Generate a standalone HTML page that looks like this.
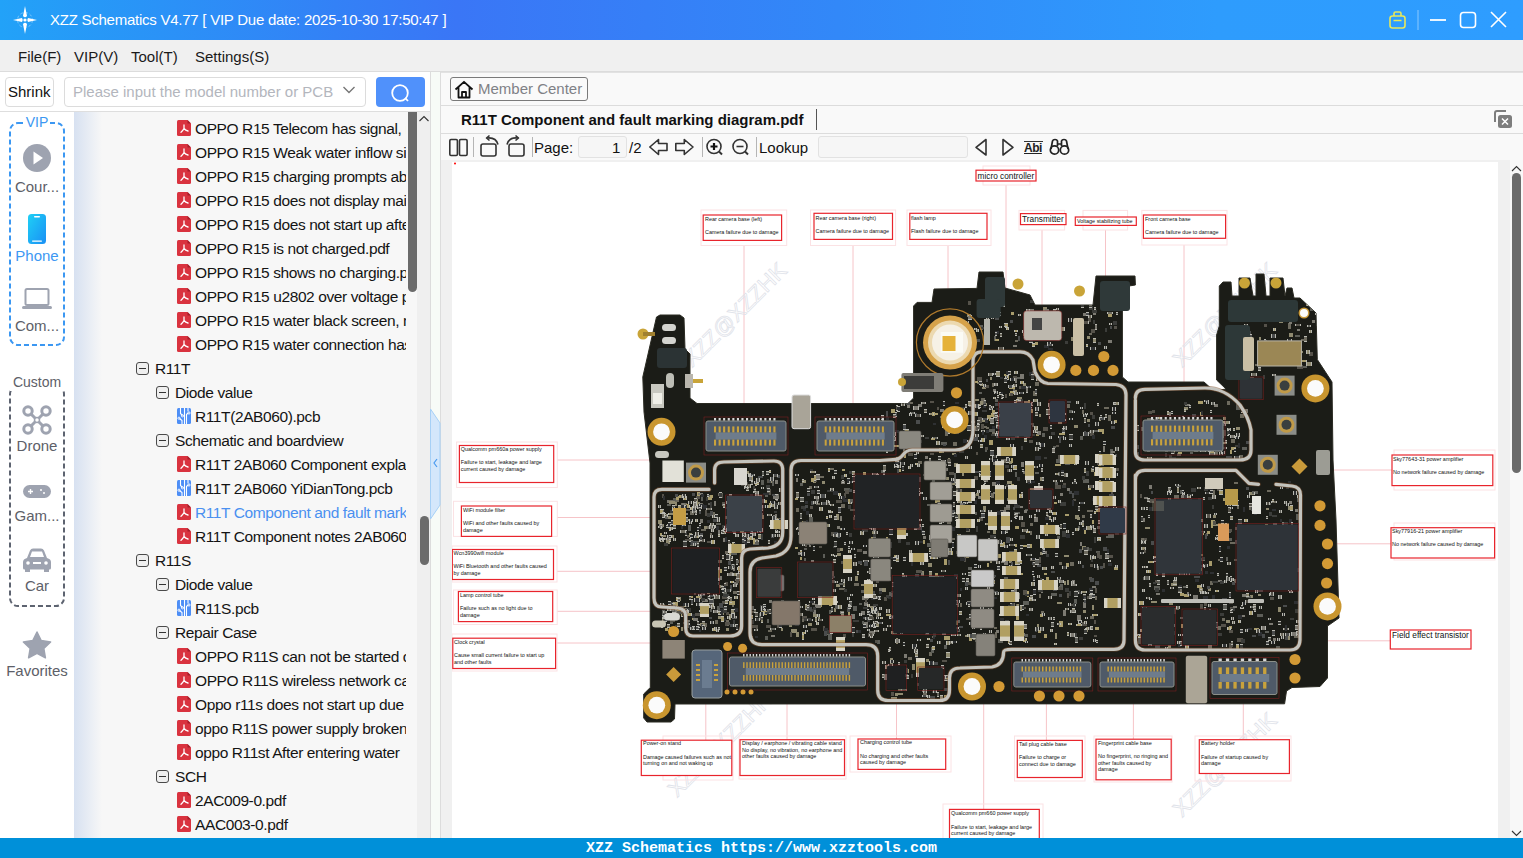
<!DOCTYPE html>
<html><head><meta charset="utf-8">
<style>
*{margin:0;padding:0;box-sizing:border-box}
html,body{width:1523px;height:858px;overflow:hidden;background:#f0f0f0;font-family:"Liberation Sans",sans-serif;font-size:15px;color:#111}
.a{position:absolute}
#title{left:0;top:0;width:1523px;height:40px;background:linear-gradient(90deg,#22a2f8 0%,#3381f6 22%,#3a76f6 30%,#3288f8 55%,#2e9cfd 80%,#2e9dff 100%)}
#title .t{left:50px;top:11px;color:#fff;font-size:15px;white-space:nowrap;letter-spacing:-0.25px}
#menu{left:0;top:40px;width:1523px;height:32px;background:#f0f0f0;border-bottom:1px solid #dcdcdc}
#menu span{position:absolute;top:8px;font-size:15px;color:#1a1a1a}
#srow{left:0;top:72px;width:431px;height:40px;background:#fff;border-bottom:1px solid #dedede}
.btn{border:1px solid #dcdcdc;border-radius:4px;background:#fff}
#nav{left:0;top:112px;width:74px;height:726px;background:#fff}
#tree{left:74px;top:112px;width:344px;height:726px;background:#f7f7f7;overflow:hidden}
#tree .grad{left:0;top:0;width:28px;height:726px;background:linear-gradient(90deg,#d7e1f1,#f7f7f7)}
.row{position:absolute;white-space:nowrap;font-size:15.5px;letter-spacing:-0.4px;color:#141414;height:24px;line-height:24px}
.box{position:absolute;width:13px;height:13px;border:1px solid #4a4a4a;border-radius:3px;background:#efefef}
.box:after{content:"";position:absolute;left:2px;top:5px;width:7px;height:1.3px;background:#333}
.nl{position:absolute;width:74px;text-align:center;font-size:15px;color:#5d6068}
#status{left:0;top:838px;width:1523px;height:20px;background:#0090d9}
#status .t{left:586px;top:2px;font-family:"Liberation Mono",monospace;font-size:15px;font-weight:bold;color:#fff;white-space:nowrap}
#rp{left:441px;top:72px;width:1082px;height:766px;background:#f9f9f9}
</style></head><body>

<!-- TITLE BAR -->
<div id="title" class="a">
  <svg class="a" style="left:12px;top:5px" width="26" height="30" viewBox="0 0 26 30">
    <circle cx="13" cy="15" r="7.5" fill="none" stroke="rgba(255,255,255,.35)" stroke-width="1" stroke-dasharray="3 2"/>
    <path d="M13 1 L15 11 Q13 13.5 11 11 Z" fill="#fff"/>
    <path d="M13 29 L15 19 Q13 16.5 11 19 Z" fill="#fff"/>
    <path d="M1 15 L10 13 Q11.5 15 10 17 Z" fill="#fff"/>
    <path d="M25 15 L16 13 Q14.5 15 16 17 Z" fill="#fff"/>
    <circle cx="13" cy="15" r="1.6" fill="#fff"/>
  </svg>
  <div class="a t">XZZ Schematics V4.77 [ VIP Due date: 2025-10-30 17:50:47 ]</div>
  <svg class="a" style="left:1388px;top:10px" width="125" height="22" viewBox="0 0 125 22">
    <rect x="2" y="6" width="15" height="12" rx="2.5" fill="none" stroke="#e8e85a" stroke-width="1.6"/>
    <path d="M6 6 V3.5 Q6 2 7.5 2 H11.5 Q13 2 13 3.5 V6" fill="none" stroke="#e8e85a" stroke-width="1.6"/>
    <line x1="5.5" y1="10.5" x2="13.5" y2="10.5" stroke="#e8e85a" stroke-width="1.5"/>
    <line x1="30" y1="0" x2="30" y2="20" stroke="rgba(255,255,255,.45)" stroke-width="1"/>
    <line x1="42" y1="10" x2="58" y2="10" stroke="#fff" stroke-width="1.8"/>
    <rect x="72.5" y="2.5" width="15" height="15" rx="3" fill="none" stroke="#fff" stroke-width="1.6"/>
    <path d="M103 2 L118 17 M118 2 L103 17" stroke="#fff" stroke-width="1.6"/>
  </svg>
</div>

<!-- MENU -->
<div id="menu" class="a">
  <span style="left:18px">File(F)</span>
  <span style="left:74px">VIP(V)</span>
  <span style="left:131px">Tool(T)</span>
  <span style="left:195px">Settings(S)</span>
</div>

<!-- SEARCH ROW -->
<div id="srow" class="a">
  <div class="a btn" style="left:5px;top:5px;width:49px;height:30px"></div>
  <div class="a" style="left:8px;top:11px;font-size:15px;color:#111">Shrink</div>
  <div class="a btn" style="left:64px;top:5px;width:302px;height:30px"></div>
  <div class="a" style="left:73px;top:11px;font-size:15px;color:#b3b6bd;white-space:nowrap">Please input the model number or PCB</div>
  <svg class="a" style="left:342px;top:13px" width="14" height="10" viewBox="0 0 14 10"><path d="M1.5 2 L7 7.5 L12.5 2" fill="none" stroke="#777" stroke-width="1.4"/></svg>
  <div class="a" style="left:376px;top:5px;width:49px;height:30px;background:#5091fb;border-radius:4px"></div>
  <svg class="a" style="left:388px;top:10px" width="26" height="22" viewBox="0 0 26 22"><circle cx="12" cy="11" r="7.8" fill="none" stroke="#fff" stroke-width="1.8"/><path d="M17.2 16 L20 19" stroke="#fff" stroke-width="1.8"/></svg>
</div>

<!-- NAV -->
<div id="nav" class="a">
<svg class="a" style="left:9px;top:10px" width="56" height="224"><rect x="1" y="1" width="54" height="222" rx="8" fill="none" stroke="#3b97f2" stroke-width="2" stroke-dasharray="5 3"/></svg>
<div class="a" style="left:24px;top:2px;width:26px;height:16px;background:#fff;color:#3b97f2;font-size:14px;text-align:center;line-height:16px">VIP</div>
<svg class="a" style="left:23px;top:32px" width="28" height="28" viewBox="0 0 28 28"><circle cx="14" cy="14" r="14" fill="#9ea3b0"/><path d="M10.5 7.5 L20 14 L10.5 20.5 Z" fill="#fff"/></svg>
<div class="nl" style="left:0;top:66px">Cour...</div>
<svg class="a" style="left:28px;top:102px" width="18" height="30" viewBox="0 0 18 30"><defs><linearGradient id="pg" x1="0" y1="0" x2="1" y2="1"><stop offset="0" stop-color="#1fd0f5"/><stop offset="1" stop-color="#1a8ff5"/></linearGradient></defs><rect x="0" y="0" width="18" height="30" rx="3.5" fill="url(#pg)"/><rect x="6" y="2" width="6" height="1.4" rx=".7" fill="#fff"/><rect x="4" y="26.5" width="10" height="1.2" rx=".6" fill="#fff"/></svg>
<div class="nl" style="left:0;top:135px;color:#3d98f3">Phone</div>
<svg class="a" style="left:22px;top:176px" width="30" height="22" viewBox="0 0 30 22"><rect x="3.5" y="1" width="23" height="16" rx="1.5" fill="none" stroke="#9ea3b0" stroke-width="2"/><rect x="0" y="18" width="30" height="3" rx="1.5" fill="#9ea3b0"/></svg>
<div class="nl" style="left:0;top:205px">Com...</div>

<svg class="a" style="left:9px;top:273px" width="56" height="222"><rect x="1" y="1" width="54" height="220" rx="8" fill="none" stroke="#5d6370" stroke-width="2" stroke-dasharray="5 3"/></svg>
<div class="a" style="left:10px;top:262px;width:54px;height:17px;background:#fff;color:#5d6068;font-size:14px;text-align:center;line-height:17px">Custom</div>
<svg class="a" style="left:22px;top:293px" width="30" height="30" viewBox="0 0 30 30"><g fill="none" stroke="#9ea3b0" stroke-width="3"><circle cx="6" cy="6" r="4.2"/><circle cx="24" cy="6" r="4.2"/><circle cx="6" cy="24" r="4.2"/><circle cx="24" cy="24" r="4.2"/><path d="M9 9 L21 21 M21 9 L9 21"/></g><circle cx="15" cy="15" r="2.5" fill="#fff" stroke="#9ea3b0" stroke-width="1.5"/></svg>
<div class="nl" style="left:0;top:325px">Drone</div>
<svg class="a" style="left:23px;top:373px" width="28" height="13" viewBox="0 0 28 13"><rect x="0" y="0" width="28" height="13" rx="6.5" fill="#9ea3b0"/><path d="M5 6.5 H10 M7.5 4 V9" stroke="#fff" stroke-width="1.4"/><circle cx="18" cy="5" r="1" fill="#fff"/><circle cx="21" cy="8" r="1" fill="#fff"/></svg>
<div class="nl" style="left:0;top:395px">Gam...</div>
<svg class="a" style="left:23px;top:436px" width="28" height="24" viewBox="0 0 28 24"><path d="M4 10 L7 2.5 Q8 0.5 10 0.5 H18 Q20 0.5 21 2.5 L24 10 Q28 11 28 14 V20 Q28 21.5 26.5 21.5 H1.5 Q0 21.5 0 20 V14 Q0 11 4 10Z" fill="#9ea3b0"/><path d="M7 9 L9 3.5 H19 L21 9Z" fill="#fff"/><rect x="2" y="21" width="5" height="3" fill="#9ea3b0"/><rect x="21" y="21" width="5" height="3" fill="#9ea3b0"/><circle cx="5" cy="15" r="1.8" fill="#fff"/><circle cx="23" cy="15" r="1.8" fill="#fff"/><rect x="10" y="14" width="8" height="2" fill="#fff"/></svg>
<div class="nl" style="left:0;top:465px">Car</div>
<svg class="a" style="left:22px;top:519px" width="30" height="28" viewBox="0 0 30 28"><path d="M15 1 L19.2 9.6 L28.6 10.9 L21.8 17.4 L23.4 26.8 L15 22.4 L6.6 26.8 L8.2 17.4 L1.4 10.9 L10.8 9.6 Z" fill="#9ea3b0" stroke="#9ea3b0" stroke-width="1.5" stroke-linejoin="round"/></svg>
<div class="nl" style="left:-2px;top:550px;width:78px">Favorites</div>
</div>
<!-- TREE -->
<div id="tree" class="a"><div class="a grad"></div>
<div class="a" style="left:0;top:0;width:332px;height:726px;overflow:hidden">
<svg class="a" style="left:103px;top:8px" width="14" height="16" viewBox="0 0 14 16"><path d="M1.5 0 H10.5 L14 3.5 V14.5 Q14 16 12.5 16 H1.5 Q0 16 0 14.5 V1.5 Q0 0 1.5 0Z" fill="#d9333f"/><path d="M10.5 0 L14 3.5 H10.5Z" fill="#a51e2a"/><path d="M7 5 V8.5 Q6 10.5 4 12.3 M7 8.5 Q8.5 10.5 11 11" fill="none" stroke="#fff" stroke-width="1.3" stroke-linecap="round"/></svg>
<div class="row" style="left:121px;top:5px;color:#141414">OPPO R15 Telecom has signal, no</div>
<svg class="a" style="left:103px;top:32px" width="14" height="16" viewBox="0 0 14 16"><path d="M1.5 0 H10.5 L14 3.5 V14.5 Q14 16 12.5 16 H1.5 Q0 16 0 14.5 V1.5 Q0 0 1.5 0Z" fill="#d9333f"/><path d="M10.5 0 L14 3.5 H10.5Z" fill="#a51e2a"/><path d="M7 5 V8.5 Q6 10.5 4 12.3 M7 8.5 Q8.5 10.5 11 11" fill="none" stroke="#fff" stroke-width="1.3" stroke-linecap="round"/></svg>
<div class="row" style="left:121px;top:29px;color:#141414">OPPO R15 Weak water inflow signal</div>
<svg class="a" style="left:103px;top:56px" width="14" height="16" viewBox="0 0 14 16"><path d="M1.5 0 H10.5 L14 3.5 V14.5 Q14 16 12.5 16 H1.5 Q0 16 0 14.5 V1.5 Q0 0 1.5 0Z" fill="#d9333f"/><path d="M10.5 0 L14 3.5 H10.5Z" fill="#a51e2a"/><path d="M7 5 V8.5 Q6 10.5 4 12.3 M7 8.5 Q8.5 10.5 11 11" fill="none" stroke="#fff" stroke-width="1.3" stroke-linecap="round"/></svg>
<div class="row" style="left:121px;top:53px;color:#141414">OPPO R15 charging prompts abnormal</div>
<svg class="a" style="left:103px;top:80px" width="14" height="16" viewBox="0 0 14 16"><path d="M1.5 0 H10.5 L14 3.5 V14.5 Q14 16 12.5 16 H1.5 Q0 16 0 14.5 V1.5 Q0 0 1.5 0Z" fill="#d9333f"/><path d="M10.5 0 L14 3.5 H10.5Z" fill="#a51e2a"/><path d="M7 5 V8.5 Q6 10.5 4 12.3 M7 8.5 Q8.5 10.5 11 11" fill="none" stroke="#fff" stroke-width="1.3" stroke-linecap="round"/></svg>
<div class="row" style="left:121px;top:77px;color:#141414">OPPO R15 does not display main</div>
<svg class="a" style="left:103px;top:104px" width="14" height="16" viewBox="0 0 14 16"><path d="M1.5 0 H10.5 L14 3.5 V14.5 Q14 16 12.5 16 H1.5 Q0 16 0 14.5 V1.5 Q0 0 1.5 0Z" fill="#d9333f"/><path d="M10.5 0 L14 3.5 H10.5Z" fill="#a51e2a"/><path d="M7 5 V8.5 Q6 10.5 4 12.3 M7 8.5 Q8.5 10.5 11 11" fill="none" stroke="#fff" stroke-width="1.3" stroke-linecap="round"/></svg>
<div class="row" style="left:121px;top:101px;color:#141414">OPPO R15 does not start up after</div>
<svg class="a" style="left:103px;top:128px" width="14" height="16" viewBox="0 0 14 16"><path d="M1.5 0 H10.5 L14 3.5 V14.5 Q14 16 12.5 16 H1.5 Q0 16 0 14.5 V1.5 Q0 0 1.5 0Z" fill="#d9333f"/><path d="M10.5 0 L14 3.5 H10.5Z" fill="#a51e2a"/><path d="M7 5 V8.5 Q6 10.5 4 12.3 M7 8.5 Q8.5 10.5 11 11" fill="none" stroke="#fff" stroke-width="1.3" stroke-linecap="round"/></svg>
<div class="row" style="left:121px;top:125px;color:#141414">OPPO R15 is not charged.pdf</div>
<svg class="a" style="left:103px;top:152px" width="14" height="16" viewBox="0 0 14 16"><path d="M1.5 0 H10.5 L14 3.5 V14.5 Q14 16 12.5 16 H1.5 Q0 16 0 14.5 V1.5 Q0 0 1.5 0Z" fill="#d9333f"/><path d="M10.5 0 L14 3.5 H10.5Z" fill="#a51e2a"/><path d="M7 5 V8.5 Q6 10.5 4 12.3 M7 8.5 Q8.5 10.5 11 11" fill="none" stroke="#fff" stroke-width="1.3" stroke-linecap="round"/></svg>
<div class="row" style="left:121px;top:149px;color:#141414">OPPO R15 shows no charging.pdf</div>
<svg class="a" style="left:103px;top:176px" width="14" height="16" viewBox="0 0 14 16"><path d="M1.5 0 H10.5 L14 3.5 V14.5 Q14 16 12.5 16 H1.5 Q0 16 0 14.5 V1.5 Q0 0 1.5 0Z" fill="#d9333f"/><path d="M10.5 0 L14 3.5 H10.5Z" fill="#a51e2a"/><path d="M7 5 V8.5 Q6 10.5 4 12.3 M7 8.5 Q8.5 10.5 11 11" fill="none" stroke="#fff" stroke-width="1.3" stroke-linecap="round"/></svg>
<div class="row" style="left:121px;top:173px;color:#141414">OPPO R15 u2802 over voltage protection</div>
<svg class="a" style="left:103px;top:200px" width="14" height="16" viewBox="0 0 14 16"><path d="M1.5 0 H10.5 L14 3.5 V14.5 Q14 16 12.5 16 H1.5 Q0 16 0 14.5 V1.5 Q0 0 1.5 0Z" fill="#d9333f"/><path d="M10.5 0 L14 3.5 H10.5Z" fill="#a51e2a"/><path d="M7 5 V8.5 Q6 10.5 4 12.3 M7 8.5 Q8.5 10.5 11 11" fill="none" stroke="#fff" stroke-width="1.3" stroke-linecap="round"/></svg>
<div class="row" style="left:121px;top:197px;color:#141414">OPPO R15 water black screen, no</div>
<svg class="a" style="left:103px;top:224px" width="14" height="16" viewBox="0 0 14 16"><path d="M1.5 0 H10.5 L14 3.5 V14.5 Q14 16 12.5 16 H1.5 Q0 16 0 14.5 V1.5 Q0 0 1.5 0Z" fill="#d9333f"/><path d="M10.5 0 L14 3.5 H10.5Z" fill="#a51e2a"/><path d="M7 5 V8.5 Q6 10.5 4 12.3 M7 8.5 Q8.5 10.5 11 11" fill="none" stroke="#fff" stroke-width="1.3" stroke-linecap="round"/></svg>
<div class="row" style="left:121px;top:221px;color:#141414">OPPO R15 water connection has</div>
<div class="box" style="left:62px;top:250px"></div>
<div class="row" style="left:81px;top:245px;color:#141414">R11T</div>
<div class="box" style="left:82px;top:274px"></div>
<div class="row" style="left:101px;top:269px;color:#141414">Diode value</div>
<svg class="a" style="left:103px;top:296px" width="14" height="16" viewBox="0 0 14 16"><rect x="0" y="0" width="14" height="16" rx="1.5" fill="#4d8ef6"/><path d="M3.5 0 V5.5 L5.5 7.5 M7.5 0 V16 M11 0 V3.5 M11 5 L9.5 6.5 V16 M2.5 10.5 L5 12.5 V16" fill="none" stroke="#fff" stroke-width="1.1"/><circle cx="5.5" cy="7.8" r="1.1" fill="none" stroke="#fff" stroke-width="0.9"/><circle cx="12" cy="5" r="1.1" fill="none" stroke="#fff" stroke-width="0.9"/><circle cx="2" cy="10.2" r="1.1" fill="none" stroke="#fff" stroke-width="0.9"/></svg>
<div class="row" style="left:121px;top:293px;color:#141414">R11T(2AB060).pcb</div>
<div class="box" style="left:82px;top:322px"></div>
<div class="row" style="left:101px;top:317px;color:#141414">Schematic and boardview</div>
<svg class="a" style="left:103px;top:344px" width="14" height="16" viewBox="0 0 14 16"><path d="M1.5 0 H10.5 L14 3.5 V14.5 Q14 16 12.5 16 H1.5 Q0 16 0 14.5 V1.5 Q0 0 1.5 0Z" fill="#d9333f"/><path d="M10.5 0 L14 3.5 H10.5Z" fill="#a51e2a"/><path d="M7 5 V8.5 Q6 10.5 4 12.3 M7 8.5 Q8.5 10.5 11 11" fill="none" stroke="#fff" stroke-width="1.3" stroke-linecap="round"/></svg>
<div class="row" style="left:121px;top:341px;color:#141414">R11T 2AB060 Component explanation</div>
<svg class="a" style="left:103px;top:368px" width="14" height="16" viewBox="0 0 14 16"><rect x="0" y="0" width="14" height="16" rx="1.5" fill="#4d8ef6"/><path d="M3.5 0 V5.5 L5.5 7.5 M7.5 0 V16 M11 0 V3.5 M11 5 L9.5 6.5 V16 M2.5 10.5 L5 12.5 V16" fill="none" stroke="#fff" stroke-width="1.1"/><circle cx="5.5" cy="7.8" r="1.1" fill="none" stroke="#fff" stroke-width="0.9"/><circle cx="12" cy="5" r="1.1" fill="none" stroke="#fff" stroke-width="0.9"/><circle cx="2" cy="10.2" r="1.1" fill="none" stroke="#fff" stroke-width="0.9"/></svg>
<div class="row" style="left:121px;top:365px;color:#141414">R11T 2AB060 YiDianTong.pcb</div>
<svg class="a" style="left:103px;top:392px" width="14" height="16" viewBox="0 0 14 16"><path d="M1.5 0 H10.5 L14 3.5 V14.5 Q14 16 12.5 16 H1.5 Q0 16 0 14.5 V1.5 Q0 0 1.5 0Z" fill="#d9333f"/><path d="M10.5 0 L14 3.5 H10.5Z" fill="#a51e2a"/><path d="M7 5 V8.5 Q6 10.5 4 12.3 M7 8.5 Q8.5 10.5 11 11" fill="none" stroke="#fff" stroke-width="1.3" stroke-linecap="round"/></svg>
<div class="row" style="left:121px;top:389px;color:#4a90f0">R11T Component and fault marking</div>
<svg class="a" style="left:103px;top:416px" width="14" height="16" viewBox="0 0 14 16"><path d="M1.5 0 H10.5 L14 3.5 V14.5 Q14 16 12.5 16 H1.5 Q0 16 0 14.5 V1.5 Q0 0 1.5 0Z" fill="#d9333f"/><path d="M10.5 0 L14 3.5 H10.5Z" fill="#a51e2a"/><path d="M7 5 V8.5 Q6 10.5 4 12.3 M7 8.5 Q8.5 10.5 11 11" fill="none" stroke="#fff" stroke-width="1.3" stroke-linecap="round"/></svg>
<div class="row" style="left:121px;top:413px;color:#141414">R11T Component notes  2AB060</div>
<div class="box" style="left:62px;top:442px"></div>
<div class="row" style="left:81px;top:437px;color:#141414">R11S</div>
<div class="box" style="left:82px;top:466px"></div>
<div class="row" style="left:101px;top:461px;color:#141414">Diode value</div>
<svg class="a" style="left:103px;top:488px" width="14" height="16" viewBox="0 0 14 16"><rect x="0" y="0" width="14" height="16" rx="1.5" fill="#4d8ef6"/><path d="M3.5 0 V5.5 L5.5 7.5 M7.5 0 V16 M11 0 V3.5 M11 5 L9.5 6.5 V16 M2.5 10.5 L5 12.5 V16" fill="none" stroke="#fff" stroke-width="1.1"/><circle cx="5.5" cy="7.8" r="1.1" fill="none" stroke="#fff" stroke-width="0.9"/><circle cx="12" cy="5" r="1.1" fill="none" stroke="#fff" stroke-width="0.9"/><circle cx="2" cy="10.2" r="1.1" fill="none" stroke="#fff" stroke-width="0.9"/></svg>
<div class="row" style="left:121px;top:485px;color:#141414">R11S.pcb</div>
<div class="box" style="left:82px;top:514px"></div>
<div class="row" style="left:101px;top:509px;color:#141414">Repair Case</div>
<svg class="a" style="left:103px;top:536px" width="14" height="16" viewBox="0 0 14 16"><path d="M1.5 0 H10.5 L14 3.5 V14.5 Q14 16 12.5 16 H1.5 Q0 16 0 14.5 V1.5 Q0 0 1.5 0Z" fill="#d9333f"/><path d="M10.5 0 L14 3.5 H10.5Z" fill="#a51e2a"/><path d="M7 5 V8.5 Q6 10.5 4 12.3 M7 8.5 Q8.5 10.5 11 11" fill="none" stroke="#fff" stroke-width="1.3" stroke-linecap="round"/></svg>
<div class="row" style="left:121px;top:533px;color:#141414">OPPO R11S can not be started or</div>
<svg class="a" style="left:103px;top:560px" width="14" height="16" viewBox="0 0 14 16"><path d="M1.5 0 H10.5 L14 3.5 V14.5 Q14 16 12.5 16 H1.5 Q0 16 0 14.5 V1.5 Q0 0 1.5 0Z" fill="#d9333f"/><path d="M10.5 0 L14 3.5 H10.5Z" fill="#a51e2a"/><path d="M7 5 V8.5 Q6 10.5 4 12.3 M7 8.5 Q8.5 10.5 11 11" fill="none" stroke="#fff" stroke-width="1.3" stroke-linecap="round"/></svg>
<div class="row" style="left:121px;top:557px;color:#141414">OPPO R11S wireless network can</div>
<svg class="a" style="left:103px;top:584px" width="14" height="16" viewBox="0 0 14 16"><path d="M1.5 0 H10.5 L14 3.5 V14.5 Q14 16 12.5 16 H1.5 Q0 16 0 14.5 V1.5 Q0 0 1.5 0Z" fill="#d9333f"/><path d="M10.5 0 L14 3.5 H10.5Z" fill="#a51e2a"/><path d="M7 5 V8.5 Q6 10.5 4 12.3 M7 8.5 Q8.5 10.5 11 11" fill="none" stroke="#fff" stroke-width="1.3" stroke-linecap="round"/></svg>
<div class="row" style="left:121px;top:581px;color:#141414">Oppo r11s does not start up due</div>
<svg class="a" style="left:103px;top:608px" width="14" height="16" viewBox="0 0 14 16"><path d="M1.5 0 H10.5 L14 3.5 V14.5 Q14 16 12.5 16 H1.5 Q0 16 0 14.5 V1.5 Q0 0 1.5 0Z" fill="#d9333f"/><path d="M10.5 0 L14 3.5 H10.5Z" fill="#a51e2a"/><path d="M7 5 V8.5 Q6 10.5 4 12.3 M7 8.5 Q8.5 10.5 11 11" fill="none" stroke="#fff" stroke-width="1.3" stroke-linecap="round"/></svg>
<div class="row" style="left:121px;top:605px;color:#141414">oppo R11S power supply broken</div>
<svg class="a" style="left:103px;top:632px" width="14" height="16" viewBox="0 0 14 16"><path d="M1.5 0 H10.5 L14 3.5 V14.5 Q14 16 12.5 16 H1.5 Q0 16 0 14.5 V1.5 Q0 0 1.5 0Z" fill="#d9333f"/><path d="M10.5 0 L14 3.5 H10.5Z" fill="#a51e2a"/><path d="M7 5 V8.5 Q6 10.5 4 12.3 M7 8.5 Q8.5 10.5 11 11" fill="none" stroke="#fff" stroke-width="1.3" stroke-linecap="round"/></svg>
<div class="row" style="left:121px;top:629px;color:#141414">oppo R11st After entering water</div>
<div class="box" style="left:82px;top:658px"></div>
<div class="row" style="left:101px;top:653px;color:#141414">SCH</div>
<svg class="a" style="left:103px;top:680px" width="14" height="16" viewBox="0 0 14 16"><path d="M1.5 0 H10.5 L14 3.5 V14.5 Q14 16 12.5 16 H1.5 Q0 16 0 14.5 V1.5 Q0 0 1.5 0Z" fill="#d9333f"/><path d="M10.5 0 L14 3.5 H10.5Z" fill="#a51e2a"/><path d="M7 5 V8.5 Q6 10.5 4 12.3 M7 8.5 Q8.5 10.5 11 11" fill="none" stroke="#fff" stroke-width="1.3" stroke-linecap="round"/></svg>
<div class="row" style="left:121px;top:677px;color:#141414">2AC009-0.pdf</div>
<svg class="a" style="left:103px;top:704px" width="14" height="16" viewBox="0 0 14 16"><path d="M1.5 0 H10.5 L14 3.5 V14.5 Q14 16 12.5 16 H1.5 Q0 16 0 14.5 V1.5 Q0 0 1.5 0Z" fill="#d9333f"/><path d="M10.5 0 L14 3.5 H10.5Z" fill="#a51e2a"/><path d="M7 5 V8.5 Q6 10.5 4 12.3 M7 8.5 Q8.5 10.5 11 11" fill="none" stroke="#fff" stroke-width="1.3" stroke-linecap="round"/></svg>
<div class="row" style="left:121px;top:701px;color:#141414">AAC003-0.pdf</div>
</div>
<div class="a" style="left:334px;top:0;width:9px;height:180px;background:#6b6b6b;border-radius:0 0 5px 5px"></div>
</div>
<div class="a" style="left:417px;top:112px;width:13px;height:726px;background:#efefef"></div>
<svg class="a" style="left:418px;top:114px" width="12" height="10" viewBox="0 0 12 10"><path d="M1.5 7 L6 2.5 L10.5 7" fill="none" stroke="#333" stroke-width="1.1"/></svg>
<div class="a" style="left:420px;top:516px;width:9px;height:49px;background:#6b6b6b;border-radius:5px"></div>
<div class="a" style="left:430px;top:72px;width:1px;height:766px;background:#dcdcdc"></div>
<div class="a" style="left:431px;top:72px;width:9px;height:766px;background:#f7fbf7"></div>
<div class="a" style="left:440px;top:72px;width:1px;height:766px;background:#dcdcdc"></div>
<svg class="a" style="left:430px;top:405px" width="11" height="118" viewBox="0 0 11 118"><path d="M0.5 4 L10 18 V100 L0.5 114 Z" fill="#d4e7fb" stroke="#a6d0f6" stroke-width="1"/><path d="M7 54 L4 58 L7 62" fill="none" stroke="#4a9af0" stroke-width="1.2"/></svg>


<!-- RIGHT PANE -->
<div id="rp" class="a">
<div class="a" style="left:0;top:0;width:1082px;height:1px;background:#e2e2e2"></div>
<div class="a btn" style="left:9px;top:5px;width:138px;height:24px;border-color:#7a7a7a;border-radius:3px;background:#fafafa"></div>
<svg class="a" style="left:13px;top:8px" width="20" height="19" viewBox="0 0 20 19"><path d="M1.5 9.5 L10 1.8 L18.5 9.5 M4.5 7 V17.5 H15.5 V7 M8 17.5 V12 H12 V17.5" fill="none" stroke="#111" stroke-width="1.8" stroke-linejoin="round"/></svg>
<div class="a" style="left:37px;top:8px;font-size:15px;color:#7f8186;white-space:nowrap">Member Center</div>
<div class="a" style="left:0;top:33px;width:1082px;height:1px;background:#dcdcdc"></div>
<div class="a" style="left:20px;top:39px;font-size:15px;font-weight:bold;color:#111;white-space:nowrap">R11T Component and fault marking diagram.pdf</div>
<div class="a" style="left:375px;top:37px;width:1px;height:21px;background:#555"></div>
<svg class="a" style="left:1052px;top:37px" width="22" height="20" viewBox="0 0 22 20"><path d="M2 13 V4 Q2 2 4 2 H13" fill="none" stroke="#7d7d7d" stroke-width="2"/><rect x="5" y="6" width="14" height="13" rx="2.5" fill="#7d7d7d"/><path d="M9 9.5 L15 15.5 M15 9.5 L9 15.5" stroke="#fff" stroke-width="1.5"/></svg>
<div class="a" style="left:0;top:61px;width:1082px;height:1px;background:#dcdcdc"></div>
<!-- toolbar -->
<svg class="a" style="left:0;top:62px" width="640" height="26" viewBox="0 0 640 26">
  <g fill="none" stroke="#333" stroke-width="1.6" stroke-linejoin="round">
    <rect x="8.8" y="5.5" width="7.6" height="16" rx="1.2"/>
    <rect x="18.5" y="5.5" width="7.6" height="16" rx="1.2"/>
    <rect x="40" y="10" width="15" height="12" rx="2"/>
    <path d="M57 10.5 Q55 3 46 4"/><path d="M48.5 1.5 L45.5 4 L48.5 6.5"/>
    <rect x="68" y="10" width="15" height="12" rx="2"/>
    <path d="M66 10.5 Q68 3 77 4"/><path d="M74.5 1.5 L77.5 4 L74.5 6.5"/>
    <path d="M208.8 13 L217.5 5.5 V9.5 H226 V16.5 H217.5 V20.5 Z"/>
    <path d="M252 13 L243.3 5.5 V9.5 H234.8 V16.5 H243.3 V20.5 Z"/>
    <circle cx="273" cy="12.5" r="7"/><path d="M278 17.5 L281 20.5" stroke-width="2"/>
    <circle cx="299" cy="12.5" r="7"/><path d="M304 17.5 L307 20.5" stroke-width="2"/>
    <path d="M545 5.5 L535 13.3 L545 21 Z"/>
    <path d="M562 5.5 L572 13.3 L562 21 Z"/>
  </g>
  <path d="M269.5 12.5 H276.5 M273 9 V16" stroke="#111" stroke-width="2.2"/>
  <path d="M295.5 12.5 H302.5" stroke="#333" stroke-width="1.6"/>
  <g fill="#b5b5b5"><rect x="32" y="3" width="1" height="20"/><rect x="91" y="3" width="1" height="20"/><rect x="261" y="3" width="1" height="20"/><rect x="315" y="3" width="1" height="20"/></g>
</svg>
<div class="a" style="left:93px;top:67px;font-size:15px;color:#111">Page:</div>
<div class="a" style="left:137px;top:64px;width:49px;height:22px;border:1px solid #e2e2e2;border-radius:3px;background:#f6f6f6"></div>
<div class="a" style="left:171px;top:67px;font-size:15px;color:#111">1</div>
<div class="a" style="left:188px;top:67px;font-size:15px;color:#111">/2</div>
<div class="a" style="left:318px;top:67px;font-size:15px;color:#111">Lookup</div>
<div class="a" style="left:377px;top:64px;width:150px;height:22px;border:1px solid #e2e2e2;border-radius:3px;background:#f6f6f6"></div>
<div class="a" style="left:583px;top:69px;font-size:12px;font-weight:bold;color:#222;letter-spacing:-0.5px;text-decoration:underline;text-decoration-thickness:1px">Abi</div>
<div class="a" style="left:583px;top:69px;width:19px;height:1px;background:#333"></div>
<svg class="a" style="left:608px;top:66px" width="22" height="18" viewBox="0 0 22 18"><g fill="none" stroke="#222" stroke-width="1.7"><circle cx="5.5" cy="12" r="4.2"/><circle cx="15.5" cy="12" r="4.2"/><path d="M2 11 L3.5 3 Q4 1.5 6 1.5 Q8 1.5 8.5 3 V8 M19 11 L17.5 3 Q17 1.5 15 1.5 Q13 1.5 12.5 3 V8 M8.5 6 H12.5"/></g></svg>
<!-- doc view -->
<div class="a" id="dv" style="left:0;top:88px;width:1082px;height:678px;background:#f0f0f0"></div>
<div class="a" style="left:11px;top:90px;width:1046px;height:676px;background:#fff"></div>
<div class="a" style="left:1069px;top:88px;width:13px;height:678px;background:#f8f8f8"></div>
<svg class="a" style="left:1069px;top:92px" width="13" height="10" viewBox="0 0 13 10"><path d="M2 7 L6.5 2.5 L11 7" fill="none" stroke="#333" stroke-width="1.1"/></svg>
<div class="a" style="left:1071px;top:101px;width:9px;height:300px;background:#6b6b6b;border-radius:5px"></div>
<svg class="a" style="left:1069px;top:756px" width="13" height="10" viewBox="0 0 13 10"><path d="M2 3 L6.5 7.5 L11 3" fill="none" stroke="#333" stroke-width="1.1"/></svg>
</div>

<!--DOC--><svg class="a" style="left:452px;top:162px" width="1046" height="676" viewBox="452 162 1046 676"><line x1="1006" y1="185" x2="1006" y2="300" stroke="#f6c4c8" stroke-width="1"/><line x1="744" y1="245" x2="744" y2="420" stroke="#f6c4c8" stroke-width="1"/><line x1="853" y1="245" x2="853" y2="420" stroke="#f6c4c8" stroke-width="1"/><line x1="948" y1="245" x2="948" y2="340" stroke="#f6c4c8" stroke-width="1"/><line x1="1042" y1="230" x2="1042" y2="330" stroke="#f6c4c8" stroke-width="1"/><line x1="1105.5" y1="230" x2="1105.5" y2="300" stroke="#f6c4c8" stroke-width="1"/><line x1="1184" y1="245" x2="1184" y2="440" stroke="#f6c4c8" stroke-width="1"/><line x1="557" y1="460" x2="700" y2="460" stroke="#f6c4c8" stroke-width="1"/><line x1="557" y1="517.5" x2="700" y2="517.5" stroke="#f6c4c8" stroke-width="1"/><line x1="557" y1="571.3" x2="720" y2="571.3" stroke="#f6c4c8" stroke-width="1"/><line x1="557" y1="611.3" x2="740" y2="611.3" stroke="#f6c4c8" stroke-width="1"/><line x1="557" y1="643" x2="700" y2="643" stroke="#f6c4c8" stroke-width="1"/><line x1="1392" y1="470" x2="1320" y2="470" stroke="#f6c4c8" stroke-width="1"/><line x1="1391" y1="543.8" x2="1300" y2="543.8" stroke="#f6c4c8" stroke-width="1"/><line x1="1390" y1="640.8" x2="1300" y2="640.8" stroke="#f6c4c8" stroke-width="1"/><line x1="705.8" y1="740" x2="705.8" y2="690" stroke="#f6c4c8" stroke-width="1"/><line x1="787" y1="740" x2="787" y2="680" stroke="#f6c4c8" stroke-width="1"/><line x1="896.5" y1="739" x2="896.5" y2="680" stroke="#f6c4c8" stroke-width="1"/><line x1="1046.4" y1="740" x2="1046.4" y2="690" stroke="#f6c4c8" stroke-width="1"/><line x1="1133.4" y1="739" x2="1133.4" y2="690" stroke="#f6c4c8" stroke-width="1"/><line x1="1243.3" y1="739" x2="1243.3" y2="690" stroke="#f6c4c8" stroke-width="1"/><line x1="983.7" y1="809" x2="983.7" y2="700" stroke="#f6c4c8" stroke-width="1"/><text x="740" y="320" transform="rotate(-45 740 320)" font-size="22" fill="none" stroke="#dfe3ea" stroke-width="0.8" text-anchor="middle" font-family="Liberation Sans">XZZ@XZZHK</text><text x="1230" y="320" transform="rotate(-45 1230 320)" font-size="22" fill="none" stroke="#dfe3ea" stroke-width="0.8" text-anchor="middle" font-family="Liberation Sans">XZZ@XZZHK</text><text x="725" y="750" transform="rotate(-45 725 750)" font-size="22" fill="none" stroke="#dfe3ea" stroke-width="0.8" text-anchor="middle" font-family="Liberation Sans">XZZ@XZZHK</text><text x="1230" y="770" transform="rotate(-45 1230 770)" font-size="22" fill="none" stroke="#dfe3ea" stroke-width="0.8" text-anchor="middle" font-family="Liberation Sans">XZZ@XZZHK</text><defs><clipPath id="bc"><path d="M660,315 L680,315 L684,318 L685,349 L690,354 L690,398 L697,403.5 L908,403.5 L913.6,398 L913.6,306 L917,302.4 L932,302.4 L934,289 L977,288.4 L979,272 L1003,272 L1005,288 L1030,295 L1035,305 L1093,305 L1096,276 L1135,276 L1135.4,285 L1122.4,287 L1122.4,377 L1128,382 L1204,382 L1214,391 L1226,389 L1216.6,380 L1216.6,335 L1219.3,326 L1219.3,286 L1223,282 L1231,282 L1232,296 L1239,296 L1239,278 L1250,278 L1253,296 L1256,296 L1256,274 L1264,274 L1266,296 L1270,296 L1270,278 L1283,278 L1285,296 L1287,288 L1292,288 L1294,298 L1300,298 L1316,313 L1317.3,359.5 L1332,382 L1333,460 L1336,520 L1339,618 L1327.5,626 L1327.5,678 L1320,686.5 L1292,687.5 L1286.5,691 L1284.6,703.8 L675,704 L674.5,719 L671,722 L647,722 L643.7,718 L643.7,694 L650.3,687.5 L650,463 L644,412 L642.8,377 L656.5,317Z"/></clipPath></defs><path d="M660,315 L680,315 L684,318 L685,349 L690,354 L690,398 L697,403.5 L908,403.5 L913.6,398 L913.6,306 L917,302.4 L932,302.4 L934,289 L977,288.4 L979,272 L1003,272 L1005,288 L1030,295 L1035,305 L1093,305 L1096,276 L1135,276 L1135.4,285 L1122.4,287 L1122.4,377 L1128,382 L1204,382 L1214,391 L1226,389 L1216.6,380 L1216.6,335 L1219.3,326 L1219.3,286 L1223,282 L1231,282 L1232,296 L1239,296 L1239,278 L1250,278 L1253,296 L1256,296 L1256,274 L1264,274 L1266,296 L1270,296 L1270,278 L1283,278 L1285,296 L1287,288 L1292,288 L1294,298 L1300,298 L1316,313 L1317.3,359.5 L1332,382 L1333,460 L1336,520 L1339,618 L1327.5,626 L1327.5,678 L1320,686.5 L1292,687.5 L1286.5,691 L1284.6,703.8 L675,704 L674.5,719 L671,722 L647,722 L643.7,718 L643.7,694 L650.3,687.5 L650,463 L644,412 L642.8,377 L656.5,317Z" fill="#1b1c17" stroke="#2a2a22" stroke-width="1" stroke-linejoin="round"/><g clip-path="url(#bc)"><path fill="#6d6a5e" d="M661 535h2v4h-2zM701 529h5v2h-5zM690 544h4v2h-4zM708 495h3v4h-3zM710 533h2v5h-2zM722 529h2v5h-2zM669 500h5v2h-5zM690 511h4v4h-4zM712 515h3v3h-3zM664 538h3v2h-3zM660 524h2v5h-2zM705 526h6v3h-6zM731 496h4v2h-4zM662 512h3v6h-3zM675 500h4v2h-4zM731 506h3v3h-3zM680 530h6v3h-6zM725 516h4v3h-4zM736 506h3v3h-3zM723 528h5v2h-5zM697 504h4v3h-4zM706 526h3v3h-3zM718 493h5v3h-5zM681 503h6v2h-6zM706 508h6v2h-6zM699 503h4v3h-4zM737 522h2v3h-2zM689 538h2v4h-2zM673 525h3v4h-3zM712 512h3v4h-3zM710 523h4v3h-4zM760 513h3v6h-3zM767 514h5v2h-5zM768 540h2v4h-2zM741 517h2v3h-2zM747 538h3v5h-3zM755 503h4v3h-4zM778 520h3v4h-3zM745 502h5v3h-5zM746 487h3v4h-3zM770 478h4v3h-4zM754 539h4v2h-4zM745 484h6v4h-6zM741 515h3v3h-3zM750 533h3v4h-3zM777 494h2v4h-2zM775 494h3v6h-3zM750 516h3v2h-3zM684 608h4v2h-4zM716 629h3v3h-3zM703 608h4v3h-4zM677 623h3v4h-3zM704 623h3v4h-3zM715 620h3v4h-3zM702 621h3v5h-3zM727 616h3v3h-3zM734 616h3v2h-3zM726 620h3v6h-3zM730 597h2v6h-2zM672 603h3v4h-3zM711 606h4v3h-4zM714 595h6v4h-6zM732 602h2v5h-2zM718 611h3v4h-3zM667 624h3v4h-3zM722 555h2v4h-2zM736 573h4v6h-4zM725 551h3v3h-3zM733 591h4v3h-4zM709 577h2v3h-2zM705 554h4v2h-4zM730 572h3v2h-3zM735 579h6v2h-6zM703 591h2v4h-2zM718 560h4v3h-4zM819 476h5v2h-5zM796 492h3v6h-3zM833 559h3v4h-3zM818 569h3v4h-3zM796 528h4v2h-4zM809 486h3v3h-3zM855 503h3v4h-3zM816 503h4v2h-4zM796 508h3v4h-3zM810 579h2v5h-2zM839 588h6v2h-6zM868 515h3v5h-3zM875 499h2v5h-2zM831 554h3v2h-3zM830 488h4v3h-4zM830 468h4v2h-4zM808 581h4v2h-4zM855 492h4v2h-4zM841 504h4v4h-4zM853 562h4v4h-4zM830 504h4v2h-4zM866 526h3v2h-3zM860 561h2v4h-2zM854 583h5v3h-5zM857 481h4v4h-4zM824 572h5v2h-5zM1049 416h3v3h-3zM899 513h3v5h-3zM1030 531h2v4h-2zM991 493h3v5h-3zM894 475h3v2h-3zM998 487h4v4h-4zM1046 512h2v4h-2zM1053 517h3v3h-3zM921 435h3v2h-3zM1006 507h4v3h-4zM1000 471h3v3h-3zM1058 500h3v3h-3zM1070 562h4v4h-4zM901 403h4v3h-4zM939 553h2v5h-2zM1108 415h3v6h-3zM1087 510h6v2h-6zM1082 515h3v3h-3zM977 490h3v3h-3zM914 526h3v4h-3zM966 445h4v4h-4zM1067 404h3v4h-3zM958 489h4v4h-4zM1049 508h2v5h-2zM940 416h4v2h-4zM1037 402h4v4h-4zM881 470h3v3h-3zM909 402h4v2h-4zM903 451h3v5h-3zM927 467h3v5h-3zM918 524h3v3h-3zM943 545h2v3h-2zM1084 550h4v5h-4zM918 461h4v3h-4zM969 464h2v3h-2zM919 519h3v2h-3zM1064 473h3v4h-3zM1035 412h3v4h-3zM968 507h4v3h-4zM1105 414h2v4h-2zM906 516h4v2h-4zM1004 507h2v5h-2zM996 561h4v3h-4zM1059 562h3v3h-3zM1046 540h6v2h-6zM1066 530h3v3h-3zM945 430h3v6h-3zM951 538h4v2h-4zM1030 523h3v3h-3zM889 567h3v2h-3zM947 520h4v4h-4zM969 494h4v3h-4zM1055 403h3v3h-3zM997 484h3v2h-3zM1051 566h3v3h-3zM1076 401h3v3h-3zM1082 410h2v4h-2zM969 405h4v2h-4zM890 495h4v6h-4zM896 555h3v3h-3zM986 427h3v2h-3zM957 412h3v4h-3zM966 529h4v3h-4zM1099 463h5v3h-5zM973 429h6v2h-6zM1104 511h3v3h-3zM883 465h3v6h-3zM1098 502h5v2h-5zM1020 420h2v5h-2zM953 442h4v4h-4zM1107 474h4v3h-4zM991 406h3v2h-3zM1053 480h4v2h-4zM1034 514h2v4h-2zM967 484h3v4h-3zM1023 471h3v3h-3zM992 431h3v4h-3zM891 497h2v3h-2zM979 473h6v4h-6zM1047 515h2v4h-2zM939 519h3v5h-3zM1104 407h5v2h-5zM1022 529h6v3h-6zM1097 403h2v3h-2zM893 524h5v3h-5zM933 471h4v4h-4zM1009 469h3v3h-3zM936 543h3v6h-3zM1084 418h2v5h-2zM987 531h3v2h-3zM1001 459h5v4h-5zM974 494h2v4h-2zM942 418h4v3h-4zM1046 409h4v6h-4zM924 409h3v4h-3zM893 414h3v4h-3zM966 551h5v2h-5zM991 541h2v4h-2zM959 538h4v2h-4zM1030 558h5v3h-5zM1021 492h2v4h-2zM1089 333h3v2h-3zM1053 309h3v4h-3zM1052 317h2v3h-2zM1057 319h3v3h-3zM1034 315h3v3h-3zM1088 315h4v3h-4zM987 302h3v4h-3zM1018 314h3v2h-3zM1107 312h6v2h-6zM1015 340h3v2h-3zM986 313h5v3h-5zM1000 333h2v4h-2zM1089 304h3v4h-3zM1004 323h3v4h-3zM1035 408h3v3h-3zM999 392h4v2h-4zM974 428h5v2h-5zM1036 378h4v3h-4zM1036 429h2v4h-2zM993 413h4v5h-4zM980 401h4v3h-4zM1035 382h4v4h-4zM981 398h4v3h-4zM984 426h3v2h-3zM1033 391h4v5h-4zM1013 384h4v3h-4zM988 373h5v3h-5zM1008 371h3v4h-3zM1013 386h2v6h-2zM1017 435h2v3h-2zM996 425h6v3h-6zM977 382h3v2h-3zM1013 392h4v2h-4zM992 383h2v4h-2zM1227 562h4v3h-4zM1234 579h2v4h-2zM1286 585h4v3h-4zM1212 490h3v6h-3zM1168 498h3v3h-3zM1291 522h2v6h-2zM1199 558h6v3h-6zM1178 587h4v6h-4zM1234 482h4v2h-4zM1285 528h3v4h-3zM1210 581h3v4h-3zM1268 541h3v2h-3zM1264 560h3v3h-3zM1173 580h4v5h-4zM1249 504h2v6h-2zM1175 511h4v2h-4zM1206 533h2v3h-2zM1284 536h4v6h-4zM1271 501h6v2h-6zM1192 520h4v4h-4zM1141 538h4v4h-4zM1267 490h4v2h-4zM1153 556h5v3h-5zM1284 533h6v3h-6zM1237 506h2v3h-2zM1218 559h5v2h-5zM1227 504h4v2h-4zM1254 540h5v2h-5zM1230 542h6v2h-6zM1162 573h3v4h-3zM1266 539h5v4h-5zM1279 584h2v4h-2zM1191 555h5v2h-5zM1159 525h3v3h-3zM1199 589h4v2h-4zM1174 495h5v4h-5zM1197 487h4v2h-4zM1275 549h2v3h-2zM1266 533h4v4h-4zM1288 562h3v3h-3zM1240 414h4v4h-4zM1147 418h5v3h-5zM1147 457h5v2h-5zM1151 418h2v3h-2zM1217 427h3v6h-3zM1162 436h2v5h-2zM1209 452h6v3h-6zM1225 440h2v3h-2zM1231 439h4v4h-4zM1227 401h3v4h-3zM1200 450h6v2h-6zM1161 436h3v3h-3zM1162 429h6v4h-6zM1239 455h4v4h-4zM1212 452h6v3h-6zM932 636h3v2h-3zM980 598h4v3h-4zM957 634h4v2h-4zM960 603h2v4h-2zM1041 611h3v5h-3zM957 601h2v6h-2zM1016 604h3v3h-3zM995 632h2v6h-2zM1065 608h4v2h-4zM957 594h4v3h-4zM1059 586h4v3h-4zM875 575h5v3h-5zM897 577h2v4h-2zM994 627h3v2h-3zM949 641h4v3h-4zM931 582h4v2h-4zM873 594h3v5h-3zM1071 581h3v3h-3zM937 641h4v3h-4zM1090 616h4v3h-4zM1095 596h2v4h-2zM1012 603h3v3h-3zM867 595h6v2h-6zM876 611h3v6h-3zM1038 581h4v3h-4zM979 638h3v5h-3zM923 595h4v3h-4zM951 625h3v3h-3zM1039 594h2v4h-2zM972 583h4v3h-4zM999 614h5v2h-5zM886 609h4v4h-4zM925 581h4v3h-4zM1030 595h3v4h-3zM797 613h6v3h-6zM875 621h3v6h-3zM849 616h2v4h-2zM802 618h2v4h-2zM829 610h3v3h-3zM754 609h2v4h-2zM764 606h2v5h-2zM768 630h4v2h-4zM848 605h3v4h-3zM824 633h4v2h-4zM787 617h4v2h-4zM835 601h3v2h-3zM871 615h2v4h-2zM843 623h2v4h-2zM796 603h3v2h-3zM1288 323h3v6h-3zM1301 339h4v2h-4zM1251 373h6v3h-6zM1279 347h6v2h-6zM1231 314h2v4h-2zM1244 357h2v4h-2zM1232 365h3v2h-3zM1255 364h3v2h-3zM1291 356h6v3h-6zM1304 336h3v6h-3zM1294 635h5v3h-5zM1152 617h4v4h-4zM1173 608h6v2h-6zM1208 645h4v5h-4zM1155 639h4v3h-4zM1253 604h3v6h-3zM1176 606h4v3h-4zM1144 609h4v3h-4zM1146 622h6v2h-6zM1232 621h3v3h-3zM1231 641h2v4h-2zM1222 618h3v3h-3zM1283 628h6v2h-6zM1167 621h2v4h-2zM1280 633h4v3h-4zM1151 615h4v5h-4zM1240 607h4v2h-4zM1190 610h6v3h-6zM1217 626h4v4h-4zM926 644h3v4h-3zM923 693h4v2h-4zM889 647h2v4h-2zM916 651h2v3h-2zM936 676h3v3h-3zM929 652h3v4h-3zM908 657h4v3h-4zM882 674h2v4h-2zM901 689h6v2h-6zM914 649h4v4h-4z"/><path fill="#8f8a70" d="M664 514h4v3h-4zM669 501h6v3h-6zM721 532h5v2h-5zM675 502h2v4h-2zM735 524h3v3h-3zM728 543h3v3h-3zM670 527h3v3h-3zM666 540h4v4h-4zM660 538h4v4h-4zM695 519h3v3h-3zM658 520h4v4h-4zM684 513h2v4h-2zM699 535h4v2h-4zM723 504h2v4h-2zM696 502h4v2h-4zM668 513h6v2h-6zM669 539h2v3h-2zM661 524h3v3h-3zM718 534h2v3h-2zM724 526h5v2h-5zM683 496h4v4h-4zM695 499h3v3h-3zM658 506h3v2h-3zM669 535h5v3h-5zM667 516h4v3h-4zM684 505h6v3h-6zM689 533h3v4h-3zM704 526h3v3h-3zM663 535h3v2h-3zM771 503h4v4h-4zM744 480h3v3h-3zM770 480h4v3h-4zM755 526h3v3h-3zM742 497h2v6h-2zM746 523h3v5h-3zM748 473h3v3h-3zM758 495h4v2h-4zM762 515h2v4h-2zM758 534h3v5h-3zM748 518h2v3h-2zM745 471h4v3h-4zM754 489h2v3h-2zM745 501h4v4h-4zM755 540h4v2h-4zM759 526h3v2h-3zM708 603h6v4h-6zM729 614h2v6h-2zM670 615h2v5h-2zM718 612h6v3h-6zM718 616h4v3h-4zM662 617h2v6h-2zM676 597h5v4h-5zM734 596h4v3h-4zM726 628h3v3h-3zM681 627h2v4h-2zM700 623h5v3h-5zM677 609h3v5h-3zM731 609h4v5h-4zM725 600h3v4h-3zM686 610h3v3h-3zM737 567h3v3h-3zM707 589h3v5h-3zM692 558h3v3h-3zM703 576h4v3h-4zM716 571h3v2h-3zM733 573h4v3h-4zM700 581h5v2h-5zM719 585h2v3h-2zM697 583h2v3h-2zM873 479h4v4h-4zM860 482h2v3h-2zM872 531h4v3h-4zM873 584h4v3h-4zM836 514h3v6h-3zM848 550h3v3h-3zM802 479h2v3h-2zM807 588h3v3h-3zM857 518h3v4h-3zM855 576h3v5h-3zM873 497h3v4h-3zM857 571h2v4h-2zM836 584h4v3h-4zM813 479h3v4h-3zM828 510h3v3h-3zM852 471h3v4h-3zM862 514h6v4h-6zM837 553h4v3h-4zM822 481h3v3h-3zM864 507h5v4h-5zM810 471h6v2h-6zM829 515h3v3h-3zM829 511h4v2h-4zM864 508h6v3h-6zM839 548h4v3h-4zM834 533h3v3h-3zM843 582h2v5h-2zM840 528h4v2h-4zM826 524h4v3h-4zM848 502h4v2h-4zM802 480h4v3h-4zM875 525h2v3h-2zM860 531h4v4h-4zM819 507h4v4h-4zM999 414h3v3h-3zM1097 537h4v4h-4zM1049 516h2v4h-2zM936 464h6v2h-6zM1039 414h2v3h-2zM908 466h3v3h-3zM1074 462h3v3h-3zM983 506h3v6h-3zM985 523h4v2h-4zM936 441h4v4h-4zM993 530h3v4h-3zM962 497h2v3h-2zM944 477h5v3h-5zM980 444h3v4h-3zM902 438h2v5h-2zM1099 480h2v4h-2zM1040 552h3v3h-3zM1108 471h5v3h-5zM1097 455h3v4h-3zM906 429h3v4h-3zM1007 481h5v3h-5zM929 413h5v2h-5zM1099 418h2v3h-2zM968 498h4v5h-4zM1084 468h2v5h-2zM928 563h4v4h-4zM1082 521h2v6h-2zM1009 461h3v3h-3zM1030 488h4v2h-4zM1074 425h4v3h-4zM1077 517h3v3h-3zM1087 419h3v3h-3zM938 482h3v3h-3zM1024 401h4v2h-4zM941 450h3v3h-3zM1034 426h4v4h-4zM896 558h3v4h-3zM1113 402h6v3h-6zM1042 567h5v3h-5zM1064 555h5v2h-5zM996 487h2v4h-2zM1075 528h4v3h-4zM1009 560h3v3h-3zM948 458h2v4h-2zM943 418h2v3h-2zM968 401h3v5h-3zM1049 510h3v3h-3zM1003 432h4v4h-4zM1104 504h4v3h-4zM881 547h3v6h-3zM1024 438h3v4h-3zM1015 415h3v3h-3zM1109 461h4v2h-4zM1082 546h4v4h-4zM957 499h5v4h-5zM938 503h3v4h-3zM954 463h4v4h-4zM905 505h3v3h-3zM955 410h6v2h-6zM957 514h3v5h-3zM1100 517h4v2h-4zM1055 473h4v2h-4zM1066 473h2v3h-2zM990 559h2v4h-2zM962 472h2v4h-2zM1086 526h6v4h-6zM1040 501h3v2h-3zM952 453h4v2h-4zM952 483h5v2h-5zM904 509h4v4h-4zM980 401h3v4h-3zM929 548h2v4h-2zM936 515h2v6h-2zM1075 515h4v4h-4zM1034 500h6v3h-6zM948 429h2v5h-2zM1040 477h3v4h-3zM1056 531h4v4h-4zM1092 556h4v3h-4zM881 555h4v2h-4zM976 493h3v3h-3zM934 555h4v4h-4zM940 462h4v3h-4zM1058 422h4v2h-4zM1091 468h3v4h-3zM928 544h5v2h-5zM1017 561h3v4h-3zM1058 327h6v2h-6zM967 314h4v3h-4zM1087 336h3v3h-3zM1071 337h5v4h-5zM1043 307h4v4h-4zM980 308h4v3h-4zM969 341h2v5h-2zM1042 333h3v4h-3zM1043 338h3v2h-3zM976 329h3v3h-3zM1093 338h3v5h-3zM962 331h4v2h-4zM1061 327h4v4h-4zM1017 397h5v3h-5zM982 418h3v4h-3zM990 418h4v6h-4zM996 371h4v6h-4zM1023 383h3v3h-3zM980 383h3v3h-3zM977 423h2v4h-2zM990 377h2v3h-2zM974 426h4v2h-4zM1017 412h4v3h-4zM1004 424h3v4h-3zM975 399h4v2h-4zM1014 371h4v3h-4zM1033 399h5v3h-5zM1010 406h4v4h-4zM999 392h2v3h-2zM1015 390h2v5h-2zM1009 393h4v3h-4zM1027 435h3v3h-3zM984 403h3v3h-3zM993 397h3v2h-3zM982 387h4v2h-4zM1213 524h6v2h-6zM1145 527h5v2h-5zM1191 542h2v3h-2zM1291 572h4v5h-4zM1270 582h2v3h-2zM1278 556h6v2h-6zM1218 527h2v3h-2zM1171 583h6v3h-6zM1177 518h3v3h-3zM1187 495h4v3h-4zM1208 588h3v3h-3zM1288 506h3v4h-3zM1287 581h4v3h-4zM1249 492h6v3h-6zM1177 487h2v6h-2zM1250 595h3v3h-3zM1184 505h6v3h-6zM1261 541h3v4h-3zM1183 520h3v6h-3zM1141 547h5v3h-5zM1232 501h4v5h-4zM1230 516h3v4h-3zM1274 542h3v2h-3zM1170 564h3v5h-3zM1254 503h3v6h-3zM1146 570h3v3h-3zM1247 570h2v3h-2zM1253 529h3v2h-3zM1266 508h3v2h-3zM1272 499h2v3h-2zM1265 560h2v4h-2zM1281 538h2v6h-2zM1213 515h3v3h-3zM1199 588h4v4h-4zM1246 593h3v4h-3zM1158 546h4v2h-4zM1218 536h4v5h-4zM1258 594h3v2h-3zM1248 526h3v3h-3zM1167 411h2v4h-2zM1224 421h6v3h-6zM1198 438h6v3h-6zM1179 424h6v2h-6zM1223 442h4v2h-4zM1184 409h2v3h-2zM1223 417h3v3h-3zM1233 428h2v3h-2zM1236 427h4v3h-4zM1183 441h3v4h-3zM1188 433h2v5h-2zM1184 407h4v3h-4zM987 639h6v3h-6zM929 571h3v6h-3zM921 571h3v5h-3zM990 580h3v2h-3zM913 582h2v3h-2zM1020 605h2v6h-2zM1067 632h2v4h-2zM967 634h3v3h-3zM1031 582h4v4h-4zM923 628h3v3h-3zM878 613h3v3h-3zM1029 597h4v4h-4zM973 638h3v2h-3zM1089 588h3v3h-3zM1037 575h3v2h-3zM908 623h2v5h-2zM903 576h2v5h-2zM930 579h4v3h-4zM926 598h4v3h-4zM881 588h5v4h-5zM1057 602h5v2h-5zM896 638h2v6h-2zM959 611h3v4h-3zM1064 581h2v4h-2zM945 621h6v2h-6zM933 615h4v3h-4zM1054 643h3v2h-3zM1006 609h3v3h-3zM1050 629h3v3h-3zM1092 605h2v5h-2zM1083 610h3v3h-3zM904 608h4v2h-4zM965 635h5v2h-5zM1081 591h6v2h-6zM901 584h2v4h-2zM861 584h3v2h-3zM953 608h2v3h-2zM935 584h3v2h-3zM889 616h2v3h-2zM1042 579h2v4h-2zM1072 608h3v5h-3zM1055 633h2v6h-2zM1037 624h2v3h-2zM928 614h3v4h-3zM1067 580h2v5h-2zM1068 623h4v2h-4zM876 624h3v3h-3zM1086 627h2v5h-2zM1017 604h2v4h-2zM1084 621h3v3h-3zM902 573h2v4h-2zM891 631h6v3h-6zM841 612h3v4h-3zM798 600h2v4h-2zM813 614h4v3h-4zM750 636h3v3h-3zM791 629h6v4h-6zM789 623h3v4h-3zM814 614h5v2h-5zM791 611h2v3h-2zM827 602h2v3h-2zM818 616h2v3h-2zM815 617h2v5h-2zM818 601h6v2h-6zM838 605h4v4h-4zM845 620h2v6h-2zM834 608h2v4h-2zM808 623h4v3h-4zM781 628h2v3h-2zM874 622h2v3h-2zM870 606h4v2h-4zM761 617h2v6h-2zM816 622h3v3h-3zM867 604h3v3h-3zM775 616h4v6h-4zM805 604h2v6h-2zM796 632h3v5h-3zM1279 321h4v2h-4zM1306 350h4v4h-4zM1233 371h2v3h-2zM1306 362h6v4h-6zM1300 351h3v2h-3zM1289 333h4v4h-4zM1259 337h2v3h-2zM1306 303h5v3h-5zM1309 330h3v3h-3zM1307 300h3v6h-3zM1278 607h3v5h-3zM1167 619h3v4h-3zM1151 601h6v2h-6zM1149 640h3v5h-3zM1226 620h4v3h-4zM1287 636h3v4h-3zM1190 638h2v5h-2zM1169 602h4v3h-4zM1231 600h3v3h-3zM1168 645h3v3h-3zM915 653h3v4h-3zM940 695h3v4h-3zM890 658h3v6h-3zM890 671h4v4h-4zM885 665h4v4h-4zM912 664h3v6h-3zM929 679h3v3h-3zM945 676h4v3h-4zM892 678h3v3h-3zM898 693h5v2h-5zM946 652h4v6h-4zM895 693h3v3h-3zM891 697h6v3h-6zM898 687h4v4h-4zM926 659h3v3h-3zM946 641h4v4h-4z"/><path fill="#5d5e58" d="M667 504h4v2h-4zM701 495h2v6h-2zM688 525h3v6h-3zM673 538h3v3h-3zM665 516h3v3h-3zM658 505h3v3h-3zM672 505h3v6h-3zM664 513h2v3h-2zM716 523h5v2h-5zM729 518h3v3h-3zM693 543h3v3h-3zM692 506h4v4h-4zM660 509h4v5h-4zM708 503h4v2h-4zM728 514h3v3h-3zM707 494h2v3h-2zM723 528h4v4h-4zM668 526h2v3h-2zM673 498h3v3h-3zM699 507h2v4h-2zM667 524h4v2h-4zM697 543h2v4h-2zM677 512h5v3h-5zM766 471h3v4h-3zM754 488h2v5h-2zM756 478h4v4h-4zM747 518h6v3h-6zM753 501h2v4h-2zM774 505h4v4h-4zM751 481h2v4h-2zM761 480h3v5h-3zM762 471h2v5h-2zM779 488h4v4h-4zM781 486h3v3h-3zM776 531h4v2h-4zM751 529h2v3h-2zM776 519h3v6h-3zM772 534h4v3h-4zM759 528h4v4h-4zM756 513h3v2h-3zM765 495h3v2h-3zM753 541h6v4h-6zM742 533h4v4h-4zM770 521h3v3h-3zM772 481h2v5h-2zM778 518h5v4h-5zM710 609h2v3h-2zM732 617h5v2h-5zM687 622h2v6h-2zM667 608h4v3h-4zM717 606h3v6h-3zM672 612h2v3h-2zM662 610h3v5h-3zM703 608h2v6h-2zM660 604h5v3h-5zM690 627h4v3h-4zM680 606h4v4h-4zM708 596h2v3h-2zM733 624h3v3h-3zM675 614h3v4h-3zM692 626h3v4h-3zM670 621h3v3h-3zM677 598h3v4h-3zM664 618h3v4h-3zM662 615h3v4h-3zM672 607h4v6h-4zM712 598h2v6h-2zM731 551h6v4h-6zM721 585h2v5h-2zM713 594h4v2h-4zM729 556h4v3h-4zM717 582h2v3h-2zM731 564h4v6h-4zM723 590h4v5h-4zM695 559h3v4h-3zM700 566h2v4h-2zM710 566h4v5h-4zM736 559h2v6h-2zM736 560h3v3h-3zM704 557h6v4h-6zM698 594h3v2h-3zM815 501h3v3h-3zM802 543h3v3h-3zM809 567h3v2h-3zM869 523h4v3h-4zM861 590h3v3h-3zM823 554h2v4h-2zM831 571h3v6h-3zM834 555h3v2h-3zM800 526h3v4h-3zM800 497h4v5h-4zM803 592h2v3h-2zM818 588h3v5h-3zM815 586h4v4h-4zM854 554h2v4h-2zM800 483h3v3h-3zM846 532h2v3h-2zM804 541h6v4h-6zM807 525h4v3h-4zM844 488h6v3h-6zM841 579h4v3h-4zM872 473h6v2h-6zM816 498h3v4h-3zM869 568h2v6h-2zM839 583h5v2h-5zM809 517h4v5h-4zM870 569h2v4h-2zM866 582h2v4h-2zM813 501h3v3h-3zM871 571h2v4h-2zM873 555h6v3h-6zM820 542h4v2h-4zM829 580h6v3h-6zM814 486h5v2h-5zM800 513h2v6h-2zM850 499h3v4h-3zM876 596h4v3h-4zM804 548h3v2h-3zM804 558h2v3h-2zM826 580h2v5h-2zM814 477h4v3h-4zM983 484h2v4h-2zM1112 527h5v3h-5zM1029 500h3v4h-3zM1013 553h5v2h-5zM916 452h3v2h-3zM940 483h2v5h-2zM1036 535h4v4h-4zM932 479h3v3h-3zM1035 559h4v6h-4zM1005 529h3v4h-3zM961 535h3v4h-3zM1036 442h4v3h-4zM881 470h4v3h-4zM1079 522h3v3h-3zM967 440h4v2h-4zM1051 411h5v3h-5zM956 424h2v4h-2zM988 510h4v2h-4zM1035 472h4v2h-4zM913 512h2v3h-2zM932 437h6v2h-6zM886 449h2v4h-2zM927 543h5v4h-5zM942 531h5v2h-5zM1056 459h4v4h-4zM948 548h4v4h-4zM1065 461h5v4h-5zM1055 482h3v4h-3zM968 411h6v4h-6zM895 556h4v2h-4zM1074 456h6v4h-6zM1028 544h3v2h-3zM904 429h4v5h-4zM897 475h3v4h-3zM1096 551h4v2h-4zM1069 410h4v3h-4zM1115 565h3v3h-3zM1035 488h5v2h-5zM910 412h5v2h-5zM1049 543h2v4h-2zM1014 512h6v2h-6zM1080 436h3v4h-3zM1087 549h3v2h-3zM1097 526h3v3h-3zM1001 496h2v6h-2zM1090 525h4v3h-4zM1042 433h3v4h-3zM929 535h4v3h-4zM901 529h4v3h-4zM980 510h5v2h-5zM968 567h4v3h-4zM927 504h4v2h-4zM896 500h4v4h-4zM1098 504h4v3h-4zM965 502h3v2h-3zM1108 534h6v4h-6zM1106 536h3v2h-3zM954 512h5v2h-5zM1058 472h2v4h-2zM1049 436h3v3h-3zM885 482h4v3h-4zM896 504h3v2h-3zM1063 426h4v4h-4zM965 468h4v3h-4zM1093 430h6v2h-6zM1115 447h4v4h-4zM1009 551h5v3h-5zM1085 547h4v2h-4zM941 442h6v3h-6zM1026 554h6v2h-6zM996 422h3v4h-3zM1110 449h3v5h-3zM1083 479h6v4h-6zM883 471h2v4h-2zM1015 472h2v5h-2zM1078 526h2v4h-2zM1078 506h2v5h-2zM904 400h3v4h-3zM1057 536h3v3h-3zM1050 419h5v2h-5zM1005 524h3v6h-3zM985 447h2v5h-2zM989 405h2v5h-2zM887 493h3v4h-3zM1000 448h2v5h-2zM889 484h2v3h-2zM917 488h3v4h-3zM896 457h3v4h-3zM950 505h2v4h-2zM1032 424h2v3h-2zM954 473h2v6h-2zM975 512h2v3h-2zM1025 509h3v2h-3zM1053 446h3v2h-3zM1014 485h3v4h-3zM1028 333h6v2h-6zM971 329h2v6h-2zM994 336h2v5h-2zM1116 312h2v3h-2zM1024 333h2v6h-2zM960 332h3v5h-3zM980 325h3v5h-3zM999 326h3v2h-3zM1051 315h5v3h-5zM1052 312h6v3h-6zM989 429h6v3h-6zM989 408h4v2h-4zM1005 376h3v2h-3zM996 431h3v3h-3zM1026 405h3v2h-3zM1020 426h3v2h-3zM995 399h3v3h-3zM984 400h2v6h-2zM1029 403h3v3h-3zM1013 411h3v2h-3zM997 416h2v5h-2zM1014 377h6v2h-6zM1026 435h4v3h-4zM979 392h3v2h-3zM1203 591h3v3h-3zM1246 596h5v2h-5zM1157 580h3v5h-3zM1297 498h2v4h-2zM1164 516h3v6h-3zM1174 577h3v3h-3zM1284 501h3v3h-3zM1275 531h2v3h-2zM1176 485h5v2h-5zM1296 514h3v6h-3zM1226 557h2v4h-2zM1180 490h4v4h-4zM1141 540h5v4h-5zM1279 510h3v3h-3zM1167 580h2v5h-2zM1224 580h3v3h-3zM1204 524h4v4h-4zM1141 507h4v3h-4zM1167 561h5v2h-5zM1217 573h2v3h-2zM1252 491h6v3h-6zM1159 544h4v3h-4zM1249 562h4v2h-4zM1226 577h4v4h-4zM1267 503h4v2h-4zM1173 535h6v2h-6zM1235 527h3v3h-3zM1266 580h2v6h-2zM1240 533h4v2h-4zM1144 566h4v2h-4zM1168 555h4v2h-4zM1191 502h6v4h-6zM1146 507h2v3h-2zM1143 577h4v3h-4zM1179 571h6v4h-6zM1183 586h4v2h-4zM1154 586h6v4h-6zM1144 576h6v4h-6zM1269 593h5v3h-5zM1281 564h3v3h-3zM1161 555h4v6h-4zM1289 544h3v4h-3zM1167 560h4v3h-4zM1227 531h4v2h-4zM1168 487h3v5h-3zM1188 529h3v5h-3zM1159 559h5v3h-5zM1157 522h4v3h-4zM1229 538h3v3h-3zM1171 517h2v5h-2zM1154 439h2v5h-2zM1189 431h6v3h-6zM1190 452h3v2h-3zM1221 446h2v4h-2zM1147 446h3v6h-3zM1177 453h4v3h-4zM1208 446h3v6h-3zM1242 447h5v3h-5zM1182 432h2v3h-2zM1191 432h6v2h-6zM1141 427h3v4h-3zM1236 404h4v6h-4zM1194 450h4v2h-4zM1211 402h4v3h-4zM1151 419h3v4h-3zM1222 433h2v5h-2zM965 587h3v3h-3zM877 640h3v4h-3zM985 615h3v2h-3zM904 628h4v3h-4zM990 575h2v3h-2zM1051 622h3v5h-3zM995 592h4v3h-4zM968 572h3v4h-3zM923 592h3v2h-3zM998 639h5v4h-5zM937 613h4v2h-4zM991 570h2v4h-2zM975 638h2v4h-2zM979 619h4v3h-4zM1023 601h6v4h-6zM901 602h6v3h-6zM942 629h4v6h-4zM889 592h4v5h-4zM1051 593h6v3h-6zM972 572h3v3h-3zM899 595h2v4h-2zM1004 577h4v3h-4zM930 615h2v5h-2zM890 615h4v4h-4zM867 571h5v2h-5zM972 633h4v6h-4zM923 611h6v2h-6zM1048 617h4v3h-4zM981 635h5v2h-5zM1075 637h3v6h-3zM1072 633h3v3h-3zM879 571h3v3h-3zM957 629h3v3h-3zM1024 634h4v3h-4zM956 620h4v3h-4zM1040 627h4v4h-4zM900 631h3v3h-3zM1060 584h3v6h-3zM901 588h2v5h-2zM1074 599h3v5h-3zM853 606h4v5h-4zM781 600h3v4h-3zM751 606h3v4h-3zM765 636h3v4h-3zM849 601h3v6h-3zM770 628h6v2h-6zM865 617h4v3h-4zM767 619h2v4h-2zM759 613h2v6h-2zM754 629h4v2h-4zM859 603h3v2h-3zM806 607h4v4h-4zM767 609h4v3h-4zM828 634h4v6h-4zM835 605h3v4h-3zM829 610h2v4h-2zM867 629h3v2h-3zM831 607h2v5h-2zM862 621h2v3h-2zM817 614h3v3h-3zM845 619h4v3h-4zM1316 322h2v4h-2zM1280 350h3v3h-3zM1298 341h3v6h-3zM1284 360h2v6h-2zM1266 360h5v3h-5zM1302 366h5v2h-5zM1307 325h4v2h-4zM1273 341h3v4h-3zM1298 356h2v4h-2zM1232 333h3v3h-3zM1295 335h5v2h-5zM1239 312h2v3h-2zM1310 305h3v6h-3zM1153 625h2v5h-2zM1209 609h2v6h-2zM1201 613h3v4h-3zM1180 641h2v5h-2zM1186 621h3v3h-3zM1206 637h2v4h-2zM1169 611h4v4h-4zM1180 617h4v2h-4zM1145 610h4v4h-4zM1268 637h3v4h-3zM1276 646h4v3h-4zM1223 604h4v6h-4zM1257 614h6v3h-6zM1208 604h3v3h-3zM1265 631h4v2h-4zM1296 620h3v3h-3zM1250 606h4v2h-4zM1149 615h5v4h-5zM905 674h3v3h-3zM937 692h2v5h-2zM944 675h4v6h-4zM931 647h3v6h-3zM923 689h4v4h-4zM944 645h3v4h-3zM896 666h4v3h-4zM935 680h4v2h-4z"/><path fill="#a89c6c" d="M661 538h4v2h-4zM710 495h3v3h-3zM696 504h4v2h-4zM708 497h4v3h-4zM676 496h3v4h-3zM660 533h2v3h-2zM737 514h3v3h-3zM732 542h3v4h-3zM658 526h4v2h-4zM687 519h3v2h-3zM694 536h5v2h-5zM679 495h4v3h-4zM684 495h2v5h-2zM674 511h3v4h-3zM734 524h3v4h-3zM697 492h3v4h-3zM678 505h3v4h-3zM690 507h3v3h-3zM726 501h6v3h-6zM686 504h3v4h-3zM669 527h2v4h-2zM660 510h3v3h-3zM711 540h4v4h-4zM767 505h4v3h-4zM756 506h4v3h-4zM769 503h3v3h-3zM749 476h4v5h-4zM748 537h5v3h-5zM748 496h2v4h-2zM757 482h2v3h-2zM748 512h3v6h-3zM763 500h4v3h-4zM751 534h2v4h-2zM753 538h2v6h-2zM769 470h2v3h-2zM755 483h2v3h-2zM774 518h4v4h-4zM740 529h4v4h-4zM676 597h2v4h-2zM729 601h6v4h-6zM704 604h6v3h-6zM681 611h2v6h-2zM696 596h5v3h-5zM687 613h5v3h-5zM712 628h5v3h-5zM665 628h3v3h-3zM721 616h3v6h-3zM675 609h6v3h-6zM689 596h4v2h-4zM684 603h4v4h-4zM672 602h6v4h-6zM692 618h3v2h-3zM710 584h4v5h-4zM738 566h3v6h-3zM729 552h2v4h-2zM719 569h3v4h-3zM730 581h4v2h-4zM714 573h3v2h-3zM701 586h6v2h-6zM826 516h2v3h-2zM795 547h3v2h-3zM865 590h4v4h-4zM811 478h4v4h-4zM829 591h3v3h-3zM795 498h3v2h-3zM848 499h2v5h-2zM842 469h3v2h-3zM871 537h2v4h-2zM814 475h2v6h-2zM802 521h2v3h-2zM859 481h2v4h-2zM855 496h2v3h-2zM838 493h3v3h-3zM844 474h3v3h-3zM863 472h3v5h-3zM875 524h4v2h-4zM808 590h4v4h-4zM855 475h2v3h-2zM875 525h4v2h-4zM800 550h2v4h-2zM802 531h3v3h-3zM828 468h2v4h-2zM800 557h2v3h-2zM867 490h2v5h-2zM1046 523h2v4h-2zM1100 508h4v3h-4zM897 462h2v6h-2zM1015 544h2v3h-2zM888 523h2v3h-2zM935 516h3v6h-3zM1020 560h2v4h-2zM1090 555h3v5h-3zM915 463h3v2h-3zM1094 511h2v3h-2zM1096 508h5v4h-5zM939 448h3v5h-3zM961 408h4v4h-4zM964 548h3v3h-3zM1029 544h3v4h-3zM1065 514h4v2h-4zM1052 512h5v3h-5zM956 410h3v4h-3zM998 554h3v4h-3zM1013 465h4v5h-4zM1098 429h6v3h-6zM931 438h4v2h-4zM1114 567h4v3h-4zM1014 549h3v4h-3zM1098 460h3v6h-3zM898 469h3v3h-3zM1023 545h6v2h-6zM886 542h3v4h-3zM1003 542h2v5h-2zM1008 427h3v4h-3zM944 559h3v6h-3zM968 493h3v3h-3zM989 440h4v5h-4zM1084 530h2v4h-2zM957 534h4v3h-4zM966 555h3v3h-3zM990 518h3v2h-3zM925 463h4v2h-4zM982 497h2v3h-2zM1056 527h4v4h-4zM1018 423h4v4h-4zM991 413h3v4h-3zM964 482h3v4h-3zM886 537h2v6h-2zM901 504h3v2h-3zM1059 433h6v2h-6zM923 540h2v4h-2zM902 516h2v5h-2zM1102 431h2v3h-2zM1015 560h3v5h-3zM932 413h6v2h-6zM893 445h6v2h-6zM949 416h3v4h-3zM1015 526h4v3h-4zM891 409h4v4h-4zM905 533h3v3h-3zM1013 552h2v6h-2zM1000 543h3v4h-3zM913 555h3v3h-3zM999 500h3v3h-3zM1092 520h2v4h-2zM1117 510h3v2h-3zM1026 531h4v2h-4zM896 459h2v6h-2zM1002 522h3v6h-3zM1066 563h3v4h-3zM987 563h2v4h-2zM1031 467h2v3h-2zM981 438h4v4h-4zM977 519h3v3h-3zM904 454h2v4h-2zM932 412h3v4h-3zM947 551h6v4h-6zM1088 487h3v3h-3zM905 430h3v6h-3zM930 557h4v2h-4zM1011 428h4v3h-4zM1114 420h3v3h-3zM1063 419h3v2h-3zM1094 472h4v4h-4zM1043 427h4v4h-4zM1005 419h6v2h-6zM1019 494h4v4h-4zM1055 464h6v2h-6zM1011 484h3v3h-3zM1005 403h3v4h-3zM1011 458h2v5h-2zM1054 502h3v2h-3zM1098 537h2v3h-2zM935 499h5v4h-5zM894 555h3v6h-3zM1027 310h3v5h-3zM964 343h4v4h-4zM989 304h5v4h-5zM1005 323h3v5h-3zM1014 330h4v2h-4zM1023 333h3v3h-3zM1011 312h3v3h-3zM1044 322h3v2h-3zM1035 342h3v3h-3zM1086 344h2v3h-2zM1024 338h3v2h-3zM977 307h4v4h-4zM1027 331h2v3h-2zM1108 314h4v3h-4zM1006 327h3v3h-3zM995 339h4v2h-4zM1037 336h3v4h-3zM1032 343h3v4h-3zM1036 434h3v2h-3zM1016 399h3v5h-3zM1007 375h2v5h-2zM992 410h3v3h-3zM1004 374h3v2h-3zM1002 395h2v3h-2zM1010 391h4v3h-4zM988 415h3v4h-3zM978 405h2v4h-2zM1024 419h3v4h-3zM974 404h6v3h-6zM989 419h4v2h-4zM974 412h4v4h-4zM1015 413h4v2h-4zM1009 387h6v2h-6zM1020 381h4v3h-4zM1029 409h4v4h-4zM987 415h4v3h-4zM1028 400h2v3h-2zM975 381h3v2h-3zM1016 428h3v4h-3zM1021 423h3v4h-3zM1146 570h5v3h-5zM1267 549h3v4h-3zM1265 524h3v4h-3zM1200 554h3v2h-3zM1154 556h3v6h-3zM1223 498h2v3h-2zM1244 519h4v3h-4zM1173 527h5v3h-5zM1219 490h4v5h-4zM1211 524h2v4h-2zM1199 568h3v6h-3zM1287 532h2v3h-2zM1290 579h3v3h-3zM1200 533h4v2h-4zM1211 520h4v4h-4zM1193 519h3v3h-3zM1191 533h3v3h-3zM1201 519h2v3h-2zM1186 547h3v4h-3zM1215 590h4v2h-4zM1184 594h5v3h-5zM1148 561h6v2h-6zM1200 586h2v4h-2zM1243 555h3v3h-3zM1180 593h4v3h-4zM1197 585h4v3h-4zM1209 561h3v5h-3zM1284 553h2v3h-2zM1290 505h3v6h-3zM1197 539h4v2h-4zM1171 514h2v6h-2zM1194 553h3v4h-3zM1271 531h5v2h-5zM1207 531h3v3h-3zM1200 440h5v2h-5zM1175 429h5v2h-5zM1210 450h4v3h-4zM1170 420h6v4h-6zM1178 452h4v2h-4zM1171 451h4v2h-4zM1196 419h2v5h-2zM1231 447h5v3h-5zM1198 401h5v3h-5zM1230 450h2v4h-2zM1214 446h3v5h-3zM1204 427h6v3h-6zM1222 421h3v3h-3zM1158 417h4v2h-4zM1169 449h4v2h-4zM1200 412h3v4h-3zM1192 423h4v3h-4zM1213 437h2v3h-2zM1020 573h3v2h-3zM954 577h3v2h-3zM1076 624h6v2h-6zM993 580h2v4h-2zM969 636h3v5h-3zM1095 627h4v3h-4zM1042 586h4v2h-4zM1044 634h3v4h-3zM1092 614h6v2h-6zM911 584h4v3h-4zM1085 628h2v6h-2zM1027 591h2v6h-2zM972 626h3v3h-3zM1044 573h3v2h-3zM944 636h6v4h-6zM1040 614h3v3h-3zM931 627h3v3h-3zM917 616h3v5h-3zM914 616h3v3h-3zM1046 577h3v5h-3zM886 614h5v2h-5zM927 638h3v2h-3zM956 621h2v4h-2zM1018 626h6v3h-6zM1016 614h3v6h-3zM1008 638h2v6h-2zM880 617h3v2h-3zM1038 630h3v3h-3zM871 608h5v2h-5zM921 599h2v4h-2zM1021 638h6v2h-6zM945 614h3v4h-3zM1078 620h4v3h-4zM935 573h3v5h-3zM987 599h4v3h-4zM1023 638h4v4h-4zM1059 621h4v6h-4zM802 632h4v2h-4zM829 602h3v4h-3zM750 615h3v4h-3zM791 611h4v5h-4zM776 607h5v2h-5zM761 611h6v4h-6zM848 611h2v5h-2zM818 603h4v4h-4zM761 608h4v3h-4zM839 616h3v5h-3zM802 634h2v6h-2zM1291 303h4v3h-4zM1242 326h4v4h-4zM1249 338h2v5h-2zM1236 375h4v2h-4zM1301 360h6v2h-6zM1246 314h4v3h-4zM1273 328h3v3h-3zM1238 358h3v4h-3zM1244 345h4v4h-4zM1263 306h2v6h-2zM1242 339h6v3h-6zM1242 302h3v3h-3zM1170 624h5v3h-5zM1249 611h4v4h-4zM1211 631h4v5h-4zM1185 645h4v4h-4zM1208 630h2v4h-2zM1164 620h3v6h-3zM1238 620h3v3h-3zM1138 634h3v4h-3zM1140 629h3v3h-3zM1181 624h3v4h-3zM1254 628h5v2h-5zM1227 627h4v3h-4zM1229 626h3v3h-3zM1236 644h3v6h-3zM1138 613h3v3h-3zM1139 601h5v4h-5zM944 695h4v4h-4zM906 669h3v4h-3zM894 668h4v2h-4zM945 677h5v2h-5zM932 646h3v4h-3z"/><path fill="#7c7a72" d="M682 522h4v4h-4zM685 517h3v5h-3zM727 496h3v3h-3zM667 536h4v4h-4zM718 530h2v4h-2zM735 534h4v3h-4zM733 528h3v6h-3zM667 500h2v3h-2zM698 493h5v2h-5zM700 519h3v4h-3zM699 503h3v3h-3zM697 505h5v4h-5zM711 529h3v3h-3zM694 535h3v3h-3zM731 499h3v4h-3zM692 510h5v3h-5zM714 501h2v5h-2zM695 511h2v4h-2zM729 504h2v3h-2zM682 503h3v4h-3zM689 540h4v2h-4zM682 513h6v2h-6zM659 524h4v4h-4zM693 501h4v4h-4zM693 505h5v3h-5zM723 538h2v4h-2zM681 495h4v3h-4zM717 517h3v3h-3zM722 502h2v4h-2zM709 525h6v4h-6zM749 476h2v4h-2zM757 530h4v3h-4zM746 505h3v3h-3zM753 519h2v5h-2zM776 495h2v6h-2zM752 511h2v3h-2zM756 498h6v2h-6zM742 510h3v3h-3zM749 474h3v6h-3zM761 505h2v6h-2zM753 491h6v2h-6zM773 496h6v3h-6zM742 532h4v4h-4zM775 514h2v6h-2zM775 480h3v4h-3zM769 525h5v2h-5zM755 493h4v4h-4zM752 532h4v4h-4zM773 515h4v4h-4zM746 520h3v2h-3zM669 606h3v3h-3zM663 611h4v2h-4zM702 599h6v3h-6zM673 605h3v2h-3zM714 627h3v3h-3zM718 627h2v3h-2zM675 609h2v6h-2zM661 624h2v4h-2zM728 596h2v3h-2zM687 620h3v2h-3zM686 623h4v2h-4zM709 605h3v3h-3zM668 607h6v4h-6zM693 618h5v3h-5zM685 603h4v4h-4zM713 610h5v3h-5zM727 597h2v4h-2zM727 573h6v3h-6zM720 576h2v4h-2zM693 555h3v3h-3zM696 579h3v3h-3zM733 584h4v3h-4zM701 565h4v3h-4zM733 567h2v4h-2zM734 582h4v3h-4zM700 594h2v4h-2zM805 590h3v3h-3zM867 579h3v3h-3zM816 474h4v6h-4zM865 499h3v2h-3zM798 552h6v3h-6zM809 514h3v3h-3zM812 598h3v2h-3zM809 544h2v3h-2zM821 522h4v2h-4zM811 560h3v2h-3zM837 526h3v3h-3zM873 528h3v4h-3zM834 516h3v4h-3zM814 496h5v3h-5zM829 576h4v3h-4zM863 551h4v3h-4zM860 510h3v3h-3zM853 490h2v3h-2zM864 596h5v3h-5zM855 501h3v5h-3zM866 519h3v6h-3zM841 481h4v3h-4zM842 480h2v3h-2zM821 534h2v4h-2zM803 533h3v3h-3zM832 476h3v3h-3zM869 569h4v4h-4zM863 560h6v2h-6zM863 480h5v3h-5zM861 502h3v4h-3zM854 515h6v3h-6zM869 524h2v5h-2zM840 516h2v5h-2zM873 534h3v4h-3zM796 478h2v4h-2zM943 532h3v3h-3zM1020 506h3v2h-3zM925 456h3v3h-3zM1080 542h2v4h-2zM903 447h2v4h-2zM986 477h2v5h-2zM978 496h3v3h-3zM896 486h3v4h-3zM955 482h3v4h-3zM923 536h3v3h-3zM1029 471h2v4h-2zM1042 477h2v4h-2zM1045 533h3v3h-3zM998 540h4v4h-4zM1052 448h3v5h-3zM1097 566h2v4h-2zM1105 469h3v5h-3zM1067 488h3v3h-3zM1090 514h2v4h-2zM1034 517h4v5h-4zM917 464h3v3h-3zM1041 468h2v4h-2zM953 479h3v4h-3zM913 406h6v4h-6zM1038 483h2v4h-2zM932 519h3v3h-3zM965 404h2v4h-2zM1074 479h2v3h-2zM1114 402h2v3h-2zM909 485h6v2h-6zM1006 438h4v2h-4zM1010 553h5v3h-5zM1006 505h4v3h-4zM909 550h3v3h-3zM1024 510h3v3h-3zM1001 561h3v2h-3zM981 495h4v4h-4zM960 538h3v2h-3zM983 479h4v2h-4zM1037 431h4v4h-4zM948 552h4v3h-4zM1004 561h4v4h-4zM912 440h6v3h-6zM1053 406h2v6h-2zM1034 486h3v3h-3zM972 428h3v2h-3zM1111 517h4v5h-4zM993 492h4v2h-4zM1111 451h4v2h-4zM920 562h4v3h-4zM1015 513h3v4h-3zM1000 510h6v3h-6zM1098 520h2v4h-2zM1108 560h3v2h-3zM1007 498h4v3h-4zM975 428h2v3h-2zM1103 446h2v6h-2zM966 527h3v2h-3zM1024 431h6v4h-6zM972 545h5v2h-5zM1019 516h4v4h-4zM921 402h5v2h-5zM1021 462h3v5h-3zM1093 528h3v5h-3zM1044 551h3v3h-3zM941 520h3v3h-3zM944 464h3v2h-3zM941 460h5v2h-5zM1027 544h3v4h-3zM929 458h2v4h-2zM907 402h3v6h-3zM945 468h3v3h-3zM918 404h4v3h-4zM1049 407h4v3h-4zM920 492h3v2h-3zM940 409h4v3h-4zM1082 520h2v3h-2zM881 553h4v2h-4zM956 490h4v3h-4zM992 482h4v4h-4zM960 503h3v6h-3zM993 460h4v5h-4zM916 432h4v2h-4zM1105 553h4v6h-4zM987 547h2v4h-2zM971 421h4v2h-4zM1060 493h3v3h-3zM1026 461h4v2h-4zM1095 324h2v6h-2zM968 315h4v5h-4zM1026 309h4v4h-4zM1041 319h3v3h-3zM1108 340h4v3h-4zM1083 313h4v3h-4zM1028 309h6v3h-6zM1045 309h4v2h-4zM962 344h2v4h-2zM1013 345h4v2h-4zM1094 307h2v3h-2zM1110 306h3v4h-3zM1003 304h2v3h-2zM974 328h3v2h-3zM1093 312h3v3h-3zM993 389h3v3h-3zM999 403h3v6h-3zM995 433h3v3h-3zM981 430h4v2h-4zM990 418h4v6h-4zM1014 392h4v3h-4zM1018 404h5v4h-5zM1026 435h4v2h-4zM1026 387h2v6h-2zM983 385h4v2h-4zM1018 400h3v4h-3zM1020 374h4v5h-4zM999 427h5v2h-5zM1015 378h2v5h-2zM1017 399h4v4h-4zM994 383h4v3h-4zM1156 593h4v2h-4zM1193 595h5v4h-5zM1183 517h5v3h-5zM1251 575h3v6h-3zM1282 554h2v4h-2zM1273 523h4v4h-4zM1275 549h3v3h-3zM1144 497h4v2h-4zM1193 548h3v6h-3zM1176 504h2v4h-2zM1186 585h2v3h-2zM1225 523h2v4h-2zM1200 591h3v3h-3zM1142 589h3v3h-3zM1294 533h3v4h-3zM1198 499h3v2h-3zM1143 518h2v4h-2zM1289 501h3v3h-3zM1183 512h3v3h-3zM1168 488h2v6h-2zM1149 583h2v4h-2zM1182 550h3v4h-3zM1295 509h3v3h-3zM1262 576h3v3h-3zM1156 572h2v4h-2zM1247 585h6v2h-6zM1212 495h4v4h-4zM1182 492h3v3h-3zM1278 595h4v4h-4zM1183 524h2v3h-2zM1147 498h3v4h-3zM1242 594h5v3h-5zM1218 580h4v2h-4zM1231 578h3v3h-3zM1185 521h4v3h-4zM1175 510h4v3h-4zM1164 540h3v3h-3zM1187 592h2v3h-2zM1181 495h4v3h-4zM1186 560h2v4h-2zM1282 522h3v3h-3zM1157 564h2v4h-2zM1289 591h4v2h-4zM1255 577h6v2h-6zM1149 485h3v4h-3zM1175 423h5v2h-5zM1149 447h4v2h-4zM1208 431h5v2h-5zM1214 404h4v3h-4zM1245 409h3v4h-3zM1210 432h3v2h-3zM1190 420h3v4h-3zM1230 435h5v3h-5zM1169 412h2v4h-2zM1185 404h5v2h-5zM1227 428h4v3h-4zM1144 435h3v6h-3zM1018 593h2v6h-2zM1051 583h4v3h-4zM1063 610h3v6h-3zM879 607h3v3h-3zM1092 586h4v2h-4zM952 601h3v2h-3zM1032 599h4v2h-4zM862 596h6v4h-6zM1041 589h2v4h-2zM1070 610h6v3h-6zM1089 594h3v5h-3zM879 588h3v4h-3zM1011 590h3v4h-3zM921 572h2v4h-2zM889 577h2v4h-2zM938 576h6v3h-6zM864 622h4v6h-4zM1077 615h4v6h-4zM869 634h5v2h-5zM1022 633h3v3h-3zM1029 608h4v3h-4zM1083 602h3v6h-3zM869 631h6v3h-6zM1014 588h3v5h-3zM1057 577h4v3h-4zM915 607h4v3h-4zM953 597h3v6h-3zM916 626h4v2h-4zM1070 633h5v4h-5zM905 603h6v3h-6zM1090 626h3v4h-3zM996 630h3v3h-3zM895 639h5v4h-5zM1059 580h5v3h-5zM992 575h3v3h-3zM975 610h3v3h-3zM1023 624h4v5h-4zM1071 584h6v2h-6zM1057 623h4v2h-4zM913 586h3v4h-3zM1072 580h3v4h-3zM951 634h5v2h-5zM1001 585h4v3h-4zM873 605h3v2h-3zM967 601h6v3h-6zM966 578h3v4h-3zM859 613h3v3h-3zM861 611h4v4h-4zM815 604h6v4h-6zM761 606h3v2h-3zM870 636h3v2h-3zM813 609h3v5h-3zM851 614h4v5h-4zM840 611h4v3h-4zM781 620h4v2h-4zM812 603h3v2h-3zM874 630h5v2h-5zM793 617h2v3h-2zM864 602h4v4h-4zM872 610h4v4h-4zM769 600h3v3h-3zM791 613h2v6h-2zM862 634h3v4h-3zM771 635h4v2h-4zM1277 357h2v4h-2zM1317 317h2v6h-2zM1312 320h3v3h-3zM1272 374h4v2h-4zM1258 367h3v4h-3zM1297 329h3v2h-3zM1290 351h2v3h-2zM1264 339h2v5h-2zM1293 359h5v4h-5zM1289 321h3v3h-3zM1211 641h5v2h-5zM1296 631h2v4h-2zM1162 601h4v2h-4zM1165 637h4v4h-4zM1240 615h5v2h-5zM1273 638h3v3h-3zM1261 626h5v4h-5zM1295 625h3v5h-3zM1196 625h3v4h-3zM1142 618h2v3h-2zM1233 606h4v2h-4zM1269 623h4v2h-4zM1254 606h2v6h-2zM1156 637h4v4h-4zM1199 642h4v2h-4zM1291 632h6v4h-6zM906 675h3v4h-3zM884 674h3v6h-3zM922 690h3v2h-3zM919 686h4v2h-4zM904 654h3v4h-3zM888 649h2v3h-2z"/><path fill="#55524a" d="M677 523h3v2h-3zM732 528h4v4h-4zM728 540h2v6h-2zM710 535h3v3h-3zM695 532h4v4h-4zM695 541h4v4h-4zM699 539h6v3h-6zM717 519h3v3h-3zM694 498h3v5h-3zM667 535h5v3h-5zM707 541h4v2h-4zM696 496h4v3h-4zM721 530h3v4h-3zM662 494h2v4h-2zM689 521h3v3h-3zM722 502h3v2h-3zM687 535h2v3h-2zM664 532h3v2h-3zM685 539h5v2h-5zM729 494h3v5h-3zM731 498h2v3h-2zM705 510h2v6h-2zM686 509h4v2h-4zM719 494h4v4h-4zM682 513h2v6h-2zM748 499h4v3h-4zM743 534h6v4h-6zM742 506h4v4h-4zM775 527h2v3h-2zM779 527h4v3h-4zM777 534h3v3h-3zM748 475h5v2h-5zM756 501h3v2h-3zM773 474h5v3h-5zM767 489h4v6h-4zM767 479h2v4h-2zM778 502h3v3h-3zM751 523h4v3h-4zM749 497h4v4h-4zM744 498h2v6h-2zM741 483h4v3h-4zM744 482h4v5h-4zM761 499h4v4h-4zM749 506h6v2h-6zM689 596h2v4h-2zM695 613h6v3h-6zM671 615h3v3h-3zM677 611h6v3h-6zM722 601h3v3h-3zM670 618h5v4h-5zM676 615h2v3h-2zM660 603h4v2h-4zM726 612h3v3h-3zM697 621h2v4h-2zM663 616h2v6h-2zM726 622h4v3h-4zM709 603h3v3h-3zM676 618h4v2h-4zM725 622h2v4h-2zM685 603h4v4h-4zM729 557h3v4h-3zM722 596h6v3h-6zM725 582h3v4h-3zM736 579h3v4h-3zM706 557h6v2h-6zM701 590h3v4h-3zM724 583h2v6h-2zM704 553h6v3h-6zM695 571h3v3h-3zM702 558h5v4h-5zM697 583h2v4h-2zM694 592h2v3h-2zM731 558h2v3h-2zM692 590h5v3h-5zM721 586h3v4h-3zM713 581h3v4h-3zM699 575h5v2h-5zM841 561h3v3h-3zM833 589h3v3h-3zM837 548h3v4h-3zM826 501h4v4h-4zM831 532h4v4h-4zM866 509h3v6h-3zM871 485h3v3h-3zM850 509h6v2h-6zM835 581h3v2h-3zM806 589h3v3h-3zM824 586h4v3h-4zM810 506h3v3h-3zM874 531h4v3h-4zM809 569h3v3h-3zM817 575h6v4h-6zM866 584h3v3h-3zM833 534h4v3h-4zM819 546h3v2h-3zM826 500h3v3h-3zM857 549h5v3h-5zM874 518h3v3h-3zM805 544h2v3h-2zM876 474h3v2h-3zM822 585h2v3h-2zM875 547h4v4h-4zM836 500h6v3h-6zM807 569h3v3h-3zM875 490h4v3h-4zM845 490h4v4h-4zM814 480h3v2h-3zM803 521h3v4h-3zM844 493h2v5h-2zM857 521h3v3h-3zM853 517h3v3h-3zM924 559h5v3h-5zM1089 431h5v3h-5zM891 483h4v4h-4zM1026 479h5v4h-5zM948 462h3v4h-3zM923 474h4v2h-4zM1047 506h2v4h-2zM1029 440h4v3h-4zM1066 474h2v3h-2zM1034 466h4v2h-4zM1090 434h4v2h-4zM1088 485h6v3h-6zM1058 455h2v4h-2zM953 502h2v5h-2zM1033 562h2v5h-2zM944 504h3v3h-3zM910 464h3v3h-3zM954 409h4v4h-4zM1007 469h5v3h-5zM985 490h4v3h-4zM980 553h2v4h-2zM1109 555h4v3h-4zM881 415h3v5h-3zM908 453h5v3h-5zM1043 427h5v4h-5zM911 494h3v3h-3zM922 524h2v3h-2zM882 435h3v5h-3zM898 465h3v3h-3zM1048 403h4v4h-4zM1060 413h6v2h-6zM956 551h4v3h-4zM949 419h4v2h-4zM1056 445h3v2h-3zM1004 545h4v3h-4zM1010 538h3v3h-3zM1009 544h6v2h-6zM981 424h3v5h-3zM893 511h3v3h-3zM949 472h5v3h-5zM937 502h3v2h-3zM1090 430h4v3h-4zM930 453h4v2h-4zM1015 409h6v3h-6zM1116 519h2v6h-2zM974 476h4v4h-4zM966 551h2v3h-2zM1021 522h4v5h-4zM930 401h4v2h-4zM1109 509h3v3h-3zM937 407h2v3h-2zM1095 506h3v4h-3zM915 414h6v3h-6zM960 470h3v3h-3zM1099 555h3v4h-3zM904 526h3v4h-3zM1090 412h3v3h-3zM1014 514h2v4h-2zM979 517h4v4h-4zM985 447h3v3h-3zM1060 480h3v2h-3zM1016 432h6v3h-6zM966 413h2v6h-2zM939 485h6v2h-6zM1110 500h6v3h-6zM1097 552h3v6h-3zM956 486h2v4h-2zM1115 468h4v3h-4zM947 459h4v4h-4zM936 535h2v3h-2zM976 452h2v3h-2zM1006 457h3v6h-3zM894 464h4v4h-4zM1060 524h2v5h-2zM955 431h4v3h-4zM942 426h6v2h-6zM965 456h3v3h-3zM1055 485h6v4h-6zM1103 563h2v5h-2zM953 491h4v5h-4zM1111 490h2v6h-2zM1026 464h3v2h-3zM911 509h2v3h-2zM999 486h3v3h-3zM1100 469h3v5h-3zM1063 483h3v3h-3zM896 405h2v6h-2zM1073 499h3v2h-3zM1016 555h2v4h-2zM964 557h2v5h-2zM1000 467h4v4h-4zM1106 514h6v4h-6zM1097 461h3v4h-3zM911 521h3v5h-3zM1035 447h4v4h-4zM1090 564h3v3h-3zM955 526h6v2h-6zM1039 557h2v6h-2zM880 488h6v3h-6zM1015 333h2v3h-2zM1114 326h3v3h-3zM1091 329h4v4h-4zM1083 321h6v3h-6zM1056 308h3v2h-3zM1073 330h4v3h-4zM998 347h6v3h-6zM968 301h3v4h-3zM1088 318h3v4h-3zM1107 302h3v3h-3zM1032 319h6v3h-6zM986 316h3v3h-3zM986 309h3v3h-3zM1109 323h3v2h-3zM1028 423h6v2h-6zM1028 418h3v4h-3zM977 377h5v4h-5zM975 434h4v3h-4zM1001 394h2v5h-2zM1019 406h2v5h-2zM1011 409h2v4h-2zM1033 430h3v3h-3zM997 395h2v3h-2zM1019 386h3v3h-3zM1013 376h4v2h-4zM976 425h4v5h-4zM1010 393h3v3h-3zM1005 394h2v4h-2zM978 417h4v6h-4zM1002 405h4v3h-4zM1030 407h2v3h-2zM1001 414h4v3h-4zM977 420h3v5h-3zM985 385h4v3h-4zM1142 566h5v2h-5zM1170 587h4v2h-4zM1266 516h2v3h-2zM1186 527h6v3h-6zM1149 499h5v4h-5zM1155 580h3v3h-3zM1213 521h3v4h-3zM1154 498h2v3h-2zM1203 497h2v3h-2zM1254 536h2v4h-2zM1234 559h3v2h-3zM1140 494h2v4h-2zM1288 546h5v3h-5zM1292 550h3v3h-3zM1144 538h3v3h-3zM1253 559h4v3h-4zM1249 503h3v4h-3zM1190 549h3v4h-3zM1260 578h2v6h-2zM1206 514h5v4h-5zM1261 532h3v3h-3zM1266 502h4v3h-4zM1188 523h3v3h-3zM1257 509h4v4h-4zM1144 549h2v4h-2zM1289 542h6v2h-6zM1224 535h3v4h-3zM1270 592h4v3h-4zM1270 597h4v3h-4zM1269 569h3v4h-3zM1246 539h5v2h-5zM1206 592h3v2h-3zM1199 531h6v2h-6zM1227 489h3v4h-3zM1229 529h3v3h-3zM1166 553h3v4h-3zM1228 507h3v6h-3zM1217 489h4v2h-4zM1146 597h4v2h-4zM1152 410h3v3h-3zM1197 434h5v4h-5zM1198 425h2v3h-2zM1171 452h4v2h-4zM1223 430h3v2h-3zM1150 440h2v6h-2zM1165 449h3v3h-3zM1223 432h3v4h-3zM1148 411h4v3h-4zM1090 590h3v4h-3zM955 600h3v5h-3zM903 606h2v3h-2zM1023 590h4v5h-4zM1094 635h3v2h-3zM973 619h4v2h-4zM1067 593h2v5h-2zM865 599h2v4h-2zM1048 596h4v3h-4zM1082 622h5v4h-5zM900 629h3v2h-3zM884 597h3v4h-3zM980 627h2v3h-2zM1058 587h4v3h-4zM988 596h3v4h-3zM925 629h4v6h-4zM904 575h3v3h-3zM929 627h4v3h-4zM942 583h2v4h-2zM873 621h5v2h-5zM941 629h3v2h-3zM977 634h3v2h-3zM987 586h3v3h-3zM947 586h3v2h-3zM968 604h2v3h-2zM936 607h3v3h-3zM937 582h4v2h-4zM916 570h6v3h-6zM1022 607h4v2h-4zM1053 617h2v3h-2zM941 570h5v2h-5zM921 631h4v2h-4zM915 590h2v5h-2zM1070 604h6v2h-6zM966 582h6v3h-6zM972 614h3v3h-3zM1087 596h2v3h-2zM951 625h3v3h-3zM1083 594h3v6h-3zM939 615h5v4h-5zM883 628h4v3h-4zM869 615h3v5h-3zM875 640h3v3h-3zM876 577h3v6h-3zM887 625h4v2h-4zM1094 620h2v4h-2zM966 618h6v2h-6zM1037 575h3v3h-3zM953 627h6v2h-6zM1009 641h3v4h-3zM1095 588h2v5h-2zM986 612h4v3h-4zM1088 627h3v3h-3zM972 624h3v5h-3zM1089 577h3v3h-3zM755 612h3v5h-3zM781 604h3v2h-3zM802 616h5v3h-5zM869 625h3v2h-3zM756 626h2v4h-2zM759 617h4v3h-4zM790 632h2v5h-2zM766 625h5v3h-5zM838 628h2v4h-2zM811 628h6v3h-6zM843 634h3v4h-3zM807 605h2v3h-2zM868 633h4v4h-4zM871 617h3v3h-3zM823 626h2v5h-2zM752 625h6v3h-6zM818 619h5v2h-5zM830 630h3v4h-3zM750 611h4v2h-4zM808 604h2v4h-2zM777 625h3v3h-3zM769 609h2v5h-2zM1233 375h5v4h-5zM1234 368h4v3h-4zM1250 377h4v2h-4zM1235 327h4v4h-4zM1249 303h2v3h-2zM1298 357h3v2h-3zM1297 365h6v4h-6zM1295 324h6v2h-6zM1238 342h3v5h-3zM1309 352h4v4h-4zM1244 324h4v3h-4zM1233 363h3v3h-3zM1298 362h4v3h-4zM1264 324h3v3h-3zM1239 325h3v4h-3zM1230 342h3v2h-3zM1229 600h4v4h-4zM1237 638h6v4h-6zM1156 625h2v6h-2zM1229 644h4v3h-4zM1161 635h3v4h-3zM1256 629h4v4h-4zM1177 600h3v3h-3zM1200 604h3v5h-3zM1230 607h3v3h-3zM1248 601h6v2h-6zM1231 617h3v3h-3zM1229 643h3v6h-3zM1204 607h2v4h-2zM1148 642h4v4h-4zM1150 627h3v2h-3zM1191 625h6v3h-6zM1138 638h3v6h-3zM1230 610h2v3h-2zM1221 624h5v3h-5zM1204 631h3v2h-3zM1204 603h3v3h-3zM1174 609h2v5h-2zM1177 641h3v3h-3zM1198 623h4v4h-4zM1163 623h3v3h-3zM1245 600h6v3h-6zM1229 630h4v3h-4zM891 692h3v4h-3zM917 683h3v3h-3zM898 662h2v3h-2zM882 661h4v3h-4zM892 677h2v4h-2zM941 680h2v6h-2zM942 660h5v2h-5zM929 676h2v4h-2zM890 673h3v5h-3z"/><path fill="#2e3032" d="M735 498h3v4h-3zM725 507h4v2h-4zM703 505h4v4h-4zM673 515h4v4h-4zM725 537h2v5h-2zM735 519h3v2h-3zM715 514h3v4h-3zM716 526h3v4h-3zM659 537h4v4h-4zM707 520h3v3h-3zM699 523h2v3h-2zM701 494h3v3h-3zM697 527h2v4h-2zM663 496h2v4h-2zM690 534h3v4h-3zM734 543h2v3h-2zM690 541h2v4h-2zM669 535h2v3h-2zM689 519h4v3h-4zM681 505h6v3h-6zM681 523h2v6h-2zM699 526h2v3h-2zM668 522h3v6h-3zM698 504h6v3h-6zM746 519h5v2h-5zM744 541h3v4h-3zM770 501h5v2h-5zM763 493h6v2h-6zM762 505h4v3h-4zM777 519h5v2h-5zM750 494h3v3h-3zM772 502h4v2h-4zM757 529h4v4h-4zM774 541h3v3h-3zM748 534h5v3h-5zM774 523h4v3h-4zM774 520h2v3h-2zM744 520h3v3h-3zM744 536h2v5h-2zM663 614h3v4h-3zM724 618h2v3h-2zM661 623h3v2h-3zM689 625h2v4h-2zM720 609h3v6h-3zM668 601h3v4h-3zM699 602h2v6h-2zM734 608h4v4h-4zM699 629h2v3h-2zM694 598h6v4h-6zM692 614h3v4h-3zM683 603h5v3h-5zM674 606h3v3h-3zM722 588h2v5h-2zM724 586h2v4h-2zM693 576h3v3h-3zM704 567h5v3h-5zM708 553h3v4h-3zM708 558h4v6h-4zM738 571h3v3h-3zM697 573h4v3h-4zM803 507h3v4h-3zM813 546h2v5h-2zM822 592h2v4h-2zM806 520h2v4h-2zM801 552h4v4h-4zM805 501h3v3h-3zM841 528h4v2h-4zM847 478h3v6h-3zM798 532h3v3h-3zM871 598h4v2h-4zM852 476h3v6h-3zM863 545h4v2h-4zM849 481h4v2h-4zM806 511h3v4h-3zM810 469h3v2h-3zM839 496h3v3h-3zM869 509h2v3h-2zM842 496h3v4h-3zM803 593h3v3h-3zM833 491h5v4h-5zM807 534h4v4h-4zM803 589h3v4h-3zM843 499h5v3h-5zM890 432h6v4h-6zM929 553h3v4h-3zM886 417h3v3h-3zM1035 456h6v4h-6zM960 505h4v3h-4zM889 529h4v6h-4zM1017 402h4v2h-4zM919 541h4v2h-4zM949 420h3v3h-3zM1031 481h4v2h-4zM914 454h3v5h-3zM955 402h4v2h-4zM992 459h6v3h-6zM887 491h3v4h-3zM1094 564h4v4h-4zM890 557h4v2h-4zM921 530h3v3h-3zM1015 421h4v4h-4zM1085 413h3v2h-3zM1112 407h4v4h-4zM1083 528h3v2h-3zM994 537h2v5h-2zM909 413h3v3h-3zM962 421h3v3h-3zM897 492h4v4h-4zM897 406h3v6h-3zM960 558h5v3h-5zM1058 436h6v2h-6zM943 401h2v5h-2zM1112 412h4v2h-4zM954 454h3v3h-3zM958 414h3v4h-3zM893 557h3v4h-3zM988 491h3v6h-3zM907 479h4v3h-4zM933 423h3v2h-3zM1053 418h4v3h-4zM952 542h2v6h-2zM1072 411h3v2h-3zM1009 432h2v4h-2zM950 481h4v2h-4zM1001 531h5v3h-5zM966 526h3v5h-3zM1011 405h3v2h-3zM1000 526h2v3h-2zM895 430h4v3h-4zM1069 418h4v2h-4zM1031 500h3v3h-3zM911 560h2v6h-2zM1031 558h5v2h-5zM978 565h3v3h-3zM1063 523h3v6h-3zM1019 426h4v3h-4zM1108 563h4v3h-4zM1103 489h6v2h-6zM1066 534h4v4h-4zM933 528h4v3h-4zM1103 441h3v4h-3zM950 527h5v4h-5zM963 439h4v4h-4zM1028 482h4v2h-4zM890 437h6v4h-6zM974 564h3v4h-3zM1051 519h3v3h-3zM1107 549h2v6h-2zM1045 517h4v3h-4zM996 481h4v4h-4zM1092 435h3v4h-3zM1040 443h5v4h-5zM1074 491h5v4h-5zM1014 503h4v3h-4zM1063 437h3v3h-3zM1067 457h3v3h-3zM1039 464h4v3h-4zM1010 444h4v4h-4zM1092 498h2v3h-2zM979 471h3v4h-3zM1005 515h3v4h-3zM961 414h5v2h-5zM1061 470h3v3h-3zM974 500h3v4h-3zM1105 477h5v3h-5zM997 511h6v4h-6zM1015 516h2v3h-2zM1114 473h4v3h-4zM895 461h4v6h-4zM1072 500h2v6h-2zM978 440h3v2h-3zM1099 451h2v4h-2zM886 518h2v6h-2zM995 331h4v3h-4zM1048 348h5v2h-5zM1022 330h3v3h-3zM1029 338h3v2h-3zM999 312h2v4h-2zM1044 345h5v3h-5zM1029 324h4v3h-4zM1068 318h4v4h-4zM1053 328h2v4h-2zM1090 347h6v3h-6zM1026 328h6v2h-6zM1047 342h4v2h-4zM1103 302h3v3h-3zM984 435h3v4h-3zM983 404h3v4h-3zM1002 410h4v3h-4zM1006 371h4v4h-4zM992 426h3v3h-3zM996 408h4v2h-4zM985 419h3v4h-3zM1004 378h4v3h-4zM995 391h3v2h-3zM1005 433h4v2h-4zM1011 433h6v3h-6zM1021 386h5v3h-5zM1000 377h3v2h-3zM1029 372h4v4h-4zM982 431h2v4h-2zM1005 432h6v2h-6zM1010 378h5v3h-5zM986 430h3v3h-3zM1000 392h3v3h-3zM979 405h2v3h-2zM1230 507h3v2h-3zM1148 515h2v3h-2zM1149 507h4v4h-4zM1188 514h2v6h-2zM1267 566h3v3h-3zM1249 555h5v3h-5zM1221 520h3v4h-3zM1272 572h4v4h-4zM1200 565h5v3h-5zM1246 530h4v4h-4zM1207 488h6v2h-6zM1210 572h4v2h-4zM1201 584h3v3h-3zM1186 573h4v2h-4zM1162 589h3v3h-3zM1254 512h3v3h-3zM1280 487h3v2h-3zM1210 481h4v3h-4zM1167 491h4v4h-4zM1212 595h3v4h-3zM1265 565h6v3h-6zM1203 596h5v3h-5zM1179 509h2v6h-2zM1243 507h2v5h-2zM1293 491h4v4h-4zM1179 585h3v4h-3zM1246 575h2v3h-2zM1182 490h2v4h-2zM1268 555h3v6h-3zM1280 519h2v3h-2zM1220 557h3v5h-3zM1196 555h3v4h-3zM1200 532h3v4h-3zM1169 490h3v3h-3zM1195 507h6v2h-6zM1227 546h3v3h-3zM1235 500h4v6h-4zM1275 572h3v4h-3zM1210 490h3v4h-3zM1154 557h3v5h-3zM1184 517h4v3h-4zM1205 571h3v3h-3zM1253 567h3v3h-3zM1289 519h3v4h-3zM1195 579h4v3h-4zM1263 575h5v3h-5zM1288 481h3v2h-3zM1272 509h4v2h-4zM1219 546h2v6h-2zM1168 510h4v3h-4zM1267 549h2v3h-2zM1200 571h3v3h-3zM1228 429h2v6h-2zM1201 411h2v4h-2zM1238 443h2v5h-2zM1221 451h4v3h-4zM1194 426h3v4h-3zM1218 443h3v3h-3zM1159 422h4v3h-4zM1171 411h2v3h-2zM1235 436h4v3h-4zM1163 433h4v2h-4zM1206 401h3v3h-3zM1143 442h4v3h-4zM1170 457h6v3h-6zM1174 448h5v2h-5zM1234 448h2v4h-2zM873 607h4v4h-4zM1004 597h4v3h-4zM951 641h6v2h-6zM863 624h3v4h-3zM1032 571h2v4h-2zM986 572h4v4h-4zM1068 603h3v3h-3zM879 591h3v3h-3zM909 605h2v5h-2zM974 593h4v3h-4zM1085 617h3v2h-3zM940 595h2v5h-2zM985 614h4v3h-4zM873 623h3v5h-3zM933 634h2v5h-2zM1083 596h3v4h-3zM966 602h6v3h-6zM1044 583h3v4h-3zM1033 589h3v6h-3zM1078 620h3v4h-3zM932 576h3v5h-3zM994 597h3v2h-3zM1026 614h3v2h-3zM896 624h5v2h-5zM1003 591h3v5h-3zM960 588h2v3h-2zM953 629h6v2h-6zM1000 618h4v3h-4zM1057 577h4v2h-4zM888 596h3v3h-3zM1010 603h2v6h-2zM1042 613h3v3h-3zM1001 596h2v4h-2zM957 600h3v3h-3zM954 574h4v3h-4zM1089 588h4v5h-4zM1025 641h3v2h-3zM875 610h2v4h-2zM876 617h3v2h-3zM852 627h3v6h-3zM838 627h2v5h-2zM824 628h4v3h-4zM763 604h3v6h-3zM755 636h3v2h-3zM779 623h3v5h-3zM849 623h3v3h-3zM871 610h4v3h-4zM807 619h6v2h-6zM795 623h4v3h-4zM776 619h4v4h-4zM857 630h4v3h-4zM869 624h3v4h-3zM809 601h6v2h-6zM826 602h4v3h-4zM760 612h4v4h-4zM1315 313h4v2h-4zM1293 318h3v3h-3zM1238 365h2v3h-2zM1244 333h3v3h-3zM1231 302h3v3h-3zM1265 363h3v3h-3zM1287 339h5v3h-5zM1230 371h4v3h-4zM1141 616h2v4h-2zM1203 639h3v4h-3zM1166 607h4v4h-4zM1285 625h2v6h-2zM1238 615h4v4h-4zM1258 632h4v4h-4zM1271 641h4v3h-4zM1247 628h5v2h-5zM1294 601h5v3h-5zM1242 602h4v3h-4zM1178 634h3v2h-3zM1141 613h2v3h-2zM1178 644h3v3h-3zM1282 613h3v3h-3zM1170 626h3v2h-3zM1222 644h5v3h-5zM1203 621h2v4h-2zM903 642h2v4h-2zM915 656h3v3h-3zM929 661h5v4h-5zM890 660h4v3h-4zM937 641h3v3h-3zM913 646h4v3h-4zM912 644h5v3h-5zM927 669h4v3h-4z"/><path fill="#3c3d3a" d="M672 507h3v3h-3zM706 497h2v4h-2zM726 524h4v4h-4zM732 520h4v3h-4zM717 517h3v3h-3zM724 529h2v3h-2zM664 543h4v3h-4zM683 541h4v6h-4zM712 525h4v3h-4zM716 515h2v6h-2zM688 501h4v3h-4zM719 492h3v6h-3zM731 510h4v2h-4zM734 501h4v3h-4zM670 510h5v3h-5zM737 517h2v6h-2zM685 530h2v6h-2zM682 494h4v4h-4zM666 525h2v3h-2zM722 525h4v3h-4zM710 502h2v6h-2zM676 514h4v2h-4zM707 513h3v4h-3zM781 518h3v4h-3zM781 517h3v3h-3zM766 485h4v4h-4zM771 520h2v3h-2zM756 501h2v4h-2zM751 500h3v3h-3zM761 487h3v2h-3zM770 526h3v2h-3zM744 486h4v3h-4zM756 510h3v3h-3zM742 535h2v5h-2zM754 481h3v3h-3zM741 519h4v6h-4zM753 486h2v4h-2zM775 503h3v4h-3zM761 534h2v6h-2zM774 511h3v2h-3zM723 607h4v6h-4zM731 614h4v4h-4zM736 624h2v6h-2zM733 620h2v5h-2zM698 624h2v4h-2zM672 627h4v2h-4zM696 603h4v3h-4zM687 608h4v4h-4zM675 625h2v6h-2zM701 598h4v3h-4zM682 614h4v3h-4zM726 554h4v6h-4zM697 560h4v3h-4zM725 589h6v3h-6zM707 596h4v4h-4zM737 591h3v4h-3zM728 566h5v3h-5zM723 594h6v3h-6zM703 580h5v3h-5zM714 589h3v3h-3zM697 578h3v3h-3zM849 564h3v3h-3zM856 516h2v3h-2zM871 527h3v3h-3zM834 470h3v4h-3zM841 475h3v4h-3zM849 541h4v3h-4zM851 548h4v2h-4zM834 596h2v3h-2zM877 540h3v4h-3zM848 505h3v4h-3zM849 533h3v4h-3zM834 541h3v6h-3zM801 506h5v3h-5zM861 502h6v2h-6zM827 490h6v2h-6zM871 493h3v6h-3zM810 541h4v4h-4zM807 488h3v4h-3zM805 577h4v3h-4zM849 471h3v3h-3zM821 593h3v4h-3zM833 546h3v2h-3zM811 490h4v4h-4zM816 576h6v4h-6zM848 546h2v3h-2zM873 534h3v3h-3zM870 588h3v3h-3zM806 539h4v3h-4zM844 589h3v3h-3zM862 529h6v3h-6zM820 539h4v2h-4zM806 538h4v4h-4zM989 458h4v2h-4zM1043 549h2v3h-2zM1060 502h6v4h-6zM1091 559h2v3h-2zM1082 476h3v4h-3zM954 515h4v2h-4zM940 490h3v5h-3zM902 466h2v5h-2zM1005 517h4v3h-4zM1055 553h3v4h-3zM1053 496h3v3h-3zM1002 556h3v6h-3zM992 455h5v3h-5zM945 419h3v6h-3zM1080 407h3v2h-3zM1003 486h3v3h-3zM1090 555h4v4h-4zM1092 415h3v4h-3zM1009 449h3v3h-3zM936 530h2v3h-2zM1014 505h6v3h-6zM1072 482h5v2h-5zM1099 472h2v5h-2zM1083 547h4v3h-4zM996 490h6v3h-6zM1062 531h4v6h-4zM1024 435h6v2h-6zM1116 521h2v5h-2zM929 537h3v3h-3zM904 533h3v3h-3zM995 412h3v4h-3zM1005 465h4v3h-4zM919 440h3v3h-3zM1113 507h4v3h-4zM988 538h2v5h-2zM1069 434h4v6h-4zM896 459h5v4h-5zM990 520h2v5h-2zM982 410h5v2h-5zM898 537h3v6h-3zM892 436h3v5h-3zM998 465h6v2h-6zM932 516h3v4h-3zM902 490h3v4h-3zM1100 415h2v3h-2zM1006 511h3v4h-3zM1062 566h5v3h-5zM1022 469h2v3h-2zM1044 457h3v2h-3zM1039 444h2v5h-2zM1029 515h3v3h-3zM1046 554h3v3h-3zM906 542h4v3h-4zM988 542h4v2h-4zM1020 535h5v4h-5zM986 470h2v4h-2zM1084 403h2v6h-2zM1112 482h3v6h-3zM938 456h3v4h-3zM984 481h2v3h-2zM1089 548h3v3h-3zM990 535h6v3h-6zM1006 484h3v3h-3zM1115 532h4v3h-4zM887 423h3v3h-3zM900 462h5v3h-5zM990 550h2v6h-2zM1017 477h3v4h-3zM1022 408h4v6h-4zM1095 422h4v4h-4zM959 451h5v2h-5zM1085 461h4v4h-4zM1062 485h4v3h-4zM976 526h2v6h-2zM915 541h4v4h-4zM1025 470h2v3h-2zM1061 472h3v4h-3zM917 493h3v3h-3zM1094 537h2v6h-2zM1051 432h4v3h-4zM1021 419h3v4h-3zM1021 446h2v4h-2zM958 488h2v4h-2zM961 407h4v3h-4zM951 478h3v3h-3zM1020 545h3v4h-3zM955 517h3v4h-3zM982 462h3v4h-3zM962 414h2v3h-2zM890 542h2v6h-2zM1109 513h3v2h-3zM1086 471h3v5h-3zM999 539h2v5h-2zM925 437h4v2h-4zM1111 421h4v3h-4zM981 327h4v2h-4zM988 301h3v3h-3zM1089 306h4v4h-4zM1113 321h4v4h-4zM1081 304h3v4h-3zM1030 300h4v3h-4zM992 311h3v4h-3zM966 321h3v2h-3zM1041 316h5v3h-5zM1065 341h3v3h-3zM1029 338h4v5h-4zM987 320h3v4h-3zM1105 328h2v4h-2zM1092 310h5v3h-5zM1046 337h2v3h-2zM1093 320h2v4h-2zM1057 312h3v3h-3zM1002 395h2v3h-2zM1031 402h2v4h-2zM1021 399h2v4h-2zM993 373h3v2h-3zM1004 378h3v5h-3zM1032 434h3v2h-3zM1010 411h3v4h-3zM979 381h3v4h-3zM1014 400h2v3h-2zM1031 374h3v6h-3zM1004 427h4v4h-4zM991 434h4v2h-4zM1002 426h3v3h-3zM994 391h4v3h-4zM1011 437h4v3h-4zM1251 563h3v3h-3zM1253 546h3v4h-3zM1216 535h3v4h-3zM1283 533h3v3h-3zM1204 487h4v4h-4zM1291 525h3v4h-3zM1284 522h4v4h-4zM1142 541h3v2h-3zM1243 553h3v4h-3zM1230 576h2v6h-2zM1141 516h2v6h-2zM1202 557h3v3h-3zM1155 588h4v4h-4zM1272 515h5v2h-5zM1183 503h2v3h-2zM1212 581h6v2h-6zM1269 512h3v4h-3zM1220 581h4v3h-4zM1203 564h5v3h-5zM1298 525h2v3h-2zM1261 547h4v2h-4zM1153 582h3v2h-3zM1160 539h3v3h-3zM1259 538h2v4h-2zM1212 505h2v4h-2zM1159 549h4v4h-4zM1238 519h4v5h-4zM1208 497h4v3h-4zM1175 484h4v2h-4zM1184 495h3v3h-3zM1297 495h3v3h-3zM1286 486h3v3h-3zM1286 503h3v3h-3zM1288 589h4v2h-4zM1274 560h4v3h-4zM1191 488h5v4h-5zM1192 554h3v3h-3zM1156 540h3v5h-3zM1198 498h3v2h-3zM1187 494h6v2h-6zM1178 586h2v5h-2zM1188 594h3v2h-3zM1247 495h3v3h-3zM1243 547h2v5h-2zM1166 568h3v2h-3zM1205 492h5v2h-5zM1226 573h2v4h-2zM1165 453h2v4h-2zM1219 452h4v3h-4zM1215 450h6v2h-6zM1227 430h2v6h-2zM1210 410h2v3h-2zM1196 430h4v3h-4zM1196 445h2v5h-2zM1184 402h3v3h-3zM1236 433h4v4h-4zM1241 409h2v4h-2zM1136 425h3v6h-3zM1235 445h3v2h-3zM1170 428h3v5h-3zM1222 447h5v2h-5zM1169 455h3v3h-3zM1171 450h3v4h-3zM1210 447h4v4h-4zM976 596h3v4h-3zM921 622h4v3h-4zM916 598h4v3h-4zM1011 610h3v2h-3zM1074 633h3v5h-3zM988 608h4v4h-4zM962 578h3v4h-3zM1074 591h4v6h-4zM1012 595h3v3h-3zM1065 588h4v4h-4zM1035 627h4v4h-4zM1079 637h4v3h-4zM933 632h3v5h-3zM917 639h4v2h-4zM1078 592h4v2h-4zM1002 593h2v4h-2zM1038 589h5v3h-5zM989 630h3v3h-3zM974 610h3v2h-3zM980 606h4v4h-4zM962 573h4v2h-4zM894 606h4v4h-4zM1022 605h2v5h-2zM895 604h3v2h-3zM1084 629h3v5h-3zM950 579h3v2h-3zM1040 578h2v4h-2zM891 591h6v2h-6zM983 633h3v3h-3zM1025 594h4v2h-4zM1073 603h3v4h-3zM910 599h6v4h-6zM1022 636h3v3h-3zM1096 640h2v3h-2zM1008 605h5v3h-5zM1075 590h5v3h-5zM941 593h5v4h-5zM1069 591h2v5h-2zM973 593h2v3h-2zM886 595h3v3h-3zM1093 639h3v3h-3zM936 594h5v2h-5zM852 633h2v4h-2zM827 630h4v4h-4zM867 619h3v3h-3zM853 620h6v2h-6zM813 607h3v3h-3zM804 618h3v3h-3zM750 620h4v4h-4zM807 618h4v2h-4zM867 609h2v4h-2zM800 606h3v2h-3zM867 611h3v4h-3zM863 607h5v2h-5zM755 618h5v3h-5zM768 612h5v2h-5zM810 609h4v3h-4zM765 612h6v2h-6zM873 604h5v2h-5zM760 605h4v6h-4zM1273 318h3v4h-3zM1237 361h2v6h-2zM1246 335h2v3h-2zM1234 354h2v6h-2zM1263 375h2v4h-2zM1269 348h3v6h-3zM1155 616h3v3h-3zM1218 633h4v3h-4zM1295 609h4v4h-4zM1241 605h2v4h-2zM1199 618h2v6h-2zM1278 621h3v4h-3zM1281 636h3v3h-3zM1231 608h4v3h-4zM1193 635h2v6h-2zM1231 609h2v4h-2zM1241 639h4v4h-4zM1182 634h5v2h-5zM1259 606h3v3h-3zM1240 644h3v6h-3zM1220 613h4v3h-4zM1290 618h4v2h-4zM912 647h4v2h-4zM920 667h4v4h-4zM917 670h5v2h-5zM887 677h2v4h-2zM911 674h2v4h-2zM929 680h4v2h-4zM888 664h5v2h-5zM932 691h3v2h-3zM904 660h3v3h-3z"/><path fill="#4a4c4c" d="M700 533h3v3h-3zM691 541h6v4h-6zM735 526h3v4h-3zM692 493h3v3h-3zM692 509h3v2h-3zM671 520h2v5h-2zM681 515h2v5h-2zM675 494h3v3h-3zM710 511h3v5h-3zM700 535h2v6h-2zM699 508h2v6h-2zM683 540h3v2h-3zM684 505h2v6h-2zM724 526h4v4h-4zM733 503h3v2h-3zM713 519h5v3h-5zM774 474h4v2h-4zM742 521h2v6h-2zM772 494h4v2h-4zM742 538h3v5h-3zM758 476h5v2h-5zM770 477h4v4h-4zM747 504h3v5h-3zM767 488h3v4h-3zM750 530h2v3h-2zM757 514h3v6h-3zM759 502h2v5h-2zM775 530h3v3h-3zM771 534h3v4h-3zM772 516h4v4h-4zM755 504h4v3h-4zM777 475h3v3h-3zM749 474h6v2h-6zM769 480h2v3h-2zM691 599h2v6h-2zM724 606h3v4h-3zM699 610h4v2h-4zM703 609h4v4h-4zM696 626h3v4h-3zM709 617h3v2h-3zM683 622h3v2h-3zM702 627h4v3h-4zM705 605h3v4h-3zM730 624h4v3h-4zM684 609h4v4h-4zM701 624h2v3h-2zM705 614h4v3h-4zM710 621h4v3h-4zM719 603h4v5h-4zM701 602h2v6h-2zM664 619h3v2h-3zM670 602h3v5h-3zM670 627h6v3h-6zM709 599h4v5h-4zM702 593h3v3h-3zM715 574h3v2h-3zM730 585h2v6h-2zM708 560h3v5h-3zM724 567h3v4h-3zM709 595h6v2h-6zM708 557h4v6h-4zM706 573h3v4h-3zM698 586h3v4h-3zM693 575h4v3h-4zM728 561h3v4h-3zM732 564h2v5h-2zM806 592h3v3h-3zM837 533h4v4h-4zM807 493h3v3h-3zM876 486h4v2h-4zM822 537h4v4h-4zM800 527h3v4h-3zM838 507h3v6h-3zM837 535h3v3h-3zM858 561h4v3h-4zM848 577h4v4h-4zM827 571h2v4h-2zM821 582h3v3h-3zM859 501h6v2h-6zM847 597h3v3h-3zM813 581h6v2h-6zM874 520h3v3h-3zM864 561h4v5h-4zM834 532h4v3h-4zM850 594h3v2h-3zM857 501h3v6h-3zM805 505h3v3h-3zM849 489h3v3h-3zM811 501h3v4h-3zM821 502h6v3h-6zM857 478h6v2h-6zM817 490h3v4h-3zM795 474h4v2h-4zM820 494h6v4h-6zM855 483h3v3h-3zM844 542h2v3h-2zM824 595h6v3h-6zM830 589h2v6h-2zM811 537h3v2h-3zM832 576h3v2h-3zM813 590h2v4h-2zM846 566h4v4h-4zM869 502h3v3h-3zM819 569h6v2h-6zM797 527h4v2h-4zM1015 435h2v3h-2zM1011 562h2v5h-2zM948 560h2v5h-2zM1078 561h3v3h-3zM1069 444h3v3h-3zM1006 537h4v6h-4zM1013 507h2v3h-2zM1072 532h2v3h-2zM984 547h5v2h-5zM1111 426h4v3h-4zM1079 502h6v2h-6zM903 557h3v4h-3zM906 401h4v4h-4zM1103 547h4v4h-4zM1099 417h6v3h-6zM1115 454h2v3h-2zM973 437h5v4h-5zM1059 437h2v6h-2zM912 444h4v2h-4zM1062 428h3v5h-3zM915 413h2v3h-2zM1022 413h3v4h-3zM967 425h4v6h-4zM1032 562h2v3h-2zM1069 491h3v3h-3zM951 513h3v4h-3zM885 491h2v4h-2zM923 497h4v3h-4zM903 424h3v6h-3zM1105 509h3v4h-3zM1002 417h3v6h-3zM917 526h5v4h-5zM963 502h2v4h-2zM1011 465h3v3h-3zM1084 431h2v4h-2zM1082 565h2v3h-2zM1005 429h3v2h-3zM886 411h2v6h-2zM1009 520h3v2h-3zM918 477h3v5h-3zM996 427h5v2h-5zM1037 564h4v3h-4zM1117 508h3v5h-3zM916 420h4v4h-4zM1079 549h3v4h-3zM1088 424h2v3h-2zM1005 424h3v5h-3zM996 432h3v6h-3zM922 531h3v4h-3zM901 514h4v2h-4zM997 566h3v4h-3zM943 444h3v2h-3zM987 471h4v6h-4zM1117 519h2v4h-2zM1053 406h2v3h-2zM1042 548h3v6h-3zM975 471h4v2h-4zM1067 401h4v2h-4zM895 412h2v5h-2zM1006 458h4v3h-4zM982 418h6v2h-6zM1010 491h3v3h-3zM1092 466h2v4h-2zM897 469h2v4h-2zM1083 414h4v3h-4zM999 409h4v3h-4zM881 524h2v3h-2zM1112 472h2v3h-2zM1050 425h2v4h-2zM1083 432h6v4h-6zM1100 566h3v3h-3zM1032 498h4v4h-4zM931 545h3v5h-3zM1009 565h3v3h-3zM1109 494h5v3h-5zM1036 509h4v3h-4zM886 497h2v5h-2zM1072 493h2v5h-2zM950 486h3v2h-3zM1001 460h3v6h-3zM969 446h3v3h-3zM1025 474h3v5h-3zM1003 527h3v3h-3zM981 513h4v5h-4zM990 450h4v6h-4zM951 510h4v4h-4zM991 316h3v3h-3zM1075 330h4v3h-4zM1104 346h3v3h-3zM1110 326h2v3h-2zM1018 336h2v5h-2zM1047 344h6v2h-6zM1010 320h3v3h-3zM1051 313h4v3h-4zM995 317h4v3h-4zM974 339h6v3h-6zM978 312h3v2h-3zM1098 342h3v3h-3zM995 332h2v4h-2zM1086 312h3v4h-3zM975 404h4v4h-4zM1008 385h5v3h-5zM983 384h3v3h-3zM1035 389h2v5h-2zM1026 386h5v2h-5zM986 379h2v3h-2zM1035 407h4v4h-4zM995 403h4v3h-4zM995 418h2v3h-2zM1019 392h5v2h-5zM1032 371h4v5h-4zM1271 568h3v3h-3zM1245 589h3v2h-3zM1239 567h3v6h-3zM1162 539h4v3h-4zM1194 576h6v2h-6zM1295 568h4v4h-4zM1222 598h5v2h-5zM1229 592h2v6h-2zM1246 487h3v3h-3zM1252 541h3v4h-3zM1149 598h3v2h-3zM1258 527h5v2h-5zM1278 528h3v3h-3zM1205 534h2v5h-2zM1140 552h4v2h-4zM1214 513h3v2h-3zM1177 571h5v2h-5zM1151 491h2v3h-2zM1235 540h6v4h-6zM1171 549h4v3h-4zM1257 573h5v3h-5zM1255 590h3v3h-3zM1262 538h3v3h-3zM1219 528h3v2h-3zM1257 589h6v3h-6zM1215 537h3v3h-3zM1278 526h3v3h-3zM1151 541h3v4h-3zM1278 549h3v4h-3zM1247 570h3v3h-3zM1200 565h4v2h-4zM1232 582h3v3h-3zM1168 532h3v4h-3zM1281 532h3v2h-3zM1207 586h3v3h-3zM1187 499h5v3h-5zM1286 540h3v3h-3zM1251 507h3v4h-3zM1221 423h5v3h-5zM1197 433h6v3h-6zM1177 425h3v3h-3zM1137 452h2v4h-2zM1182 416h2v6h-2zM1226 456h6v2h-6zM1204 400h5v2h-5zM1168 442h6v4h-6zM1208 445h4v4h-4zM1136 445h3v4h-3zM1246 441h4v3h-4zM1189 405h2v3h-2zM1192 414h4v3h-4zM1234 456h6v3h-6zM1051 571h4v2h-4zM878 596h3v4h-3zM889 616h4v2h-4zM915 574h4v3h-4zM892 582h2v5h-2zM986 593h4v4h-4zM1013 598h3v2h-3zM989 602h3v2h-3zM989 573h2v4h-2zM969 622h3v3h-3zM988 620h2v4h-2zM959 626h4v2h-4zM1035 628h2v4h-2zM1005 620h4v4h-4zM1032 635h4v3h-4zM969 614h3v4h-3zM1084 597h2v6h-2zM1000 630h4v2h-4zM1095 581h4v4h-4zM1020 638h5v2h-5zM1011 603h3v6h-3zM1014 628h5v3h-5zM993 575h3v2h-3zM1007 579h6v2h-6zM1092 594h3v4h-3zM926 630h3v4h-3zM1053 588h4v3h-4zM872 591h3v4h-3zM913 592h6v4h-6zM1090 578h4v4h-4zM970 634h2v4h-2zM878 622h5v2h-5zM863 617h4v2h-4zM1033 576h2v5h-2zM930 639h3v3h-3zM869 612h2v4h-2zM1059 594h3v3h-3zM992 591h6v2h-6zM965 582h3v4h-3zM983 622h2v6h-2zM934 586h2v4h-2zM809 607h3v4h-3zM824 631h3v5h-3zM803 625h4v3h-4zM873 609h5v3h-5zM848 604h2v3h-2zM838 622h2v3h-2zM847 620h2v5h-2zM856 630h2v3h-2zM872 624h3v3h-3zM832 623h3v5h-3zM847 607h3v5h-3zM805 630h3v2h-3zM1249 334h3v4h-3zM1262 302h3v3h-3zM1289 354h5v2h-5zM1264 340h3v4h-3zM1244 305h3v2h-3zM1267 353h2v3h-2zM1258 341h4v3h-4zM1241 376h4v3h-4zM1247 331h4v3h-4zM1271 334h5v4h-5zM1244 329h5v2h-5zM1165 647h3v2h-3zM1277 638h3v3h-3zM1285 635h3v5h-3zM1266 641h3v4h-3zM1283 605h4v2h-4zM1245 629h3v3h-3zM1199 624h4v4h-4zM1137 634h3v2h-3zM1268 618h3v2h-3zM1142 607h5v4h-5zM1184 618h2v4h-2zM1262 634h3v4h-3zM1171 631h4v4h-4zM1240 629h3v4h-3zM1272 630h3v6h-3zM1211 618h3v4h-3zM1155 645h5v3h-5zM1252 635h4v2h-4zM1195 638h2v5h-2zM1285 633h5v3h-5zM1216 622h2v6h-2zM922 695h5v2h-5zM941 665h3v4h-3zM906 668h2v5h-2zM932 662h6v3h-6zM933 690h4v3h-4zM944 688h5v3h-5zM944 675h4v3h-4zM930 696h5v3h-5zM927 695h3v3h-3z"/><path fill="#b8b8b0" d="M661 535h2v1h-2zM661 538h2v1h-2zM664 514h1v3h-1zM667 514h1v3h-1zM661 538h1v2h-1zM664 538h1v2h-1zM682 522h1v4h-1zM685 522h1v4h-1zM735 498h3v1h-3zM735 501h3v1h-3zM685 517h3v1h-3zM685 521h3v1h-3zM696 504h1v2h-1zM699 504h1v2h-1zM727 496h1v3h-1zM729 496h1v3h-1zM672 507h1v3h-1zM674 507h1v3h-1zM728 540h2v1h-2zM728 545h2v1h-2zM721 532h1v2h-1zM725 532h1v2h-1zM735 534h1v3h-1zM738 534h1v3h-1zM717 517h1v3h-1zM719 517h1v3h-1zM733 528h3v1h-3zM733 533h3v1h-3zM735 526h3v1h-3zM735 529h3v1h-3zM673 538h1v3h-1zM675 538h1v3h-1zM710 535h1v3h-1zM712 535h1v3h-1zM695 532h1v4h-1zM698 532h1v4h-1zM673 515h1v4h-1zM676 515h1v4h-1zM670 527h1v3h-1zM672 527h1v3h-1zM712 515h1v3h-1zM714 515h1v3h-1zM664 538h1v2h-1zM666 538h1v2h-1zM732 542h3v1h-3zM732 545h3v1h-3zM658 505h1v3h-1zM660 505h1v3h-1zM697 505h1v4h-1zM701 505h1v4h-1zM699 539h1v3h-1zM704 539h1v3h-1zM724 529h2v1h-2zM724 531h2v1h-2zM658 526h1v2h-1zM661 526h1v2h-1zM672 505h3v1h-3zM672 510h3v1h-3zM660 538h1v4h-1zM663 538h1v4h-1zM695 519h1v3h-1zM697 519h1v3h-1zM664 513h2v1h-2zM664 515h2v1h-2zM683 541h4v1h-4zM683 546h4v1h-4zM660 524h2v1h-2zM660 528h2v1h-2zM717 519h1v3h-1zM719 519h1v3h-1zM694 536h1v2h-1zM698 536h1v2h-1zM735 519h1v2h-1zM737 519h1v2h-1zM712 525h1v3h-1zM715 525h1v3h-1zM711 529h1v3h-1zM713 529h1v3h-1zM694 498h3v1h-3zM694 502h3v1h-3zM731 496h1v2h-1zM734 496h1v2h-1zM667 535h1v3h-1zM671 535h1v3h-1zM729 518h1v3h-1zM731 518h1v3h-1zM715 514h3v1h-3zM715 517h3v1h-3zM662 512h3v1h-3zM662 517h3v1h-3zM731 499h3v1h-3zM731 502h3v1h-3zM688 501h1v3h-1zM691 501h1v3h-1zM692 510h1v3h-1zM696 510h1v3h-1zM671 520h2v1h-2zM671 524h2v1h-2zM659 537h1v4h-1zM662 537h1v4h-1zM699 535h1v2h-1zM702 535h1v2h-1zM693 543h1v3h-1zM695 543h1v3h-1zM719 492h3v1h-3zM719 497h3v1h-3zM699 523h2v1h-2zM699 525h2v1h-2zM697 527h2v1h-2zM697 530h2v1h-2zM721 530h3v1h-3zM721 533h3v1h-3zM723 504h2v1h-2zM723 507h2v1h-2zM668 513h1v2h-1zM673 513h1v2h-1zM695 511h2v1h-2zM695 514h2v1h-2zM690 534h3v1h-3zM690 537h3v1h-3zM680 530h1v3h-1zM685 530h1v3h-1zM736 506h1v3h-1zM738 506h1v3h-1zM734 501h1v3h-1zM737 501h1v3h-1zM678 505h3v1h-3zM678 508h3v1h-3zM669 539h2v1h-2zM669 541h2v1h-2zM692 506h1v4h-1zM695 506h1v4h-1zM660 509h4v1h-4zM660 513h4v1h-4zM689 521h1v3h-1zM691 521h1v3h-1zM690 507h1v3h-1zM692 507h1v3h-1zM669 535h2v1h-2zM669 537h2v1h-2zM718 534h2v1h-2zM718 536h2v1h-2zM689 519h1v3h-1zM692 519h1v3h-1zM693 501h1v4h-1zM696 501h1v4h-1zM664 532h1v2h-1zM666 532h1v2h-1zM685 530h2v1h-2zM685 535h2v1h-2zM693 505h1v3h-1zM697 505h1v3h-1zM682 494h1v4h-1zM685 494h1v4h-1zM726 501h1v3h-1zM731 501h1v3h-1zM700 535h2v1h-2zM700 540h2v1h-2zM683 496h1v4h-1zM686 496h1v4h-1zM707 494h2v1h-2zM707 496h2v1h-2zM669 527h2v1h-2zM669 530h2v1h-2zM729 494h3v1h-3zM729 498h3v1h-3zM717 517h1v3h-1zM719 517h1v3h-1zM711 540h1v4h-1zM714 540h1v4h-1zM723 528h1v4h-1zM726 528h1v4h-1zM666 525h2v1h-2zM666 527h2v1h-2zM706 508h1v2h-1zM711 508h1v2h-1zM684 505h2v1h-2zM684 510h2v1h-2zM699 507h2v1h-2zM699 510h2v1h-2zM689 538h2v1h-2zM689 541h2v1h-2zM667 524h1v2h-1zM670 524h1v2h-1zM724 526h1v4h-1zM727 526h1v4h-1zM684 505h1v3h-1zM689 505h1v3h-1zM673 525h3v1h-3zM673 528h3v1h-3zM668 522h3v1h-3zM668 527h3v1h-3zM709 525h1v4h-1zM714 525h1v4h-1zM676 514h1v2h-1zM679 514h1v2h-1zM697 543h2v1h-2zM697 546h2v1h-2zM733 503h1v2h-1zM735 503h1v2h-1zM677 512h1v3h-1zM681 512h1v3h-1zM710 523h1v3h-1zM713 523h1v3h-1zM771 503h1v4h-1zM774 503h1v4h-1zM767 505h1v3h-1zM770 505h1v3h-1zM766 471h3v1h-3zM766 474h3v1h-3zM744 480h1v3h-1zM746 480h1v3h-1zM748 499h1v3h-1zM751 499h1v3h-1zM746 505h1v3h-1zM748 505h1v3h-1zM756 478h1v4h-1zM759 478h1v4h-1zM767 514h1v2h-1zM771 514h1v2h-1zM747 518h1v3h-1zM752 518h1v3h-1zM770 501h1v2h-1zM774 501h1v2h-1zM768 540h2v1h-2zM768 543h2v1h-2zM741 517h2v1h-2zM741 519h2v1h-2zM774 505h1v4h-1zM777 505h1v4h-1zM747 538h3v1h-3zM747 542h3v1h-3zM751 481h2v1h-2zM751 484h2v1h-2zM762 505h1v3h-1zM765 505h1v3h-1zM777 534h1v3h-1zM779 534h1v3h-1zM749 476h4v1h-4zM749 480h4v1h-4zM755 503h1v3h-1zM758 503h1v3h-1zM762 471h2v1h-2zM762 475h2v1h-2zM748 537h1v3h-1zM752 537h1v3h-1zM779 488h1v4h-1zM782 488h1v4h-1zM778 520h3v1h-3zM778 523h3v1h-3zM777 519h1v2h-1zM781 519h1v2h-1zM776 531h1v2h-1zM779 531h1v2h-1zM770 477h1v4h-1zM773 477h1v4h-1zM748 473h1v3h-1zM750 473h1v3h-1zM751 500h1v3h-1zM753 500h1v3h-1zM757 482h2v1h-2zM757 484h2v1h-2zM761 505h2v1h-2zM761 510h2v1h-2zM758 534h3v1h-3zM758 538h3v1h-3zM761 487h1v2h-1zM763 487h1v2h-1zM770 526h1v2h-1zM772 526h1v2h-1zM748 475h1v2h-1zM752 475h1v2h-1zM753 491h1v2h-1zM758 491h1v2h-1zM767 488h3v1h-3zM767 491h3v1h-3zM742 532h1v4h-1zM745 532h1v4h-1zM746 487h3v1h-3zM746 490h3v1h-3zM751 529h2v1h-2zM751 531h2v1h-2zM776 519h3v1h-3zM776 524h3v1h-3zM770 478h1v3h-1zM773 478h1v3h-1zM756 501h1v2h-1zM758 501h1v2h-1zM773 474h1v3h-1zM777 474h1v3h-1zM757 514h3v1h-3zM757 519h3v1h-3zM748 518h2v1h-2zM748 520h2v1h-2zM772 534h1v3h-1zM775 534h1v3h-1zM778 502h1v3h-1zM780 502h1v3h-1zM751 523h1v3h-1zM754 523h1v3h-1zM759 528h1v4h-1zM762 528h1v4h-1zM754 489h2v1h-2zM754 491h2v1h-2zM744 486h1v3h-1zM747 486h1v3h-1zM769 525h1v2h-1zM773 525h1v2h-1zM759 502h2v1h-2zM759 506h2v1h-2zM755 493h1v4h-1zM758 493h1v4h-1zM775 530h1v3h-1zM777 530h1v3h-1zM757 529h1v4h-1zM760 529h1v4h-1zM748 534h1v3h-1zM752 534h1v3h-1zM769 470h2v1h-2zM769 472h2v1h-2zM745 484h1v4h-1zM750 484h1v4h-1zM772 516h1v4h-1zM775 516h1v4h-1zM741 515h1v3h-1zM743 515h1v3h-1zM742 533h1v4h-1zM745 533h1v4h-1zM742 535h2v1h-2zM742 539h2v1h-2zM750 533h3v1h-3zM750 536h3v1h-3zM752 532h1v4h-1zM755 532h1v4h-1zM755 483h2v1h-2zM755 485h2v1h-2zM755 504h1v3h-1zM758 504h1v3h-1zM754 481h1v3h-1zM756 481h1v3h-1zM745 501h1v4h-1zM748 501h1v4h-1zM755 540h1v2h-1zM758 540h1v2h-1zM761 499h1v4h-1zM764 499h1v4h-1zM774 523h1v3h-1zM777 523h1v3h-1zM774 520h2v1h-2zM774 522h2v1h-2zM775 494h3v1h-3zM775 499h3v1h-3zM770 521h1v3h-1zM772 521h1v3h-1zM749 506h1v2h-1zM754 506h1v2h-1zM744 536h2v1h-2zM744 540h2v1h-2zM749 474h1v2h-1zM754 474h1v2h-1zM759 526h1v2h-1zM761 526h1v2h-1zM676 597h2v1h-2zM676 600h2v1h-2zM663 611h1v2h-1zM666 611h1v2h-1zM708 603h1v4h-1zM713 603h1v4h-1zM691 599h2v1h-2zM691 604h2v1h-2zM724 606h3v1h-3zM724 609h3v1h-3zM716 629h1v3h-1zM718 629h1v3h-1zM689 596h2v1h-2zM689 599h2v1h-2zM699 610h1v2h-1zM702 610h1v2h-1zM703 608h1v3h-1zM706 608h1v3h-1zM677 623h3v1h-3zM677 626h3v1h-3zM667 608h1v3h-1zM670 608h1v3h-1zM714 627h1v3h-1zM716 627h1v3h-1zM718 627h2v1h-2zM718 629h2v1h-2zM702 621h3v1h-3zM702 625h3v1h-3zM675 609h2v1h-2zM675 614h2v1h-2zM727 616h1v3h-1zM729 616h1v3h-1zM670 615h2v1h-2zM670 619h2v1h-2zM696 626h3v1h-3zM696 629h3v1h-3zM681 611h2v1h-2zM681 616h2v1h-2zM661 624h2v1h-2zM661 627h2v1h-2zM731 614h1v4h-1zM734 614h1v4h-1zM702 627h1v3h-1zM705 627h1v3h-1zM734 616h1v2h-1zM736 616h1v2h-1zM728 596h2v1h-2zM728 598h2v1h-2zM690 627h1v3h-1zM693 627h1v3h-1zM684 609h1v4h-1zM687 609h1v4h-1zM705 614h1v3h-1zM708 614h1v3h-1zM687 613h1v3h-1zM691 613h1v3h-1zM710 621h1v3h-1zM713 621h1v3h-1zM736 624h2v1h-2zM736 629h2v1h-2zM686 623h1v2h-1zM689 623h1v2h-1zM662 617h2v1h-2zM662 622h2v1h-2zM709 605h1v3h-1zM711 605h1v3h-1zM698 624h2v1h-2zM698 627h2v1h-2zM668 601h3v1h-3zM668 604h3v1h-3zM734 596h1v3h-1zM737 596h1v3h-1zM730 597h2v1h-2zM730 602h2v1h-2zM660 603h1v2h-1zM663 603h1v2h-1zM712 628h1v3h-1zM716 628h1v3h-1zM708 596h2v1h-2zM708 598h2v1h-2zM721 616h3v1h-3zM721 621h3v1h-3zM696 603h1v3h-1zM699 603h1v3h-1zM733 624h1v3h-1zM735 624h1v3h-1zM672 603h3v1h-3zM672 606h3v1h-3zM694 598h1v4h-1zM699 598h1v4h-1zM697 621h2v1h-2zM697 624h2v1h-2zM685 603h1v4h-1zM688 603h1v4h-1zM711 606h1v3h-1zM714 606h1v3h-1zM692 626h3v1h-3zM692 629h3v1h-3zM713 610h1v3h-1zM717 610h1v3h-1zM663 616h2v1h-2zM663 621h2v1h-2zM677 598h3v1h-3zM677 601h3v1h-3zM670 627h1v3h-1zM675 627h1v3h-1zM714 595h1v4h-1zM719 595h1v4h-1zM731 609h4v1h-4zM731 613h4v1h-4zM727 597h2v1h-2zM727 600h2v1h-2zM664 618h3v1h-3zM664 621h3v1h-3zM725 600h3v1h-3zM725 603h3v1h-3zM674 606h1v3h-1zM676 606h1v3h-1zM718 611h3v1h-3zM718 614h3v1h-3zM662 615h3v1h-3zM662 618h3v1h-3zM686 610h1v3h-1zM688 610h1v3h-1zM672 607h4v1h-4zM672 612h4v1h-4zM709 599h4v1h-4zM709 603h4v1h-4zM667 624h3v1h-3zM667 627h3v1h-3zM685 603h1v4h-1zM688 603h1v4h-1zM726 554h4v1h-4zM726 559h4v1h-4zM722 555h2v1h-2zM722 558h2v1h-2zM713 594h1v2h-1zM716 594h1v2h-1zM722 588h2v1h-2zM722 592h2v1h-2zM727 573h1v3h-1zM732 573h1v3h-1zM725 589h1v3h-1zM730 589h1v3h-1zM736 573h4v1h-4zM736 578h4v1h-4zM693 555h1v3h-1zM695 555h1v3h-1zM708 560h3v1h-3zM708 564h3v1h-3zM729 556h1v3h-1zM732 556h1v3h-1zM737 567h1v3h-1zM739 567h1v3h-1zM696 579h1v3h-1zM698 579h1v3h-1zM733 584h1v3h-1zM736 584h1v3h-1zM737 591h3v1h-3zM737 594h3v1h-3zM738 566h3v1h-3zM738 571h3v1h-3zM728 566h1v3h-1zM732 566h1v3h-1zM701 565h1v3h-1zM704 565h1v3h-1zM724 567h3v1h-3zM724 570h3v1h-3zM729 552h2v1h-2zM729 555h2v1h-2zM709 595h1v2h-1zM714 595h1v2h-1zM708 553h3v1h-3zM708 556h3v1h-3zM724 583h2v1h-2zM724 588h2v1h-2zM730 581h1v2h-1zM733 581h1v2h-1zM704 553h1v3h-1zM709 553h1v3h-1zM709 577h2v1h-2zM709 579h2v1h-2zM703 576h1v3h-1zM706 576h1v3h-1zM702 558h1v4h-1zM706 558h1v4h-1zM705 554h1v2h-1zM708 554h1v2h-1zM703 580h1v3h-1zM707 580h1v3h-1zM708 558h4v1h-4zM708 563h4v1h-4zM738 571h1v3h-1zM740 571h1v3h-1zM697 583h2v1h-2zM697 586h2v1h-2zM733 573h1v3h-1zM736 573h1v3h-1zM697 573h1v3h-1zM700 573h1v3h-1zM736 559h2v1h-2zM736 564h2v1h-2zM731 558h2v1h-2zM731 560h2v1h-2zM721 586h3v1h-3zM721 589h3v1h-3zM703 591h2v1h-2zM703 594h2v1h-2zM698 594h1v2h-1zM700 594h1v2h-1zM698 586h3v1h-3zM698 589h3v1h-3zM693 575h1v3h-1zM696 575h1v3h-1zM732 564h2v1h-2zM732 568h2v1h-2zM699 575h1v2h-1zM703 575h1v2h-1zM873 479h1v4h-1zM876 479h1v4h-1zM815 501h1v3h-1zM817 501h1v3h-1zM867 579h1v3h-1zM869 579h1v3h-1zM796 492h3v1h-3zM796 497h3v1h-3zM816 474h4v1h-4zM816 479h4v1h-4zM802 543h1v3h-1zM804 543h1v3h-1zM809 567h1v2h-1zM811 567h1v2h-1zM865 499h1v2h-1zM867 499h1v2h-1zM826 516h2v1h-2zM826 518h2v1h-2zM833 559h3v1h-3zM833 562h3v1h-3zM869 523h1v3h-1zM872 523h1v3h-1zM833 589h1v3h-1zM835 589h1v3h-1zM813 546h2v1h-2zM813 550h2v1h-2zM837 533h1v4h-1zM840 533h1v4h-1zM871 527h1v3h-1zM873 527h1v3h-1zM818 569h3v1h-3zM818 572h3v1h-3zM796 528h1v2h-1zM799 528h1v2h-1zM809 514h1v3h-1zM811 514h1v3h-1zM812 598h1v2h-1zM814 598h1v2h-1zM826 501h1v4h-1zM829 501h1v4h-1zM834 555h1v2h-1zM836 555h1v2h-1zM822 592h2v1h-2zM822 595h2v1h-2zM873 584h1v3h-1zM876 584h1v3h-1zM834 470h3v1h-3zM834 473h3v1h-3zM848 550h1v3h-1zM850 550h1v3h-1zM800 526h3v1h-3zM800 529h3v1h-3zM802 479h2v1h-2zM802 481h2v1h-2zM849 541h1v3h-1zM852 541h1v3h-1zM800 497h4v1h-4zM800 501h4v1h-4zM851 548h1v2h-1zM854 548h1v2h-1zM838 507h3v1h-3zM838 512h3v1h-3zM801 552h1v4h-1zM804 552h1v4h-1zM871 485h1v3h-1zM873 485h1v3h-1zM848 577h1v4h-1zM851 577h1v4h-1zM803 592h2v1h-2zM803 594h2v1h-2zM827 571h2v1h-2zM827 574h2v1h-2zM835 581h1v2h-1zM837 581h1v2h-1zM821 582h1v3h-1zM823 582h1v3h-1zM859 501h1v2h-1zM864 501h1v2h-1zM854 554h2v1h-2zM854 557h2v1h-2zM846 532h2v1h-2zM846 534h2v1h-2zM834 516h3v1h-3zM834 519h3v1h-3zM824 586h1v3h-1zM827 586h1v3h-1zM873 497h3v1h-3zM873 500h3v1h-3zM841 528h1v2h-1zM844 528h1v2h-1zM857 571h2v1h-2zM857 574h2v1h-2zM847 478h3v1h-3zM847 483h3v1h-3zM874 531h1v3h-1zM877 531h1v3h-1zM877 540h3v1h-3zM877 543h3v1h-3zM807 525h1v3h-1zM810 525h1v3h-1zM814 496h1v3h-1zM818 496h1v3h-1zM809 569h1v3h-1zM811 569h1v3h-1zM817 575h1v4h-1zM822 575h1v4h-1zM847 597h1v3h-1zM849 597h1v3h-1zM833 534h1v3h-1zM836 534h1v3h-1zM828 510h1v3h-1zM830 510h1v3h-1zM860 510h1v3h-1zM862 510h1v3h-1zM841 579h1v3h-1zM844 579h1v3h-1zM852 471h3v1h-3zM852 474h3v1h-3zM814 475h2v1h-2zM814 480h2v1h-2zM798 532h1v3h-1zM800 532h1v3h-1zM872 473h1v2h-1zM877 473h1v2h-1zM853 490h2v1h-2zM853 492h2v1h-2zM850 594h1v2h-1zM852 594h1v2h-1zM869 568h2v1h-2zM869 573h2v1h-2zM834 541h3v1h-3zM834 546h3v1h-3zM857 501h3v1h-3zM857 506h3v1h-3zM855 496h2v1h-2zM855 498h2v1h-2zM826 500h1v3h-1zM828 500h1v3h-1zM866 582h2v1h-2zM866 585h2v1h-2zM861 502h1v2h-1zM866 502h1v2h-1zM813 501h1v3h-1zM815 501h1v3h-1zM838 493h1v3h-1zM840 493h1v3h-1zM874 518h1v3h-1zM876 518h1v3h-1zM871 493h3v1h-3zM871 498h3v1h-3zM875 499h2v1h-2zM875 503h2v1h-2zM873 555h1v3h-1zM878 555h1v3h-1zM852 476h3v1h-3zM852 481h3v1h-3zM807 488h3v1h-3zM807 491h3v1h-3zM842 480h2v1h-2zM842 482h2v1h-2zM814 486h1v2h-1zM818 486h1v2h-1zM863 545h1v2h-1zM866 545h1v2h-1zM876 474h1v2h-1zM878 474h1v2h-1zM821 534h2v1h-2zM821 537h2v1h-2zM822 585h2v1h-2zM822 587h2v1h-2zM831 554h1v2h-1zM833 554h1v2h-1zM849 481h1v2h-1zM852 481h1v2h-1zM821 502h1v3h-1zM826 502h1v3h-1zM830 488h1v3h-1zM833 488h1v3h-1zM803 533h1v3h-1zM805 533h1v3h-1zM832 476h1v3h-1zM834 476h1v3h-1zM857 478h1v2h-1zM862 478h1v2h-1zM817 490h3v1h-3zM817 493h3v1h-3zM808 581h1v2h-1zM811 581h1v2h-1zM795 474h1v2h-1zM798 474h1v2h-1zM820 494h1v4h-1zM825 494h1v4h-1zM875 547h1v4h-1zM878 547h1v4h-1zM844 474h1v3h-1zM846 474h1v3h-1zM863 560h1v2h-1zM868 560h1v2h-1zM800 513h2v1h-2zM800 518h2v1h-2zM864 507h1v4h-1zM868 507h1v4h-1zM855 492h1v2h-1zM858 492h1v2h-1zM807 569h1v3h-1zM809 569h1v3h-1zM876 596h1v3h-1zM879 596h1v3h-1zM855 483h1v3h-1zM857 483h1v3h-1zM810 471h1v2h-1zM815 471h1v2h-1zM844 542h2v1h-2zM844 544h2v1h-2zM863 480h1v3h-1zM867 480h1v3h-1zM829 515h1v3h-1zM831 515h1v3h-1zM829 511h1v2h-1zM832 511h1v2h-1zM839 496h1v3h-1zM841 496h1v3h-1zM824 595h1v3h-1zM829 595h1v3h-1zM830 589h2v1h-2zM830 594h2v1h-2zM811 537h1v2h-1zM813 537h1v2h-1zM853 562h1v4h-1zM856 562h1v4h-1zM848 546h2v1h-2zM848 548h2v1h-2zM846 566h1v4h-1zM849 566h1v4h-1zM830 504h1v2h-1zM833 504h1v2h-1zM800 550h2v1h-2zM800 553h2v1h-2zM843 582h2v1h-2zM843 586h2v1h-2zM802 531h1v3h-1zM804 531h1v3h-1zM857 521h1v3h-1zM859 521h1v3h-1zM826 580h2v1h-2zM826 584h2v1h-2zM828 468h2v1h-2zM828 471h2v1h-2zM820 539h1v2h-1zM823 539h1v2h-1zM826 524h1v3h-1zM829 524h1v3h-1zM848 502h1v2h-1zM851 502h1v2h-1zM807 534h1v4h-1zM810 534h1v4h-1zM857 481h1v4h-1zM860 481h1v4h-1zM824 572h1v2h-1zM828 572h1v2h-1zM875 525h2v1h-2zM875 527h2v1h-2zM803 589h3v1h-3zM803 592h3v1h-3zM797 527h1v2h-1zM800 527h1v2h-1zM860 531h1v4h-1zM863 531h1v4h-1zM819 507h1v4h-1zM822 507h1v4h-1zM1049 416h1v3h-1zM1051 416h1v3h-1zM890 432h1v4h-1zM895 432h1v4h-1zM1046 523h2v1h-2zM1046 526h2v1h-2zM943 532h1v3h-1zM945 532h1v3h-1zM929 553h3v1h-3zM929 556h3v1h-3zM989 458h1v2h-1zM992 458h1v2h-1zM891 483h1v4h-1zM894 483h1v4h-1zM1043 549h2v1h-2zM1043 551h2v1h-2zM960 505h1v3h-1zM963 505h1v3h-1zM889 529h4v1h-4zM889 534h4v1h-4zM983 484h2v1h-2zM983 487h2v1h-2zM1097 537h1v4h-1zM1100 537h1v4h-1zM1029 500h3v1h-3zM1029 503h3v1h-3zM1013 553h1v2h-1zM1017 553h1v2h-1zM1026 479h1v4h-1zM1030 479h1v4h-1zM1049 516h2v1h-2zM1049 519h2v1h-2zM948 462h3v1h-3zM948 465h3v1h-3zM916 452h1v2h-1zM918 452h1v2h-1zM1046 512h2v1h-2zM1046 515h2v1h-2zM902 466h2v1h-2zM902 470h2v1h-2zM908 466h1v3h-1zM910 466h1v3h-1zM949 420h1v3h-1zM951 420h1v3h-1zM1047 506h2v1h-2zM1047 509h2v1h-2zM1078 561h1v3h-1zM1080 561h1v3h-1zM1055 553h3v1h-3zM1055 556h3v1h-3zM940 483h2v1h-2zM940 487h2v1h-2zM1074 462h1v3h-1zM1076 462h1v3h-1zM1053 517h1v3h-1zM1055 517h1v3h-1zM955 482h3v1h-3zM955 485h3v1h-3zM1036 535h1v4h-1zM1039 535h1v4h-1zM1066 474h2v1h-2zM1066 476h2v1h-2zM921 435h1v2h-1zM923 435h1v2h-1zM914 454h3v1h-3zM914 458h3v1h-3zM888 523h2v1h-2zM888 525h2v1h-2zM1034 466h1v2h-1zM1037 466h1v2h-1zM935 516h3v1h-3zM935 521h3v1h-3zM992 459h1v3h-1zM997 459h1v3h-1zM985 523h1v2h-1zM988 523h1v2h-1zM1094 564h1v4h-1zM1097 564h1v4h-1zM1053 496h1v3h-1zM1055 496h1v3h-1zM1020 560h2v1h-2zM1020 563h2v1h-2zM1035 559h4v1h-4zM1035 564h4v1h-4zM1069 444h1v3h-1zM1071 444h1v3h-1zM1002 556h3v1h-3zM1002 561h3v1h-3zM1005 529h3v1h-3zM1005 532h3v1h-3zM992 455h1v3h-1zM996 455h1v3h-1zM936 441h1v4h-1zM939 441h1v4h-1zM1029 471h2v1h-2zM1029 474h2v1h-2zM915 463h1v2h-1zM917 463h1v2h-1zM1058 500h1v3h-1zM1060 500h1v3h-1zM961 535h3v1h-3zM961 538h3v1h-3zM1080 407h1v2h-1zM1082 407h1v2h-1zM1036 442h1v3h-1zM1039 442h1v3h-1zM1094 511h2v1h-2zM1094 513h2v1h-2zM1079 522h1v3h-1zM1081 522h1v3h-1zM980 444h3v1h-3zM980 447h3v1h-3zM1088 485h1v3h-1zM1093 485h1v3h-1zM902 438h2v1h-2zM902 442h2v1h-2zM1042 477h2v1h-2zM1042 480h2v1h-2zM1003 486h1v3h-1zM1005 486h1v3h-1zM901 403h1v3h-1zM904 403h1v3h-1zM967 440h1v2h-1zM970 440h1v2h-1zM1045 533h1v3h-1zM1047 533h1v3h-1zM1072 532h2v1h-2zM1072 534h2v1h-2zM1108 471h1v3h-1zM1112 471h1v3h-1zM1090 555h1v4h-1zM1093 555h1v4h-1zM1051 411h1v3h-1zM1055 411h1v3h-1zM998 540h1v4h-1zM1001 540h1v4h-1zM953 502h2v1h-2zM953 506h2v1h-2zM1052 448h3v1h-3zM1052 452h3v1h-3zM984 547h1v2h-1zM988 547h1v2h-1zM1097 455h3v1h-3zM1097 458h3v1h-3zM1033 562h2v1h-2zM1033 566h2v1h-2zM1085 413h1v2h-1zM1087 413h1v2h-1zM961 408h1v4h-1zM964 408h1v4h-1zM1079 502h1v2h-1zM1084 502h1v2h-1zM1112 407h1v4h-1zM1115 407h1v4h-1zM906 429h3v1h-3zM906 432h3v1h-3zM1105 469h3v1h-3zM1105 473h3v1h-3zM1009 449h1v3h-1zM1011 449h1v3h-1zM910 464h1v3h-1zM912 464h1v3h-1zM977 490h1v3h-1zM979 490h1v3h-1zM914 526h3v1h-3zM914 529h3v1h-3zM988 510h1v2h-1zM991 510h1v2h-1zM954 409h1v4h-1zM957 409h1v4h-1zM936 530h2v1h-2zM936 532h2v1h-2zM1090 514h2v1h-2zM1090 517h2v1h-2zM994 537h2v1h-2zM994 541h2v1h-2zM909 413h1v3h-1zM911 413h1v3h-1zM932 437h1v2h-1zM937 437h1v2h-1zM980 553h2v1h-2zM980 556h2v1h-2zM903 557h3v1h-3zM903 560h3v1h-3zM1072 482h1v2h-1zM1076 482h1v2h-1zM1099 417h1v3h-1zM1104 417h1v3h-1zM886 449h2v1h-2zM886 452h2v1h-2zM1052 512h1v3h-1zM1056 512h1v3h-1zM1099 472h2v1h-2zM1099 476h2v1h-2zM881 415h3v1h-3zM881 419h3v1h-3zM956 410h3v1h-3zM956 413h3v1h-3zM929 413h1v2h-1zM933 413h1v2h-1zM917 464h1v3h-1zM919 464h1v3h-1zM1041 468h2v1h-2zM1041 471h2v1h-2zM968 498h4v1h-4zM968 502h4v1h-4zM996 490h1v3h-1zM1001 490h1v3h-1zM897 406h3v1h-3zM897 411h3v1h-3zM1084 468h2v1h-2zM1084 472h2v1h-2zM1037 402h1v4h-1zM1040 402h1v4h-1zM913 406h1v4h-1zM918 406h1v4h-1zM948 548h1v4h-1zM951 548h1v4h-1zM1038 483h2v1h-2zM1038 486h2v1h-2zM1082 521h2v1h-2zM1082 526h2v1h-2zM1013 465h4v1h-4zM1013 469h4v1h-4zM912 444h1v2h-1zM915 444h1v2h-1zM929 537h1v3h-1zM931 537h1v3h-1zM968 411h1v4h-1zM973 411h1v4h-1zM1062 428h3v1h-3zM1062 432h3v1h-3zM904 533h1v3h-1zM906 533h1v3h-1zM895 556h1v2h-1zM898 556h1v2h-1zM1022 413h3v1h-3zM1022 416h3v1h-3zM1058 436h1v2h-1zM1063 436h1v2h-1zM965 404h2v1h-2zM965 407h2v1h-2zM995 412h3v1h-3zM995 415h3v1h-3zM967 425h4v1h-4zM967 430h4v1h-4zM1014 549h3v1h-3zM1014 552h3v1h-3zM922 524h2v1h-2zM922 526h2v1h-2zM1074 479h2v1h-2zM1074 481h2v1h-2zM943 401h2v1h-2zM943 405h2v1h-2zM882 435h3v1h-3zM882 439h3v1h-3zM1112 412h1v2h-1zM1115 412h1v2h-1zM1114 402h2v1h-2zM1114 404h2v1h-2zM918 524h1v3h-1zM920 524h1v3h-1zM898 465h1v3h-1zM900 465h1v3h-1zM958 414h3v1h-3zM958 417h3v1h-3zM938 482h1v3h-1zM940 482h1v3h-1zM943 545h2v1h-2zM943 547h2v1h-2zM904 429h4v1h-4zM904 433h4v1h-4zM897 475h3v1h-3zM897 478h3v1h-3zM1113 507h1v3h-1zM1116 507h1v3h-1zM1048 403h1v4h-1zM1051 403h1v4h-1zM1084 550h4v1h-4zM1084 554h4v1h-4zM1006 438h1v2h-1zM1009 438h1v2h-1zM951 513h3v1h-3zM951 516h3v1h-3zM886 542h3v1h-3zM886 545h3v1h-3zM1010 553h1v3h-1zM1014 553h1v3h-1zM893 557h3v1h-3zM893 560h3v1h-3zM988 538h2v1h-2zM988 542h2v1h-2zM919 519h1v2h-1zM921 519h1v2h-1zM923 497h1v3h-1zM926 497h1v3h-1zM1060 413h1v2h-1zM1065 413h1v2h-1zM903 424h3v1h-3zM903 429h3v1h-3zM1069 434h4v1h-4zM1069 439h4v1h-4zM1105 509h3v1h-3zM1105 512h3v1h-3zM1034 426h1v4h-1zM1037 426h1v4h-1zM1002 417h3v1h-3zM1002 422h3v1h-3zM896 558h3v1h-3zM896 561h3v1h-3zM1004 545h1v3h-1zM1007 545h1v3h-1zM1035 412h3v1h-3zM1035 415h3v1h-3zM1113 402h1v3h-1zM1118 402h1v3h-1zM1010 538h1v3h-1zM1012 538h1v3h-1zM990 520h2v1h-2zM990 524h2v1h-2zM1042 567h1v3h-1zM1046 567h1v3h-1zM1009 544h1v2h-1zM1014 544h1v2h-1zM957 534h1v3h-1zM960 534h1v3h-1zM909 550h1v3h-1zM911 550h1v3h-1zM988 491h3v1h-3zM988 496h3v1h-3zM963 502h2v1h-2zM963 505h2v1h-2zM990 518h1v2h-1zM992 518h1v2h-1zM968 507h1v3h-1zM971 507h1v3h-1zM1115 565h1v3h-1zM1117 565h1v3h-1zM996 487h2v1h-2zM996 490h2v1h-2zM892 436h3v1h-3zM892 440h3v1h-3zM1011 465h1v3h-1zM1013 465h1v3h-1zM893 511h1v3h-1zM895 511h1v3h-1zM998 465h1v2h-1zM1003 465h1v2h-1zM1035 488h1v2h-1zM1039 488h1v2h-1zM1105 414h2v1h-2zM1105 417h2v1h-2zM932 516h3v1h-3zM932 519h3v1h-3zM1075 528h1v3h-1zM1078 528h1v3h-1zM902 490h3v1h-3zM902 493h3v1h-3zM952 542h2v1h-2zM952 547h2v1h-2zM1100 415h2v1h-2zM1100 417h2v1h-2zM1090 430h1v3h-1zM1093 430h1v3h-1zM1072 411h1v2h-1zM1074 411h1v2h-1zM1056 527h1v4h-1zM1059 527h1v4h-1zM910 412h1v2h-1zM914 412h1v2h-1zM996 561h1v3h-1zM999 561h1v3h-1zM1005 429h1v2h-1zM1007 429h1v2h-1zM1009 520h1v2h-1zM1011 520h1v2h-1zM1062 566h1v3h-1zM1066 566h1v3h-1zM948 552h1v3h-1zM951 552h1v3h-1zM1049 543h2v1h-2zM1049 546h2v1h-2zM1022 469h2v1h-2zM1022 471h2v1h-2zM912 440h1v3h-1zM917 440h1v3h-1zM1039 444h2v1h-2zM1039 448h2v1h-2zM1015 409h1v3h-1zM1020 409h1v3h-1zM1066 530h1v3h-1zM1068 530h1v3h-1zM1029 515h1v3h-1zM1031 515h1v3h-1zM1001 531h1v3h-1zM1005 531h1v3h-1zM968 401h3v1h-3zM968 405h3v1h-3zM1049 510h1v3h-1zM1051 510h1v3h-1zM1109 509h1v3h-1zM1111 509h1v3h-1zM889 567h1v2h-1zM891 567h1v2h-1zM901 504h1v2h-1zM903 504h1v2h-1zM1090 525h1v3h-1zM1093 525h1v3h-1zM929 535h1v3h-1zM932 535h1v3h-1zM988 542h1v2h-1zM991 542h1v2h-1zM1095 506h3v1h-3zM1095 509h3v1h-3zM980 510h1v2h-1zM984 510h1v2h-1zM1003 432h1v4h-1zM1006 432h1v4h-1zM1011 405h1v2h-1zM1013 405h1v2h-1zM1111 517h4v1h-4zM1111 521h4v1h-4zM1055 403h1v3h-1zM1057 403h1v3h-1zM896 500h1v4h-1zM899 500h1v4h-1zM915 414h1v3h-1zM920 414h1v3h-1zM1015 560h3v1h-3zM1015 564h3v1h-3zM1104 504h1v3h-1zM1107 504h1v3h-1zM960 470h1v3h-1zM962 470h1v3h-1zM1005 424h3v1h-3zM1005 428h3v1h-3zM1024 438h3v1h-3zM1024 441h3v1h-3zM1069 418h1v2h-1zM1072 418h1v2h-1zM997 484h1v2h-1zM999 484h1v2h-1zM965 502h1v2h-1zM967 502h1v2h-1zM922 531h3v1h-3zM922 534h3v1h-3zM901 514h1v2h-1zM904 514h1v2h-1zM986 470h2v1h-2zM986 473h2v1h-2zM954 512h1v2h-1zM958 512h1v2h-1zM997 566h3v1h-3zM997 569h3v1h-3zM987 471h4v1h-4zM987 476h4v1h-4zM1049 436h1v3h-1zM1051 436h1v3h-1zM920 562h1v3h-1zM923 562h1v3h-1zM1031 558h1v2h-1zM1035 558h1v2h-1zM978 565h1v3h-1zM980 565h1v3h-1zM1042 548h3v1h-3zM1042 553h3v1h-3zM1063 523h3v1h-3zM1063 528h3v1h-3zM1112 482h3v1h-3zM1112 487h3v1h-3zM938 456h3v1h-3zM938 459h3v1h-3zM1014 514h2v1h-2zM1014 517h2v1h-2zM1051 566h1v3h-1zM1053 566h1v3h-1zM1019 426h1v3h-1zM1022 426h1v3h-1zM984 481h2v1h-2zM984 483h2v1h-2zM896 504h1v2h-1zM898 504h1v2h-1zM949 416h3v1h-3zM949 419h3v1h-3zM1109 461h1v2h-1zM1112 461h1v2h-1zM1103 489h1v2h-1zM1108 489h1v2h-1zM1063 426h1v4h-1zM1066 426h1v4h-1zM1060 480h1v2h-1zM1062 480h1v2h-1zM1015 513h3v1h-3zM1015 516h3v1h-3zM1076 401h1v3h-1zM1078 401h1v3h-1zM1093 430h1v2h-1zM1098 430h1v2h-1zM957 499h1v4h-1zM961 499h1v4h-1zM1115 447h1v4h-1zM1118 447h1v4h-1zM1103 441h3v1h-3zM1103 444h3v1h-3zM905 533h1v3h-1zM907 533h1v3h-1zM895 412h2v1h-2zM895 416h2v1h-2zM890 495h4v1h-4zM890 500h4v1h-4zM896 555h1v3h-1zM898 555h1v3h-1zM1006 458h1v3h-1zM1009 458h1v3h-1zM1098 520h2v1h-2zM1098 523h2v1h-2zM938 503h3v1h-3zM938 506h3v1h-3zM1013 552h2v1h-2zM1013 557h2v1h-2zM1016 432h1v3h-1zM1021 432h1v3h-1zM1108 560h1v2h-1zM1110 560h1v2h-1zM1026 554h1v2h-1zM1031 554h1v2h-1zM1000 543h3v1h-3zM1000 546h3v1h-3zM957 412h3v1h-3zM957 415h3v1h-3zM996 422h3v1h-3zM996 425h3v1h-3zM913 555h1v3h-1zM915 555h1v3h-1zM982 418h1v2h-1zM987 418h1v2h-1zM999 500h1v3h-1zM1001 500h1v3h-1zM973 429h1v2h-1zM978 429h1v2h-1zM1104 511h1v3h-1zM1106 511h1v3h-1zM890 437h1v4h-1zM895 437h1v4h-1zM883 465h3v1h-3zM883 470h3v1h-3zM900 462h1v3h-1zM904 462h1v3h-1zM905 505h1v3h-1zM907 505h1v3h-1zM1024 431h1v4h-1zM1029 431h1v4h-1zM1026 531h1v2h-1zM1029 531h1v2h-1zM1092 466h2v1h-2zM1092 469h2v1h-2zM1019 516h1v4h-1zM1022 516h1v4h-1zM990 550h2v1h-2zM990 555h2v1h-2zM1083 414h1v3h-1zM1086 414h1v3h-1zM1095 422h1v4h-1zM1098 422h1v4h-1zM921 402h1v2h-1zM925 402h1v2h-1zM974 564h3v1h-3zM974 567h3v1h-3zM883 471h2v1h-2zM883 474h2v1h-2zM1093 528h3v1h-3zM1093 532h3v1h-3zM991 406h1v2h-1zM993 406h1v2h-1zM936 535h2v1h-2zM936 537h2v1h-2zM955 410h1v2h-1zM960 410h1v2h-1zM1053 480h1v2h-1zM1056 480h1v2h-1zM1051 519h1v3h-1zM1053 519h1v3h-1zM941 520h1v3h-1zM943 520h1v3h-1zM881 524h2v1h-2zM881 526h2v1h-2zM941 460h1v2h-1zM945 460h1v2h-1zM896 459h2v1h-2zM896 464h2v1h-2zM1034 514h2v1h-2zM1034 517h2v1h-2zM1006 457h3v1h-3zM1006 462h3v1h-3zM1027 544h3v1h-3zM1027 547h3v1h-3zM1085 461h1v4h-1zM1088 461h1v4h-1zM1078 506h2v1h-2zM1078 510h2v1h-2zM929 458h2v1h-2zM929 461h2v1h-2zM1112 472h2v1h-2zM1112 474h2v1h-2zM1055 473h1v2h-1zM1058 473h1v2h-1zM915 541h1v4h-1zM918 541h1v4h-1zM1050 425h2v1h-2zM1050 428h2v1h-2zM1066 473h2v1h-2zM1066 475h2v1h-2zM891 497h2v1h-2zM891 499h2v1h-2zM894 464h1v4h-1zM897 464h1v4h-1zM1060 524h2v1h-2zM1060 528h2v1h-2zM1040 443h1v4h-1zM1044 443h1v4h-1zM942 426h1v2h-1zM947 426h1v2h-1zM965 456h1v3h-1zM967 456h1v3h-1zM1083 432h1v4h-1zM1088 432h1v4h-1zM1086 526h1v4h-1zM1091 526h1v4h-1zM953 491h4v1h-4zM953 495h4v1h-4zM981 438h1v4h-1zM984 438h1v4h-1zM977 519h1v3h-1zM979 519h1v3h-1zM920 492h1v2h-1zM922 492h1v2h-1zM989 405h2v1h-2zM989 409h2v1h-2zM1061 472h3v1h-3zM1061 475h3v1h-3zM917 493h1v3h-1zM919 493h1v3h-1zM979 473h1v4h-1zM984 473h1v4h-1zM999 486h1v3h-1zM1001 486h1v3h-1zM939 519h3v1h-3zM939 523h3v1h-3zM1022 529h1v3h-1zM1027 529h1v3h-1zM1063 437h1v3h-1zM1065 437h1v3h-1zM1032 498h1v4h-1zM1035 498h1v4h-1zM1097 403h2v1h-2zM1097 405h2v1h-2zM893 524h1v3h-1zM897 524h1v3h-1zM933 471h1v4h-1zM936 471h1v4h-1zM1067 457h1v3h-1zM1069 457h1v3h-1zM887 493h3v1h-3zM887 496h3v1h-3zM1009 469h1v3h-1zM1011 469h1v3h-1zM1009 565h1v3h-1zM1011 565h1v3h-1zM930 557h1v2h-1zM933 557h1v2h-1zM1039 464h1v3h-1zM1042 464h1v3h-1zM1011 428h1v3h-1zM1014 428h1v3h-1zM1036 509h1v3h-1zM1039 509h1v3h-1zM896 405h2v1h-2zM896 410h2v1h-2zM1000 448h2v1h-2zM1000 452h2v1h-2zM1010 444h1v4h-1zM1013 444h1v4h-1zM979 471h3v1h-3zM979 474h3v1h-3zM1005 515h3v1h-3zM1005 518h3v1h-3zM929 548h2v1h-2zM929 551h2v1h-2zM936 515h2v1h-2zM936 520h2v1h-2zM951 478h1v3h-1zM953 478h1v3h-1zM1063 419h1v2h-1zM1065 419h1v2h-1zM1001 460h3v1h-3zM1001 465h3v1h-3zM1084 418h2v1h-2zM1084 422h2v1h-2zM1000 467h1v4h-1zM1003 467h1v4h-1zM969 446h1v3h-1zM971 446h1v3h-1zM1019 494h1v4h-1zM1022 494h1v4h-1zM1106 514h1v4h-1zM1111 514h1v4h-1zM917 488h3v1h-3zM917 491h3v1h-3zM1034 500h1v3h-1zM1039 500h1v3h-1zM948 429h2v1h-2zM948 433h2v1h-2zM1105 477h1v3h-1zM1109 477h1v3h-1zM1015 516h2v1h-2zM1015 518h2v1h-2zM896 457h3v1h-3zM896 460h3v1h-3zM911 521h3v1h-3zM911 525h3v1h-3zM942 418h1v3h-1zM945 418h1v3h-1zM1046 409h4v1h-4zM1046 414h4v1h-4zM1056 531h1v4h-1zM1059 531h1v4h-1zM1003 527h1v3h-1zM1005 527h1v3h-1zM1105 553h4v1h-4zM1105 558h4v1h-4zM1020 545h3v1h-3zM1020 548h3v1h-3zM1114 473h1v3h-1zM1117 473h1v3h-1zM1005 403h3v1h-3zM1005 406h3v1h-3zM987 547h2v1h-2zM987 550h2v1h-2zM895 461h4v1h-4zM895 466h4v1h-4zM924 409h3v1h-3zM924 412h3v1h-3zM1035 447h1v4h-1zM1038 447h1v4h-1zM1092 556h1v3h-1zM1095 556h1v3h-1zM971 421h1v2h-1zM974 421h1v2h-1zM955 517h3v1h-3zM955 520h3v1h-3zM893 414h3v1h-3zM893 417h3v1h-3zM1098 537h2v1h-2zM1098 539h2v1h-2zM934 555h1v4h-1zM937 555h1v4h-1zM981 513h4v1h-4zM981 517h4v1h-4zM991 541h2v1h-2zM991 544h2v1h-2zM978 440h1v2h-1zM980 440h1v2h-1zM1026 461h1v2h-1zM1029 461h1v2h-1zM990 450h4v1h-4zM990 455h4v1h-4zM1099 451h2v1h-2zM1099 454h2v1h-2zM959 538h1v2h-1zM962 538h1v2h-1zM1111 421h1v3h-1zM1114 421h1v3h-1zM886 518h2v1h-2zM886 523h2v1h-2zM1021 492h2v1h-2zM1021 495h2v1h-2zM1017 561h3v1h-3zM1017 564h3v1h-3zM991 316h1v3h-1zM993 316h1v3h-1zM1075 330h1v3h-1zM1078 330h1v3h-1zM1104 346h1v3h-1zM1106 346h1v3h-1zM1095 324h2v1h-2zM1095 329h2v1h-2zM988 301h1v3h-1zM990 301h1v3h-1zM1047 344h1v2h-1zM1052 344h1v2h-1zM1053 309h3v1h-3zM1053 312h3v1h-3zM1052 317h2v1h-2zM1052 319h2v1h-2zM1015 333h2v1h-2zM1015 335h2v1h-2zM1116 312h2v1h-2zM1116 314h2v1h-2zM968 315h4v1h-4zM968 319h4v1h-4zM1005 323h3v1h-3zM1005 327h3v1h-3zM1083 321h1v3h-1zM1088 321h1v3h-1zM1026 309h1v4h-1zM1029 309h1v4h-1zM1014 330h1v2h-1zM1017 330h1v2h-1zM1056 308h1v2h-1zM1058 308h1v2h-1zM1057 319h1v3h-1zM1059 319h1v3h-1zM969 341h2v1h-2zM969 345h2v1h-2zM1044 322h1v2h-1zM1046 322h1v2h-1zM960 332h3v1h-3zM960 336h3v1h-3zM1022 330h1v3h-1zM1024 330h1v3h-1zM1034 315h1v3h-1zM1036 315h1v3h-1zM999 312h2v1h-2zM999 315h2v1h-2zM1088 315h1v3h-1zM1091 315h1v3h-1zM1081 304h3v1h-3zM1081 307h3v1h-3zM1043 338h1v2h-1zM1045 338h1v2h-1zM998 347h1v3h-1zM1003 347h1v3h-1zM966 321h1v2h-1zM968 321h1v2h-1zM1041 316h1v3h-1zM1045 316h1v3h-1zM976 329h1v3h-1zM978 329h1v3h-1zM1051 313h1v3h-1zM1054 313h1v3h-1zM1018 314h1v2h-1zM1020 314h1v2h-1zM1093 338h3v1h-3zM1093 342h3v1h-3zM1086 344h2v1h-2zM1086 346h2v1h-2zM1024 338h1v2h-1zM1026 338h1v2h-1zM1068 318h1v4h-1zM1071 318h1v4h-1zM1053 328h2v1h-2zM1053 331h2v1h-2zM1090 347h1v3h-1zM1095 347h1v3h-1zM962 331h1v2h-1zM965 331h1v2h-1zM1027 331h2v1h-2zM1027 333h2v1h-2zM1107 312h1v2h-1zM1112 312h1v2h-1zM1029 338h4v1h-4zM1029 342h4v1h-4zM999 326h1v2h-1zM1001 326h1v2h-1zM1094 307h2v1h-2zM1094 309h2v1h-2zM987 320h3v1h-3zM987 323h3v1h-3zM1006 327h1v3h-1zM1008 327h1v3h-1zM986 316h1v3h-1zM988 316h1v3h-1zM1061 327h1v4h-1zM1064 327h1v4h-1zM1109 323h1v2h-1zM1111 323h1v2h-1zM978 312h1v2h-1zM980 312h1v2h-1zM1000 333h2v1h-2zM1000 336h2v1h-2zM1047 342h1v2h-1zM1050 342h1v2h-1zM1103 302h1v3h-1zM1105 302h1v3h-1zM1089 304h3v1h-3zM1089 307h3v1h-3zM1003 304h2v1h-2zM1003 306h2v1h-2zM974 328h1v2h-1zM976 328h1v2h-1zM1004 323h3v1h-3zM1004 326h3v1h-3zM1052 312h1v3h-1zM1057 312h1v3h-1zM1057 312h1v3h-1zM1059 312h1v3h-1zM995 332h2v1h-2zM995 335h2v1h-2zM1086 312h3v1h-3zM1086 315h3v1h-3zM1032 343h3v1h-3zM1032 346h3v1h-3zM1002 395h2v1h-2zM1002 397h2v1h-2zM975 404h1v4h-1zM978 404h1v4h-1zM1008 385h1v3h-1zM1012 385h1v3h-1zM983 384h1v3h-1zM985 384h1v3h-1zM989 408h1v2h-1zM992 408h1v2h-1zM1028 418h3v1h-3zM1028 421h3v1h-3zM1035 389h2v1h-2zM1035 393h2v1h-2zM1016 399h3v1h-3zM1016 403h3v1h-3zM975 434h1v3h-1zM978 434h1v3h-1zM1001 394h2v1h-2zM1001 398h2v1h-2zM1007 375h2v1h-2zM1007 379h2v1h-2zM1005 376h1v2h-1zM1007 376h1v2h-1zM996 431h1v3h-1zM998 431h1v3h-1zM995 433h1v3h-1zM997 433h1v3h-1zM996 371h4v1h-4zM996 376h4v1h-4zM1019 406h2v1h-2zM1019 410h2v1h-2zM1033 430h1v3h-1zM1035 430h1v3h-1zM997 395h2v1h-2zM997 397h2v1h-2zM981 430h1v2h-1zM984 430h1v2h-1zM1036 378h1v3h-1zM1039 378h1v3h-1zM1031 402h2v1h-2zM1031 405h2v1h-2zM1036 429h2v1h-2zM1036 432h2v1h-2zM990 418h4v1h-4zM990 423h4v1h-4zM1026 386h1v2h-1zM1030 386h1v2h-1zM993 413h4v1h-4zM993 417h4v1h-4zM977 423h2v1h-2zM977 426h2v1h-2zM1035 407h1v4h-1zM1038 407h1v4h-1zM978 405h2v1h-2zM978 408h2v1h-2zM1014 392h1v3h-1zM1017 392h1v3h-1zM1024 419h3v1h-3zM1024 422h3v1h-3zM1018 404h1v4h-1zM1022 404h1v4h-1zM993 373h1v2h-1zM995 373h1v2h-1zM1017 412h1v3h-1zM1020 412h1v3h-1zM995 391h1v2h-1zM997 391h1v2h-1zM1005 433h1v2h-1zM1008 433h1v2h-1zM984 400h2v1h-2zM984 405h2v1h-2zM1004 378h3v1h-3zM1004 382h3v1h-3zM1026 387h2v1h-2zM1026 392h2v1h-2zM1019 392h1v2h-1zM1023 392h1v2h-1zM1004 424h3v1h-3zM1004 427h3v1h-3zM1014 371h1v3h-1zM1017 371h1v3h-1zM1013 384h1v3h-1zM1016 384h1v3h-1zM1033 399h1v3h-1zM1037 399h1v3h-1zM988 373h1v3h-1zM992 373h1v3h-1zM1029 403h1v3h-1zM1031 403h1v3h-1zM1010 411h3v1h-3zM1010 414h3v1h-3zM974 412h1v4h-1zM977 412h1v4h-1zM1015 413h1v2h-1zM1018 413h1v2h-1zM1008 371h3v1h-3zM1008 374h3v1h-3zM979 381h3v1h-3zM979 384h3v1h-3zM1002 405h1v3h-1zM1005 405h1v3h-1zM1030 407h2v1h-2zM1030 409h2v1h-2zM1020 381h1v3h-1zM1023 381h1v3h-1zM1013 386h2v1h-2zM1013 391h2v1h-2zM1013 411h1v2h-1zM1015 411h1v2h-1zM999 392h2v1h-2zM999 394h2v1h-2zM997 416h2v1h-2zM997 420h2v1h-2zM996 425h1v3h-1zM1001 425h1v3h-1zM1018 400h3v1h-3zM1018 403h3v1h-3zM977 420h3v1h-3zM977 424h3v1h-3zM1014 400h2v1h-2zM1014 402h2v1h-2zM1031 374h3v1h-3zM1031 379h3v1h-3zM1004 427h1v4h-1zM1007 427h1v4h-1zM1016 428h3v1h-3zM1016 431h3v1h-3zM1005 432h1v2h-1zM1010 432h1v2h-1zM1010 378h1v3h-1zM1014 378h1v3h-1zM993 397h1v2h-1zM995 397h1v2h-1zM994 391h1v3h-1zM997 391h1v3h-1zM994 383h1v3h-1zM997 383h1v3h-1zM979 405h2v1h-2zM979 407h2v1h-2zM1230 507h1v2h-1zM1232 507h1v2h-1zM1203 591h1v3h-1zM1205 591h1v3h-1zM1148 515h2v1h-2zM1148 517h2v1h-2zM1142 566h1v2h-1zM1146 566h1v2h-1zM1191 542h2v1h-2zM1191 544h2v1h-2zM1216 535h3v1h-3zM1216 538h3v1h-3zM1227 562h1v3h-1zM1230 562h1v3h-1zM1183 517h1v3h-1zM1187 517h1v3h-1zM1157 580h3v1h-3zM1157 584h3v1h-3zM1282 554h2v1h-2zM1282 557h2v1h-2zM1245 589h1v2h-1zM1247 589h1v2h-1zM1170 587h1v2h-1zM1173 587h1v2h-1zM1221 520h3v1h-3zM1221 523h3v1h-3zM1275 549h1v3h-1zM1277 549h1v3h-1zM1239 567h3v1h-3zM1239 572h3v1h-3zM1266 516h2v1h-2zM1266 518h2v1h-2zM1200 565h1v3h-1zM1204 565h1v3h-1zM1291 572h4v1h-4zM1291 576h4v1h-4zM1174 577h1v3h-1zM1176 577h1v3h-1zM1142 541h1v2h-1zM1144 541h1v2h-1zM1246 530h1v4h-1zM1249 530h1v4h-1zM1286 585h1v3h-1zM1289 585h1v3h-1zM1284 501h1v3h-1zM1286 501h1v3h-1zM1162 539h1v3h-1zM1165 539h1v3h-1zM1270 582h2v1h-2zM1270 584h2v1h-2zM1278 556h1v2h-1zM1283 556h1v2h-1zM1295 568h1v4h-1zM1298 568h1v4h-1zM1168 498h1v3h-1zM1170 498h1v3h-1zM1291 522h2v1h-2zM1291 527h2v1h-2zM1186 527h1v3h-1zM1191 527h1v3h-1zM1177 518h1v3h-1zM1179 518h1v3h-1zM1244 519h1v3h-1zM1247 519h1v3h-1zM1201 584h1v3h-1zM1203 584h1v3h-1zM1178 587h4v1h-4zM1178 592h4v1h-4zM1173 527h1v3h-1zM1177 527h1v3h-1zM1219 490h4v1h-4zM1219 494h4v1h-4zM1186 573h1v2h-1zM1189 573h1v2h-1zM1187 495h1v3h-1zM1190 495h1v3h-1zM1229 592h2v1h-2zM1229 597h2v1h-2zM1141 540h1v4h-1zM1145 540h1v4h-1zM1176 504h2v1h-2zM1176 507h2v1h-2zM1279 510h1v3h-1zM1281 510h1v3h-1zM1186 585h2v1h-2zM1186 587h2v1h-2zM1230 576h2v1h-2zM1230 581h2v1h-2zM1203 497h2v1h-2zM1203 499h2v1h-2zM1225 523h2v1h-2zM1225 526h2v1h-2zM1167 580h2v1h-2zM1167 584h2v1h-2zM1268 541h1v2h-1zM1270 541h1v2h-1zM1280 487h1v2h-1zM1282 487h1v2h-1zM1224 580h1v3h-1zM1226 580h1v3h-1zM1204 524h1v4h-1zM1207 524h1v4h-1zM1141 516h2v1h-2zM1141 521h2v1h-2zM1210 481h1v3h-1zM1213 481h1v3h-1zM1200 591h1v3h-1zM1202 591h1v3h-1zM1142 589h1v3h-1zM1144 589h1v3h-1zM1264 560h1v3h-1zM1266 560h1v3h-1zM1149 598h1v2h-1zM1151 598h1v2h-1zM1287 581h1v3h-1zM1290 581h1v3h-1zM1173 580h4v1h-4zM1173 584h4v1h-4zM1141 507h1v3h-1zM1144 507h1v3h-1zM1167 561h1v2h-1zM1171 561h1v2h-1zM1249 492h1v3h-1zM1254 492h1v3h-1zM1294 533h3v1h-3zM1294 536h3v1h-3zM1167 491h1v4h-1zM1170 491h1v4h-1zM1177 487h2v1h-2zM1177 492h2v1h-2zM1292 550h1v3h-1zM1294 550h1v3h-1zM1217 573h2v1h-2zM1217 575h2v1h-2zM1183 503h2v1h-2zM1183 505h2v1h-2zM1149 583h2v1h-2zM1149 586h2v1h-2zM1249 503h3v1h-3zM1249 506h3v1h-3zM1262 576h1v3h-1zM1264 576h1v3h-1zM1191 533h1v3h-1zM1193 533h1v3h-1zM1156 572h2v1h-2zM1156 575h2v1h-2zM1190 549h3v1h-3zM1190 552h3v1h-3zM1265 565h1v3h-1zM1270 565h1v3h-1zM1140 552h1v2h-1zM1143 552h1v2h-1zM1206 514h1v4h-1zM1210 514h1v4h-1zM1284 536h4v1h-4zM1284 541h4v1h-4zM1271 501h1v2h-1zM1276 501h1v2h-1zM1192 520h1v4h-1zM1195 520h1v4h-1zM1214 513h1v2h-1zM1216 513h1v2h-1zM1226 577h1v4h-1zM1229 577h1v4h-1zM1203 564h1v3h-1zM1207 564h1v3h-1zM1261 541h3v1h-3zM1261 544h3v1h-3zM1173 535h1v2h-1zM1178 535h1v2h-1zM1212 495h1v4h-1zM1215 495h1v4h-1zM1182 492h1v3h-1zM1184 492h1v3h-1zM1293 491h1v4h-1zM1296 491h1v4h-1zM1266 580h2v1h-2zM1266 585h2v1h-2zM1201 519h2v1h-2zM1201 521h2v1h-2zM1141 547h1v3h-1zM1145 547h1v3h-1zM1278 595h1v4h-1zM1281 595h1v4h-1zM1232 501h4v1h-4zM1232 505h4v1h-4zM1230 516h3v1h-3zM1230 519h3v1h-3zM1153 556h1v3h-1zM1157 556h1v3h-1zM1246 575h2v1h-2zM1246 577h2v1h-2zM1215 590h1v2h-1zM1218 590h1v2h-1zM1148 561h1v2h-1zM1153 561h1v2h-1zM1200 586h2v1h-2zM1200 589h2v1h-2zM1182 490h2v1h-2zM1182 493h2v1h-2zM1284 533h1v3h-1zM1289 533h1v3h-1zM1146 570h1v3h-1zM1148 570h1v3h-1zM1247 570h2v1h-2zM1247 572h2v1h-2zM1257 573h1v3h-1zM1261 573h1v3h-1zM1266 502h1v3h-1zM1269 502h1v3h-1zM1144 566h1v2h-1zM1147 566h1v2h-1zM1188 523h1v3h-1zM1190 523h1v3h-1zM1168 555h1v2h-1zM1171 555h1v2h-1zM1238 519h4v1h-4zM1238 523h4v1h-4zM1255 590h1v3h-1zM1257 590h1v3h-1zM1183 524h2v1h-2zM1183 526h2v1h-2zM1220 557h3v1h-3zM1220 561h3v1h-3zM1227 504h1v2h-1zM1230 504h1v2h-1zM1146 507h2v1h-2zM1146 509h2v1h-2zM1243 555h1v3h-1zM1245 555h1v3h-1zM1175 484h1v2h-1zM1178 484h1v2h-1zM1297 495h1v3h-1zM1299 495h1v3h-1zM1272 499h2v1h-2zM1272 501h2v1h-2zM1284 553h2v1h-2zM1284 555h2v1h-2zM1169 490h1v3h-1zM1171 490h1v3h-1zM1162 573h3v1h-3zM1162 576h3v1h-3zM1195 507h1v2h-1zM1200 507h1v2h-1zM1286 503h1v3h-1zM1288 503h1v3h-1zM1147 498h3v1h-3zM1147 501h3v1h-3zM1288 589h1v2h-1zM1291 589h1v2h-1zM1290 505h3v1h-3zM1290 510h3v1h-3zM1215 537h1v3h-1zM1217 537h1v3h-1zM1224 535h3v1h-3zM1224 538h3v1h-3zM1179 571h1v4h-1zM1184 571h1v4h-1zM1156 540h3v1h-3zM1156 544h3v1h-3zM1270 592h1v3h-1zM1273 592h1v3h-1zM1235 500h4v1h-4zM1235 505h4v1h-4zM1197 539h1v2h-1zM1200 539h1v2h-1zM1231 578h1v3h-1zM1233 578h1v3h-1zM1269 569h3v1h-3zM1269 572h3v1h-3zM1187 494h1v2h-1zM1192 494h1v2h-1zM1275 572h3v1h-3zM1275 575h3v1h-3zM1144 576h1v4h-1zM1149 576h1v4h-1zM1175 510h1v3h-1zM1178 510h1v3h-1zM1278 549h3v1h-3zM1278 552h3v1h-3zM1269 593h1v3h-1zM1273 593h1v3h-1zM1281 564h1v3h-1zM1283 564h1v3h-1zM1246 539h1v2h-1zM1250 539h1v2h-1zM1247 570h1v3h-1zM1249 570h1v3h-1zM1200 565h1v2h-1zM1203 565h1v2h-1zM1210 490h3v1h-3zM1210 493h3v1h-3zM1206 592h1v2h-1zM1208 592h1v2h-1zM1161 555h4v1h-4zM1161 560h4v1h-4zM1246 593h3v1h-3zM1246 596h3v1h-3zM1154 557h3v1h-3zM1154 561h3v1h-3zM1289 544h3v1h-3zM1289 547h3v1h-3zM1199 531h1v2h-1zM1204 531h1v2h-1zM1188 594h1v2h-1zM1190 594h1v2h-1zM1158 546h1v2h-1zM1161 546h1v2h-1zM1227 489h3v1h-3zM1227 492h3v1h-3zM1281 532h1v2h-1zM1283 532h1v2h-1zM1184 517h1v3h-1zM1187 517h1v3h-1zM1247 495h1v3h-1zM1249 495h1v3h-1zM1243 547h2v1h-2zM1243 551h2v1h-2zM1253 567h1v3h-1zM1255 567h1v3h-1zM1166 553h3v1h-3zM1166 556h3v1h-3zM1168 487h3v1h-3zM1168 491h3v1h-3zM1188 529h3v1h-3zM1188 533h3v1h-3zM1228 507h3v1h-3zM1228 512h3v1h-3zM1186 560h2v1h-2zM1186 563h2v1h-2zM1271 531h1v2h-1zM1275 531h1v2h-1zM1146 597h1v2h-1zM1149 597h1v2h-1zM1205 492h1v2h-1zM1209 492h1v2h-1zM1248 526h1v3h-1zM1250 526h1v3h-1zM1159 559h1v3h-1zM1163 559h1v3h-1zM1197 487h1v2h-1zM1200 487h1v2h-1zM1157 564h2v1h-2zM1157 567h2v1h-2zM1275 549h2v1h-2zM1275 551h2v1h-2zM1219 546h2v1h-2zM1219 551h2v1h-2zM1168 510h1v3h-1zM1171 510h1v3h-1zM1289 591h1v2h-1zM1292 591h1v2h-1zM1255 577h1v2h-1zM1260 577h1v2h-1zM1266 533h1v4h-1zM1269 533h1v4h-1zM1226 573h2v1h-2zM1226 576h2v1h-2zM1288 562h1v3h-1zM1290 562h1v3h-1zM1221 423h1v3h-1zM1225 423h1v3h-1zM1154 439h2v1h-2zM1154 443h2v1h-2zM1228 429h2v1h-2zM1228 434h2v1h-2zM1219 452h1v3h-1zM1222 452h1v3h-1zM1149 447h1v2h-1zM1152 447h1v2h-1zM1208 431h1v2h-1zM1212 431h1v2h-1zM1227 430h2v1h-2zM1227 435h2v1h-2zM1221 451h1v3h-1zM1224 451h1v3h-1zM1167 411h2v1h-2zM1167 414h2v1h-2zM1210 410h2v1h-2zM1210 412h2v1h-2zM1147 457h1v2h-1zM1151 457h1v2h-1zM1151 418h2v1h-2zM1151 420h2v1h-2zM1208 446h3v1h-3zM1208 451h3v1h-3zM1194 426h3v1h-3zM1194 429h3v1h-3zM1224 421h1v3h-1zM1229 421h1v3h-1zM1197 434h1v4h-1zM1201 434h1v4h-1zM1182 416h2v1h-2zM1182 421h2v1h-2zM1198 425h2v1h-2zM1198 427h2v1h-2zM1198 438h1v3h-1zM1203 438h1v3h-1zM1209 452h1v3h-1zM1214 452h1v3h-1zM1191 432h1v2h-1zM1196 432h1v2h-1zM1204 400h1v2h-1zM1208 400h1v2h-1zM1184 409h2v1h-2zM1184 411h2v1h-2zM1171 411h2v1h-2zM1171 413h2v1h-2zM1225 440h2v1h-2zM1225 442h2v1h-2zM1236 433h1v4h-1zM1239 433h1v4h-1zM1241 409h2v1h-2zM1241 412h2v1h-2zM1190 420h3v1h-3zM1190 423h3v1h-3zM1230 435h1v3h-1zM1234 435h1v3h-1zM1136 425h3v1h-3zM1136 430h3v1h-3zM1235 436h1v3h-1zM1238 436h1v3h-1zM1206 401h1v3h-1zM1208 401h1v3h-1zM1211 402h1v3h-1zM1214 402h1v3h-1zM1151 419h3v1h-3zM1151 422h3v1h-3zM1233 428h2v1h-2zM1233 430h2v1h-2zM1214 446h3v1h-3zM1214 450h3v1h-3zM1208 445h1v4h-1zM1211 445h1v4h-1zM1143 442h1v3h-1zM1146 442h1v3h-1zM1222 447h1v2h-1zM1226 447h1v2h-1zM1204 427h1v3h-1zM1209 427h1v3h-1zM1189 405h2v1h-2zM1189 407h2v1h-2zM1234 448h2v1h-2zM1234 451h2v1h-2zM1200 450h1v2h-1zM1205 450h1v2h-1zM1227 428h1v3h-1zM1230 428h1v3h-1zM1161 436h1v3h-1zM1163 436h1v3h-1zM1158 417h1v2h-1zM1161 417h1v2h-1zM1171 450h3v1h-3zM1171 453h3v1h-3zM1183 441h3v1h-3zM1183 444h3v1h-3zM1234 456h1v3h-1zM1239 456h1v3h-1zM1188 433h2v1h-2zM1188 437h2v1h-2zM1213 437h2v1h-2zM1213 439h2v1h-2zM1090 590h3v1h-3zM1090 593h3v1h-3zM976 596h3v1h-3zM976 599h3v1h-3zM955 600h3v1h-3zM955 604h3v1h-3zM957 634h1v2h-1zM960 634h1v2h-1zM903 606h2v1h-2zM903 608h2v1h-2zM1051 583h1v3h-1zM1054 583h1v3h-1zM878 596h3v1h-3zM878 599h3v1h-3zM873 607h1v4h-1zM876 607h1v4h-1zM929 571h3v1h-3zM929 576h3v1h-3zM965 587h1v3h-1zM967 587h1v3h-1zM951 641h1v2h-1zM956 641h1v2h-1zM863 624h3v1h-3zM863 627h3v1h-3zM973 619h1v2h-1zM976 619h1v2h-1zM879 607h1v3h-1zM881 607h1v3h-1zM889 616h1v2h-1zM892 616h1v2h-1zM913 582h2v1h-2zM913 584h2v1h-2zM916 598h1v3h-1zM919 598h1v3h-1zM954 577h1v2h-1zM956 577h1v2h-1zM1011 610h1v2h-1zM1013 610h1v2h-1zM1076 624h1v2h-1zM1081 624h1v2h-1zM1020 605h2v1h-2zM1020 610h2v1h-2zM1048 596h1v3h-1zM1051 596h1v3h-1zM1067 632h2v1h-2zM1067 635h2v1h-2zM993 580h2v1h-2zM993 583h2v1h-2zM1042 586h1v2h-1zM1045 586h1v2h-1zM1032 571h2v1h-2zM1032 574h2v1h-2zM892 582h2v1h-2zM892 586h2v1h-2zM985 615h1v2h-1zM987 615h1v2h-1zM967 634h1v3h-1zM969 634h1v3h-1zM988 608h1v4h-1zM991 608h1v4h-1zM986 572h1v4h-1zM989 572h1v4h-1zM1031 582h1v4h-1zM1034 582h1v4h-1zM962 578h3v1h-3zM962 581h3v1h-3zM1074 591h4v1h-4zM1074 596h4v1h-4zM1068 603h1v3h-1zM1070 603h1v3h-1zM952 601h1v2h-1zM954 601h1v2h-1zM1092 614h1v2h-1zM1097 614h1v2h-1zM989 602h1v2h-1zM991 602h1v2h-1zM980 627h2v1h-2zM980 629h2v1h-2zM1032 599h1v2h-1zM1035 599h1v2h-1zM878 613h1v3h-1zM880 613h1v3h-1zM1029 597h1v4h-1zM1032 597h1v4h-1zM988 596h3v1h-3zM988 599h3v1h-3zM1065 608h1v2h-1zM1068 608h1v2h-1zM1012 595h1v3h-1zM1014 595h1v3h-1zM1070 610h1v3h-1zM1075 610h1v3h-1zM904 575h1v3h-1zM906 575h1v3h-1zM1051 622h3v1h-3zM1051 626h3v1h-3zM1037 575h1v2h-1zM1039 575h1v2h-1zM1085 628h2v1h-2zM1085 633h2v1h-2zM1089 594h3v1h-3zM1089 598h3v1h-3zM957 594h1v3h-1zM960 594h1v3h-1zM995 592h1v3h-1zM998 592h1v3h-1zM1035 627h1v4h-1zM1038 627h1v4h-1zM909 605h2v1h-2zM909 609h2v1h-2zM969 622h1v3h-1zM971 622h1v3h-1zM929 627h1v3h-1zM932 627h1v3h-1zM968 572h3v1h-3zM968 575h3v1h-3zM972 626h1v3h-1zM974 626h1v3h-1zM930 579h1v3h-1zM933 579h1v3h-1zM926 598h1v3h-1zM929 598h1v3h-1zM1011 590h3v1h-3zM1011 593h3v1h-3zM923 592h1v2h-1zM925 592h1v2h-1zM959 611h3v1h-3zM959 614h3v1h-3zM931 627h1v3h-1zM933 627h1v3h-1zM938 576h1v3h-1zM943 576h1v3h-1zM873 621h1v2h-1zM877 621h1v2h-1zM917 639h1v2h-1zM920 639h1v2h-1zM1078 592h1v2h-1zM1081 592h1v2h-1zM945 621h1v2h-1zM950 621h1v2h-1zM974 593h1v3h-1zM977 593h1v3h-1zM969 614h3v1h-3zM969 617h3v1h-3zM933 615h1v3h-1zM936 615h1v3h-1zM1085 617h1v2h-1zM1087 617h1v2h-1zM991 570h2v1h-2zM991 573h2v1h-2zM1054 643h1v2h-1zM1056 643h1v2h-1zM927 638h1v2h-1zM929 638h1v2h-1zM869 634h1v2h-1zM873 634h1v2h-1zM987 586h1v3h-1zM989 586h1v3h-1zM989 630h1v3h-1zM991 630h1v3h-1zM947 586h1v2h-1zM949 586h1v2h-1zM968 604h2v1h-2zM968 606h2v1h-2zM875 575h1v3h-1zM879 575h1v3h-1zM974 610h1v2h-1zM976 610h1v2h-1zM980 606h1v4h-1zM983 606h1v4h-1zM1006 609h1v3h-1zM1008 609h1v3h-1zM1000 630h1v2h-1zM1003 630h1v2h-1zM1018 626h1v3h-1zM1023 626h1v3h-1zM936 607h1v3h-1zM938 607h1v3h-1zM937 582h1v2h-1zM940 582h1v2h-1zM1050 629h1v3h-1zM1052 629h1v3h-1zM962 573h1v2h-1zM965 573h1v2h-1zM1022 605h2v1h-2zM1022 609h2v1h-2zM1029 608h1v3h-1zM1032 608h1v3h-1zM1008 638h2v1h-2zM1008 643h2v1h-2zM942 629h4v1h-4zM942 634h4v1h-4zM1053 617h2v1h-2zM1053 619h2v1h-2zM941 570h1v2h-1zM945 570h1v2h-1zM972 572h1v3h-1zM974 572h1v3h-1zM1014 628h1v3h-1zM1018 628h1v3h-1zM873 623h3v1h-3zM873 627h3v1h-3zM895 604h1v2h-1zM897 604h1v2h-1zM1084 629h3v1h-3zM1084 633h3v1h-3zM1007 579h1v2h-1zM1012 579h1v2h-1zM1092 594h3v1h-3zM1092 597h3v1h-3zM1070 604h1v2h-1zM1075 604h1v2h-1zM916 626h1v2h-1zM919 626h1v2h-1zM1070 633h1v4h-1zM1074 633h1v4h-1zM1090 626h3v1h-3zM1090 629h3v1h-3zM880 617h1v2h-1zM882 617h1v2h-1zM930 615h2v1h-2zM930 619h2v1h-2zM972 614h1v3h-1zM974 614h1v3h-1zM966 602h1v3h-1zM971 602h1v3h-1zM904 608h1v2h-1zM907 608h1v2h-1zM1044 583h3v1h-3zM1044 586h3v1h-3zM1033 589h3v1h-3zM1033 594h3v1h-3zM983 633h1v3h-1zM985 633h1v3h-1zM926 630h3v1h-3zM926 633h3v1h-3zM871 608h1v2h-1zM875 608h1v2h-1zM921 599h2v1h-2zM921 602h2v1h-2zM1081 591h1v2h-1zM1086 591h1v2h-1zM949 641h1v3h-1zM952 641h1v3h-1zM1021 638h1v2h-1zM1026 638h1v2h-1zM901 584h2v1h-2zM901 587h2v1h-2zM1078 620h3v1h-3zM1078 623h3v1h-3zM932 576h3v1h-3zM932 580h3v1h-3zM931 582h1v2h-1zM934 582h1v2h-1zM913 592h1v4h-1zM918 592h1v4h-1zM895 639h1v4h-1zM899 639h1v4h-1zM1059 580h1v3h-1zM1063 580h1v3h-1zM873 594h3v1h-3zM873 598h3v1h-3zM975 610h1v3h-1zM977 610h1v3h-1zM1023 624h4v1h-4zM1023 628h4v1h-4zM1083 594h3v1h-3zM1083 599h3v1h-3zM939 615h1v4h-1zM943 615h1v4h-1zM1071 581h1v3h-1zM1073 581h1v3h-1zM883 628h1v3h-1zM886 628h1v3h-1zM869 615h3v1h-3zM869 619h3v1h-3zM945 614h3v1h-3zM945 617h3v1h-3zM867 571h1v2h-1zM871 571h1v2h-1zM889 616h2v1h-2zM889 618h2v1h-2zM1042 579h2v1h-2zM1042 582h2v1h-2zM878 622h1v2h-1zM882 622h1v2h-1zM1072 608h3v1h-3zM1072 612h3v1h-3zM972 633h4v1h-4zM972 638h4v1h-4zM887 625h1v2h-1zM890 625h1v2h-1zM1037 575h1v3h-1zM1039 575h1v3h-1zM1096 640h2v1h-2zM1096 642h2v1h-2zM923 611h1v2h-1zM928 611h1v2h-1zM1071 584h1v2h-1zM1076 584h1v2h-1zM1057 623h1v2h-1zM1060 623h1v2h-1zM1048 617h1v3h-1zM1051 617h1v3h-1zM1033 576h2v1h-2zM1033 580h2v1h-2zM981 635h1v2h-1zM985 635h1v2h-1zM1078 620h1v3h-1zM1081 620h1v3h-1zM953 627h1v2h-1zM958 627h1v2h-1zM1075 637h3v1h-3zM1075 642h3v1h-3zM1009 641h3v1h-3zM1009 644h3v1h-3zM986 612h1v3h-1zM989 612h1v3h-1zM913 586h3v1h-3zM913 589h3v1h-3zM879 571h1v3h-1zM881 571h1v3h-1zM1068 623h1v2h-1zM1071 623h1v2h-1zM951 634h1v2h-1zM955 634h1v2h-1zM941 593h1v4h-1zM945 593h1v4h-1zM1040 627h1v4h-1zM1043 627h1v4h-1zM1057 577h1v2h-1zM1060 577h1v2h-1zM900 631h1v3h-1zM902 631h1v3h-1zM1010 603h2v1h-2zM1010 608h2v1h-2zM1042 613h1v3h-1zM1044 613h1v3h-1zM1084 621h1v3h-1zM1086 621h1v3h-1zM1088 627h1v3h-1zM1090 627h1v3h-1zM902 573h2v1h-2zM902 576h2v1h-2zM1001 596h2v1h-2zM1001 599h2v1h-2zM999 614h1v2h-1zM1003 614h1v2h-1zM886 609h1v4h-1zM889 609h1v4h-1zM957 600h1v3h-1zM959 600h1v3h-1zM983 622h2v1h-2zM983 627h2v1h-2zM973 593h2v1h-2zM973 595h2v1h-2zM1093 639h1v3h-1zM1095 639h1v3h-1zM936 594h1v2h-1zM940 594h1v2h-1zM1030 595h3v1h-3zM1030 598h3v1h-3zM966 578h3v1h-3zM966 581h3v1h-3zM1025 641h1v2h-1zM1027 641h1v2h-1zM841 612h3v1h-3zM841 615h3v1h-3zM755 612h3v1h-3zM755 616h3v1h-3zM859 613h1v3h-1zM861 613h1v3h-1zM802 632h1v2h-1zM805 632h1v2h-1zM798 600h2v1h-2zM798 603h2v1h-2zM875 610h2v1h-2zM875 613h2v1h-2zM876 617h1v2h-1zM878 617h1v2h-1zM797 613h1v3h-1zM802 613h1v3h-1zM849 601h3v1h-3zM849 606h3v1h-3zM869 625h1v2h-1zM871 625h1v2h-1zM875 621h3v1h-3zM875 626h3v1h-3zM770 628h1v2h-1zM775 628h1v2h-1zM852 627h3v1h-3zM852 632h3v1h-3zM803 625h1v3h-1zM806 625h1v3h-1zM848 604h2v1h-2zM848 606h2v1h-2zM761 606h1v2h-1zM763 606h1v2h-1zM815 617h2v1h-2zM815 621h2v1h-2zM870 636h1v2h-1zM872 636h1v2h-1zM750 615h3v1h-3zM750 618h3v1h-3zM867 609h2v1h-2zM867 612h2v1h-2zM800 606h1v2h-1zM802 606h1v2h-1zM838 605h1v4h-1zM841 605h1v4h-1zM763 604h3v1h-3zM763 609h3v1h-3zM845 620h2v1h-2zM845 625h2v1h-2zM865 617h1v3h-1zM868 617h1v3h-1zM849 616h2v1h-2zM849 619h2v1h-2zM867 611h3v1h-3zM867 614h3v1h-3zM754 629h1v2h-1zM757 629h1v2h-1zM781 620h1v2h-1zM784 620h1v2h-1zM779 623h3v1h-3zM779 627h3v1h-3zM776 607h1v2h-1zM780 607h1v2h-1zM849 623h1v3h-1zM851 623h1v3h-1zM874 630h1v2h-1zM878 630h1v2h-1zM871 610h1v3h-1zM874 610h1v3h-1zM838 628h2v1h-2zM838 631h2v1h-2zM755 618h1v3h-1zM759 618h1v3h-1zM754 609h2v1h-2zM754 612h2v1h-2zM807 605h2v1h-2zM807 607h2v1h-2zM764 606h2v1h-2zM764 610h2v1h-2zM807 619h1v2h-1zM812 619h1v2h-1zM761 617h2v1h-2zM761 622h2v1h-2zM867 629h1v2h-1zM869 629h1v2h-1zM816 622h1v3h-1zM818 622h1v3h-1zM872 610h1v4h-1zM875 610h1v4h-1zM848 605h3v1h-3zM848 608h3v1h-3zM761 608h1v3h-1zM764 608h1v3h-1zM831 607h2v1h-2zM831 611h2v1h-2zM839 616h3v1h-3zM839 620h3v1h-3zM872 624h1v3h-1zM874 624h1v3h-1zM818 619h1v2h-1zM822 619h1v2h-1zM776 619h1v4h-1zM779 619h1v4h-1zM867 604h1v3h-1zM869 604h1v3h-1zM830 630h3v1h-3zM830 633h3v1h-3zM791 613h2v1h-2zM791 618h2v1h-2zM862 634h3v1h-3zM862 637h3v1h-3zM835 601h1v2h-1zM837 601h1v2h-1zM805 604h2v1h-2zM805 609h2v1h-2zM802 634h2v1h-2zM802 639h2v1h-2zM809 601h1v2h-1zM814 601h1v2h-1zM805 630h1v2h-1zM807 630h1v2h-1zM817 614h1v3h-1zM819 614h1v3h-1zM769 609h2v1h-2zM769 613h2v1h-2zM760 612h1v4h-1zM763 612h1v4h-1zM796 603h1v2h-1zM798 603h1v2h-1zM845 619h1v3h-1zM848 619h1v3h-1zM1233 375h1v4h-1zM1237 375h1v4h-1zM1315 313h1v2h-1zM1318 313h1v2h-1zM1306 350h1v4h-1zM1309 350h1v4h-1zM1242 326h1v4h-1zM1245 326h1v4h-1zM1293 318h1v3h-1zM1295 318h1v3h-1zM1298 341h3v1h-3zM1298 346h3v1h-3zM1238 365h2v1h-2zM1238 367h2v1h-2zM1306 362h1v4h-1zM1311 362h1v4h-1zM1273 318h3v1h-3zM1273 321h3v1h-3zM1249 334h3v1h-3zM1249 337h3v1h-3zM1266 360h1v3h-1zM1270 360h1v3h-1zM1244 333h1v3h-1zM1246 333h1v3h-1zM1235 327h1v4h-1zM1238 327h1v4h-1zM1262 302h1v3h-1zM1264 302h1v3h-1zM1301 360h1v2h-1zM1306 360h1v2h-1zM1298 357h1v2h-1zM1300 357h1v2h-1zM1251 373h1v3h-1zM1256 373h1v3h-1zM1289 354h1v2h-1zM1293 354h1v2h-1zM1295 324h1v2h-1zM1300 324h1v2h-1zM1273 328h1v3h-1zM1275 328h1v3h-1zM1272 374h1v2h-1zM1275 374h1v2h-1zM1244 305h1v2h-1zM1246 305h1v2h-1zM1237 361h2v1h-2zM1237 366h2v1h-2zM1258 367h3v1h-3zM1258 370h3v1h-3zM1279 347h1v2h-1zM1284 347h1v2h-1zM1307 325h1v2h-1zM1310 325h1v2h-1zM1231 314h2v1h-2zM1231 317h2v1h-2zM1263 306h2v1h-2zM1263 311h2v1h-2zM1242 339h1v3h-1zM1247 339h1v3h-1zM1271 334h1v4h-1zM1275 334h1v4h-1zM1244 357h2v1h-2zM1244 360h2v1h-2zM1273 341h3v1h-3zM1273 344h3v1h-3zM1287 339h1v3h-1zM1291 339h1v3h-1zM1244 324h1v3h-1zM1247 324h1v3h-1zM1242 302h1v3h-1zM1244 302h1v3h-1zM1269 348h3v1h-3zM1269 353h3v1h-3zM1239 312h2v1h-2zM1239 314h2v1h-2zM1304 336h3v1h-3zM1304 341h3v1h-3zM1264 339h2v1h-2zM1264 343h2v1h-2zM1230 371h1v3h-1zM1233 371h1v3h-1zM1244 329h1v2h-1zM1248 329h1v2h-1zM1309 330h1v3h-1zM1311 330h1v3h-1zM1307 300h3v1h-3zM1307 305h3v1h-3zM1241 605h2v1h-2zM1241 608h2v1h-2zM1199 618h2v1h-2zM1199 623h2v1h-2zM1165 647h1v2h-1zM1167 647h1v2h-1zM1152 617h1v4h-1zM1155 617h1v4h-1zM1278 621h3v1h-3zM1278 624h3v1h-3zM1281 636h1v3h-1zM1283 636h1v3h-1zM1277 638h1v3h-1zM1279 638h1v3h-1zM1296 631h2v1h-2zM1296 634h2v1h-2zM1208 645h4v1h-4zM1208 649h4v1h-4zM1266 641h3v1h-3zM1266 644h3v1h-3zM1161 635h3v1h-3zM1161 638h3v1h-3zM1165 637h1v4h-1zM1168 637h1v4h-1zM1155 639h1v3h-1zM1158 639h1v3h-1zM1170 624h1v3h-1zM1174 624h1v3h-1zM1249 611h1v4h-1zM1252 611h1v4h-1zM1256 629h1v4h-1zM1259 629h1v4h-1zM1167 619h3v1h-3zM1167 622h3v1h-3zM1245 629h1v3h-1zM1247 629h1v3h-1zM1261 626h1v4h-1zM1265 626h1v4h-1zM1177 600h1v3h-1zM1179 600h1v3h-1zM1180 641h2v1h-2zM1180 645h2v1h-2zM1295 625h3v1h-3zM1295 629h3v1h-3zM1137 634h1v2h-1zM1139 634h1v2h-1zM1248 601h1v2h-1zM1253 601h1v2h-1zM1231 617h1v3h-1zM1233 617h1v3h-1zM1206 637h2v1h-2zM1206 640h2v1h-2zM1268 618h1v2h-1zM1270 618h1v2h-1zM1193 635h2v1h-2zM1193 640h2v1h-2zM1253 604h3v1h-3zM1253 609h3v1h-3zM1142 607h1v4h-1zM1146 607h1v4h-1zM1271 641h1v3h-1zM1274 641h1v3h-1zM1184 618h2v1h-2zM1184 621h2v1h-2zM1211 631h4v1h-4zM1211 635h4v1h-4zM1204 607h2v1h-2zM1204 610h2v1h-2zM1240 629h3v1h-3zM1240 632h3v1h-3zM1196 625h3v1h-3zM1196 628h3v1h-3zM1176 606h1v3h-1zM1179 606h1v3h-1zM1144 609h1v3h-1zM1147 609h1v3h-1zM1148 642h1v4h-1zM1151 642h1v4h-1zM1146 622h1v2h-1zM1151 622h1v2h-1zM1231 609h2v1h-2zM1231 612h2v1h-2zM1272 630h3v1h-3zM1272 635h3v1h-3zM1242 602h1v3h-1zM1245 602h1v3h-1zM1211 618h3v1h-3zM1211 621h3v1h-3zM1185 645h1v4h-1zM1188 645h1v4h-1zM1208 630h2v1h-2zM1208 633h2v1h-2zM1145 610h1v4h-1zM1148 610h1v4h-1zM1150 627h1v2h-1zM1152 627h1v2h-1zM1178 634h1v2h-1zM1180 634h1v2h-1zM1238 620h1v3h-1zM1240 620h1v3h-1zM1182 634h1v2h-1zM1186 634h1v2h-1zM1232 621h1v3h-1zM1234 621h1v3h-1zM1149 640h3v1h-3zM1149 644h3v1h-3zM1231 641h2v1h-2zM1231 644h2v1h-2zM1268 637h3v1h-3zM1268 640h3v1h-3zM1230 610h2v1h-2zM1230 612h2v1h-2zM1254 606h2v1h-2zM1254 611h2v1h-2zM1138 634h3v1h-3zM1138 637h3v1h-3zM1223 604h4v1h-4zM1223 609h4v1h-4zM1208 604h1v3h-1zM1210 604h1v3h-1zM1140 629h1v3h-1zM1142 629h1v3h-1zM1259 606h1v3h-1zM1261 606h1v3h-1zM1283 628h1v2h-1zM1288 628h1v2h-1zM1167 621h2v1h-2zM1167 624h2v1h-2zM1280 633h1v3h-1zM1283 633h1v3h-1zM1240 644h3v1h-3zM1240 649h3v1h-3zM1240 607h1v2h-1zM1243 607h1v2h-1zM1177 641h1v3h-1zM1179 641h1v3h-1zM1190 610h1v3h-1zM1195 610h1v3h-1zM1282 613h1v3h-1zM1284 613h1v3h-1zM1170 626h1v2h-1zM1172 626h1v2h-1zM1190 638h2v1h-2zM1190 642h2v1h-2zM1198 623h1v4h-1zM1201 623h1v4h-1zM1227 627h1v3h-1zM1230 627h1v3h-1zM1296 620h1v3h-1zM1298 620h1v3h-1zM1250 606h1v2h-1zM1253 606h1v2h-1zM1222 644h1v3h-1zM1226 644h1v3h-1zM1163 623h1v3h-1zM1165 623h1v3h-1zM1236 644h3v1h-3zM1236 649h3v1h-3zM1291 632h1v4h-1zM1296 632h1v4h-1zM1245 600h1v3h-1zM1250 600h1v3h-1zM1203 621h2v1h-2zM1203 624h2v1h-2zM1285 633h1v3h-1zM1289 633h1v3h-1zM1216 622h2v1h-2zM1216 627h2v1h-2zM1138 613h1v3h-1zM1140 613h1v3h-1zM1139 601h1v4h-1zM1143 601h1v4h-1zM912 647h1v2h-1zM915 647h1v2h-1zM915 653h3v1h-3zM915 656h3v1h-3zM937 692h2v1h-2zM937 696h2v1h-2zM906 675h3v1h-3zM906 678h3v1h-3zM940 695h3v1h-3zM940 698h3v1h-3zM920 667h1v4h-1zM923 667h1v4h-1zM926 644h3v1h-3zM926 647h3v1h-3zM922 695h1v2h-1zM926 695h1v2h-1zM944 675h4v1h-4zM944 680h4v1h-4zM889 647h2v1h-2zM889 650h2v1h-2zM898 662h2v1h-2zM898 664h2v1h-2zM941 665h3v1h-3zM941 668h3v1h-3zM916 651h2v1h-2zM916 653h2v1h-2zM885 665h1v4h-1zM888 665h1v4h-1zM887 677h2v1h-2zM887 680h2v1h-2zM882 661h1v3h-1zM885 661h1v3h-1zM945 676h1v3h-1zM948 676h1v3h-1zM903 642h2v1h-2zM903 645h2v1h-2zM923 689h1v4h-1zM926 689h1v4h-1zM946 652h4v1h-4zM946 657h4v1h-4zM929 680h1v2h-1zM932 680h1v2h-1zM933 690h1v3h-1zM936 690h1v3h-1zM888 664h1v2h-1zM892 664h1v2h-1zM941 680h2v1h-2zM941 685h2v1h-2zM919 686h1v2h-1zM922 686h1v2h-1zM896 666h1v3h-1zM899 666h1v3h-1zM929 661h1v4h-1zM933 661h1v4h-1zM890 660h1v3h-1zM893 660h1v3h-1zM937 641h1v3h-1zM939 641h1v3h-1zM932 646h3v1h-3zM932 649h3v1h-3zM882 674h2v1h-2zM882 677h2v1h-2zM901 689h1v2h-1zM906 689h1v2h-1zM888 649h2v1h-2zM888 651h2v1h-2zM912 644h1v3h-1zM916 644h1v3h-1zM927 695h1v3h-1zM929 695h1v3h-1zM914 649h1v4h-1zM917 649h1v4h-1zM927 669h1v3h-1zM930 669h1v3h-1zM946 641h1v4h-1zM949 641h1v4h-1z"/></g><rect x="956" y="464" width="19" height="9" fill="#b19f62"/><rect x="956" y="464" width="3.8" height="9" fill="#d7d3c5"/><rect x="971.2" y="464" width="3.8" height="9" fill="#d7d3c5"/><rect x="956" y="479" width="19" height="9" fill="#b19f62"/><rect x="956" y="479" width="3.8" height="9" fill="#d7d3c5"/><rect x="971.2" y="479" width="3.8" height="9" fill="#d7d3c5"/><rect x="956" y="492" width="19" height="9" fill="#b19f62"/><rect x="956" y="492" width="3.8" height="9" fill="#d7d3c5"/><rect x="971.2" y="492" width="3.8" height="9" fill="#d7d3c5"/><rect x="956" y="505" width="19" height="9" fill="#b19f62"/><rect x="956" y="505" width="3.8" height="9" fill="#d7d3c5"/><rect x="971.2" y="505" width="3.8" height="9" fill="#d7d3c5"/><rect x="956" y="519" width="19" height="9" fill="#b19f62"/><rect x="956" y="519" width="3.8" height="9" fill="#d7d3c5"/><rect x="971.2" y="519" width="3.8" height="9" fill="#d7d3c5"/><rect x="981" y="461" width="9" height="19" fill="#b19f62"/><rect x="981" y="461" width="9" height="4.2" fill="#d7d3c5"/><rect x="981" y="475.8" width="9" height="4.2" fill="#d7d3c5"/><rect x="995" y="461" width="9" height="19" fill="#b19f62"/><rect x="995" y="461" width="9" height="4.2" fill="#d7d3c5"/><rect x="995" y="475.8" width="9" height="4.2" fill="#d7d3c5"/><rect x="981" y="485" width="9" height="19" fill="#b19f62"/><rect x="981" y="485" width="9" height="4.2" fill="#d7d3c5"/><rect x="981" y="499.8" width="9" height="4.2" fill="#d7d3c5"/><rect x="995" y="485" width="9" height="19" fill="#b19f62"/><rect x="995" y="485" width="9" height="4.2" fill="#d7d3c5"/><rect x="995" y="499.8" width="9" height="4.2" fill="#d7d3c5"/><rect x="1008" y="485" width="9" height="19" fill="#b19f62"/><rect x="1008" y="485" width="9" height="4.2" fill="#d7d3c5"/><rect x="1008" y="499.8" width="9" height="4.2" fill="#d7d3c5"/><rect x="988" y="512" width="9" height="18" fill="#b19f62"/><rect x="988" y="512" width="9" height="4.0" fill="#d7d3c5"/><rect x="988" y="526.0" width="9" height="4.0" fill="#d7d3c5"/><rect x="1001" y="512" width="9" height="18" fill="#b19f62"/><rect x="1001" y="512" width="9" height="4.0" fill="#d7d3c5"/><rect x="1001" y="526.0" width="9" height="4.0" fill="#d7d3c5"/><rect x="1025" y="461" width="9" height="19" fill="#b19f62"/><rect x="1025" y="461" width="9" height="4.2" fill="#d7d3c5"/><rect x="1025" y="475.8" width="9" height="4.2" fill="#d7d3c5"/><rect x="1034" y="486" width="9" height="19" fill="#b19f62"/><rect x="1034" y="486" width="9" height="4.2" fill="#d7d3c5"/><rect x="1034" y="500.8" width="9" height="4.2" fill="#d7d3c5"/><rect x="997" y="447" width="19" height="9" fill="#b19f62"/><rect x="997" y="447" width="3.8" height="9" fill="#d7d3c5"/><rect x="1012.2" y="447" width="3.8" height="9" fill="#d7d3c5"/><rect x="1060" y="455" width="19" height="9" fill="#b19f62"/><rect x="1060" y="455" width="3.8" height="9" fill="#d7d3c5"/><rect x="1075.2" y="455" width="3.8" height="9" fill="#d7d3c5"/><rect x="1095" y="454" width="19" height="9" fill="#b19f62"/><rect x="1095" y="454" width="3.8" height="9" fill="#d7d3c5"/><rect x="1110.2" y="454" width="3.8" height="9" fill="#d7d3c5"/><rect x="1095" y="467" width="19" height="9" fill="#b19f62"/><rect x="1095" y="467" width="3.8" height="9" fill="#d7d3c5"/><rect x="1110.2" y="467" width="3.8" height="9" fill="#d7d3c5"/><rect x="1095" y="481" width="19" height="9" fill="#b19f62"/><rect x="1095" y="481" width="3.8" height="9" fill="#d7d3c5"/><rect x="1110.2" y="481" width="3.8" height="9" fill="#d7d3c5"/><rect x="1093" y="496" width="19" height="9" fill="#b19f62"/><rect x="1093" y="496" width="3.8" height="9" fill="#d7d3c5"/><rect x="1108.2" y="496" width="3.8" height="9" fill="#d7d3c5"/><rect x="1040" y="525" width="19" height="9" fill="#b19f62"/><rect x="1040" y="525" width="3.8" height="9" fill="#d7d3c5"/><rect x="1055.2" y="525" width="3.8" height="9" fill="#d7d3c5"/><rect x="1040" y="539" width="19" height="9" fill="#b19f62"/><rect x="1040" y="539" width="3.8" height="9" fill="#d7d3c5"/><rect x="1055.2" y="539" width="3.8" height="9" fill="#d7d3c5"/><rect x="1002" y="552" width="19" height="9" fill="#b19f62"/><rect x="1002" y="552" width="3.8" height="9" fill="#d7d3c5"/><rect x="1017.2" y="552" width="3.8" height="9" fill="#d7d3c5"/><rect x="1002" y="566" width="19" height="9" fill="#b19f62"/><rect x="1002" y="566" width="3.8" height="9" fill="#d7d3c5"/><rect x="1017.2" y="566" width="3.8" height="9" fill="#d7d3c5"/><rect x="1000" y="579" width="19" height="10" fill="#b19f62"/><rect x="1000" y="579" width="3.8" height="10" fill="#d7d3c5"/><rect x="1015.2" y="579" width="3.8" height="10" fill="#d7d3c5"/><rect x="1000" y="592" width="19" height="10" fill="#b19f62"/><rect x="1000" y="592" width="3.8" height="10" fill="#d7d3c5"/><rect x="1015.2" y="592" width="3.8" height="10" fill="#d7d3c5"/><rect x="1000" y="606" width="19" height="10" fill="#b19f62"/><rect x="1000" y="606" width="3.8" height="10" fill="#d7d3c5"/><rect x="1015.2" y="606" width="3.8" height="10" fill="#d7d3c5"/><rect x="1000" y="621" width="10" height="20" fill="#b19f62"/><rect x="1000" y="621" width="10" height="4.4" fill="#d7d3c5"/><rect x="1000" y="636.6" width="10" height="4.4" fill="#d7d3c5"/><rect x="1014" y="621" width="10" height="20" fill="#b19f62"/><rect x="1014" y="621" width="10" height="4.4" fill="#d7d3c5"/><rect x="1014" y="636.6" width="10" height="4.4" fill="#d7d3c5"/><rect x="1038" y="580" width="20" height="10" fill="#b19f62"/><rect x="1038" y="580" width="4.0" height="10" fill="#d7d3c5"/><rect x="1054.0" y="580" width="4.0" height="10" fill="#d7d3c5"/><rect x="864" y="580" width="9" height="18" fill="#b19f62"/><rect x="864" y="580" width="9" height="4.0" fill="#d7d3c5"/><rect x="864" y="594.0" width="9" height="4.0" fill="#d7d3c5"/><rect x="843" y="555" width="9" height="18" fill="#b19f62"/><rect x="843" y="555" width="9" height="4.0" fill="#d7d3c5"/><rect x="843" y="569.0" width="9" height="4.0" fill="#d7d3c5"/><rect x="820" y="571" width="9" height="20" fill="#b19f62"/><rect x="820" y="571" width="9" height="4.4" fill="#d7d3c5"/><rect x="820" y="586.6" width="9" height="4.4" fill="#d7d3c5"/><rect x="818" y="596" width="19" height="9" fill="#b19f62"/><rect x="818" y="596" width="3.8" height="9" fill="#d7d3c5"/><rect x="833.2" y="596" width="3.8" height="9" fill="#d7d3c5"/><rect x="836" y="637" width="9" height="14" fill="#b19f62"/><rect x="836" y="637" width="9" height="3.1" fill="#d7d3c5"/><rect x="836" y="647.9" width="9" height="3.1" fill="#d7d3c5"/><rect x="700" y="603" width="9" height="14" fill="#b19f62"/><rect x="700" y="603" width="9" height="3.1" fill="#d7d3c5"/><rect x="700" y="613.9" width="9" height="3.1" fill="#d7d3c5"/><rect x="711" y="567" width="9" height="14" fill="#b19f62"/><rect x="711" y="567" width="9" height="3.1" fill="#d7d3c5"/><rect x="711" y="577.9" width="9" height="3.1" fill="#d7d3c5"/><rect x="923" y="616" width="10" height="9" fill="#b19f62"/><rect x="923" y="616" width="2.0" height="9" fill="#d7d3c5"/><rect x="931.0" y="616" width="2.0" height="9" fill="#d7d3c5"/><rect x="916" y="658" width="9" height="19" fill="#b19f62"/><rect x="916" y="658" width="9" height="4.2" fill="#d7d3c5"/><rect x="916" y="672.8" width="9" height="4.2" fill="#d7d3c5"/><rect x="1099" y="455" width="17" height="10" fill="#b19f62"/><rect x="1099" y="455" width="3.4" height="10" fill="#d7d3c5"/><rect x="1112.6" y="455" width="3.4" height="10" fill="#d7d3c5"/><rect x="1099" y="468" width="17" height="10" fill="#b19f62"/><rect x="1099" y="468" width="3.4" height="10" fill="#d7d3c5"/><rect x="1112.6" y="468" width="3.4" height="10" fill="#d7d3c5"/><rect x="1099" y="482" width="17" height="10" fill="#b19f62"/><rect x="1099" y="482" width="3.4" height="10" fill="#d7d3c5"/><rect x="1112.6" y="482" width="3.4" height="10" fill="#d7d3c5"/><rect x="1099" y="496" width="17" height="10" fill="#b19f62"/><rect x="1099" y="496" width="3.4" height="10" fill="#d7d3c5"/><rect x="1112.6" y="496" width="3.4" height="10" fill="#d7d3c5"/><rect x="1104" y="598" width="17" height="10" fill="#b19f62"/><rect x="1104" y="598" width="3.4" height="10" fill="#d7d3c5"/><rect x="1117.6" y="598" width="3.4" height="10" fill="#d7d3c5"/><rect x="770" y="520" width="18" height="9" fill="#b19f62"/><rect x="770" y="520" width="3.6" height="9" fill="#d7d3c5"/><rect x="784.4" y="520" width="3.6" height="9" fill="#d7d3c5"/><rect x="728" y="544" width="17" height="9" fill="#b19f62"/><rect x="728" y="544" width="3.4" height="9" fill="#d7d3c5"/><rect x="741.6" y="544" width="3.4" height="9" fill="#d7d3c5"/><rect x="897" y="521" width="9" height="18" fill="#b19f62"/><rect x="897" y="521" width="9" height="4.0" fill="#d7d3c5"/><rect x="897" y="535.0" width="9" height="4.0" fill="#d7d3c5"/><rect x="909" y="553" width="19" height="9" fill="#b19f62"/><rect x="909" y="553" width="3.8" height="9" fill="#d7d3c5"/><rect x="924.2" y="553" width="3.8" height="9" fill="#d7d3c5"/><rect x="937" y="592" width="9" height="18" fill="#b19f62"/><rect x="937" y="592" width="9" height="4.0" fill="#d7d3c5"/><rect x="937" y="606.0" width="9" height="4.0" fill="#d7d3c5"/><rect x="924" y="461" width="22" height="19" rx="1.5" fill="#9f9c92" stroke="#5a5852" stroke-width="0.6"/><rect x="930" y="482" width="22" height="18" rx="1.5" fill="#a19e96" stroke="#5a5852" stroke-width="0.6"/><rect x="930" y="504" width="22" height="18" rx="1.5" fill="#9e9b92" stroke="#5a5852" stroke-width="0.6"/><rect x="930" y="525" width="22" height="18" rx="1.5" fill="#a5a29a" stroke="#5a5852" stroke-width="0.6"/><rect x="971" y="570" width="23" height="17" rx="1.5" fill="#c9c9c9" stroke="#5a5852" stroke-width="0.6"/><rect x="971" y="589" width="23" height="18" rx="1.5" fill="#8f8b83" stroke="#5a5852" stroke-width="0.6"/><rect x="971" y="609" width="23" height="19" rx="1.5" fill="#8f8b83" stroke="#5a5852" stroke-width="0.6"/><rect x="976" y="634" width="19" height="22" rx="1.5" fill="#85827a" stroke="#5a5852" stroke-width="0.6"/><rect x="899" y="431" width="22" height="18" rx="1.5" fill="#8a8880" stroke="#5a5852" stroke-width="0.6"/><rect x="799" y="522" width="28" height="22" rx="1.5" fill="#8b8276" stroke="#5a5852" stroke-width="0.6"/><rect x="772" y="601" width="28" height="24" rx="1.5" fill="#84776a" stroke="#5a5852" stroke-width="0.6"/><rect x="766" y="575" width="18" height="16" rx="1.5" fill="#777" stroke="#5a5852" stroke-width="0.6"/><rect x="931" y="539" width="17" height="18" rx="1.5" fill="#7f7c74" stroke="#5a5852" stroke-width="0.6"/><rect x="868.5" y="538.4" width="22" height="18.6" rx="1.5" fill="#8a877e" stroke="#5a5852" stroke-width="0.6"/><rect x="870.7" y="559" width="20" height="22" rx="1.5" fill="#8a877e" stroke="#5a5852" stroke-width="0.6"/><rect x="957" y="535" width="20" height="22" rx="1.5" fill="#c8c8c6" stroke="#5a5852" stroke-width="0.6"/><rect x="978" y="539" width="20" height="22" rx="1.5" fill="#c6c6c4" stroke="#5a5852" stroke-width="0.6"/><path d="M709,489.4 L662,489.4 Q654,489.4 654,497 L654,598 Q654,607 662,607 L678,608 Q685.7,609 685.7,616 L685.7,628 Q685.7,636 693,636 L730,636 Q741.6,636 741.6,626 L741.6,558 Q741.6,550 750,549 L768,548 Q782.7,546 782.7,532 L782.7,470 Q782.7,461 774,461 L724,462 Q714.6,462 714.6,470 L714.6,483" fill="none" stroke="#8a5a35" stroke-width="4.6" stroke-linejoin="round" stroke-linecap="round" opacity="0.55"/><path d="M709,489.4 L662,489.4 Q654,489.4 654,497 L654,598 Q654,607 662,607 L678,608 Q685.7,609 685.7,616 L685.7,628 Q685.7,636 693,636 L730,636 Q741.6,636 741.6,626 L741.6,558 Q741.6,550 750,549 L768,548 Q782.7,546 782.7,532 L782.7,470 Q782.7,461 774,461 L724,462 Q714.6,462 714.6,470 L714.6,483" fill="none" stroke="#c3c3bd" stroke-width="3.2" stroke-linejoin="round" stroke-linecap="round"/><path d="M880,460.5 L801,460.5 Q791,460.5 791,470 L791,536 Q791,552 776,556 L762,558 Q750,560 750,572 L750,633 Q750,644.6 762,644.6 L866,644.6 Q877.7,644.6 877.7,656 L877.7,690 Q877.7,700.5 888,700.5 L940,700.5 Q949.5,700.5 949.5,690 L949.5,678 Q949.5,668 960,668 L992,667 Q1003.6,665 1003.6,652 Q1003.6,649.3 1012,649.3 L1114,649.3 Q1124,649.3 1124,640 L1126,395 Q1126,385.6 1116,384.5 L1048,383.5 Q1040,383 1035,372 L1033,360 Q1029,351.8 1020,351.8 L982,351.8 Q973,351.8 973,361 L973,429 Q973,450 955,450 L912,450 Q906,450 902,456 Q899,459.6 893,459.6 L880,460.5" fill="none" stroke="#8a5a35" stroke-width="4.6" stroke-linejoin="round" stroke-linecap="round" opacity="0.55"/><path d="M880,460.5 L801,460.5 Q791,460.5 791,470 L791,536 Q791,552 776,556 L762,558 Q750,560 750,572 L750,633 Q750,644.6 762,644.6 L866,644.6 Q877.7,644.6 877.7,656 L877.7,690 Q877.7,700.5 888,700.5 L940,700.5 Q949.5,700.5 949.5,690 L949.5,678 Q949.5,668 960,668 L992,667 Q1003.6,665 1003.6,652 Q1003.6,649.3 1012,649.3 L1114,649.3 Q1124,649.3 1124,640 L1126,395 Q1126,385.6 1116,384.5 L1048,383.5 Q1040,383 1035,372 L1033,360 Q1029,351.8 1020,351.8 L982,351.8 Q973,351.8 973,361 L973,429 Q973,450 955,450 L912,450 Q906,450 902,456 Q899,459.6 893,459.6 L880,460.5" fill="none" stroke="#c3c3bd" stroke-width="3.2" stroke-linejoin="round" stroke-linecap="round"/><path d="M1135.4,475 L1135.4,640 Q1135.4,650 1145,650 L1290,650 Q1299.5,650 1300,640 L1300.5,495 Q1300.5,487 1292,486 L1276,484.3 M1258.5,484.3 L1249,483.4 Q1241.7,476 1236,470.3 L1145,470.3 Q1135.4,470.3 1135.4,480" fill="none" stroke="#8a5a35" stroke-width="4.6" stroke-linejoin="round" stroke-linecap="round" opacity="0.55"/><path d="M1135.4,475 L1135.4,640 Q1135.4,650 1145,650 L1290,650 Q1299.5,650 1300,640 L1300.5,495 Q1300.5,487 1292,486 L1276,484.3 M1258.5,484.3 L1249,483.4 Q1241.7,476 1236,470.3 L1145,470.3 Q1135.4,470.3 1135.4,480" fill="none" stroke="#c3c3bd" stroke-width="3.2" stroke-linejoin="round" stroke-linecap="round"/><path d="M1135.4,400 L1135.4,452 Q1135.4,460 1145,460 L1240,460 Q1251,460 1251,450 L1251,430 Q1249,418 1240,405 Q1225,388 1205,388 L1145,389.3 Q1135.4,389.3 1135.4,398" fill="none" stroke="#8a5a35" stroke-width="4.6" stroke-linejoin="round" stroke-linecap="round" opacity="0.55"/><path d="M1135.4,400 L1135.4,452 Q1135.4,460 1145,460 L1240,460 Q1251,460 1251,450 L1251,430 Q1249,418 1240,405 Q1225,388 1205,388 L1145,389.3 Q1135.4,389.3 1135.4,398" fill="none" stroke="#c3c3bd" stroke-width="3.2" stroke-linejoin="round" stroke-linecap="round"/><rect x="706" y="421" width="80" height="30" rx="2" fill="#4f5a68" stroke="#8c8f8a" stroke-width="1"/><rect x="715.6" y="432.4" width="60.8" height="7.2" fill="#6e7c8c"/><rect x="714.0" y="426.4" width="2.1" height="6.0" fill="#c9a23c"/><rect x="714.0" y="439.6" width="2.1" height="6.0" fill="#c9a23c"/><rect x="714.0" y="418.0" width="2.1" height="2.5" fill="#d8d8d8"/><rect x="718.6" y="426.4" width="2.1" height="6.0" fill="#c9a23c"/><rect x="718.6" y="439.6" width="2.1" height="6.0" fill="#c9a23c"/><rect x="718.6" y="418.0" width="2.1" height="2.5" fill="#d8d8d8"/><rect x="723.1" y="426.4" width="2.1" height="6.0" fill="#c9a23c"/><rect x="723.1" y="439.6" width="2.1" height="6.0" fill="#c9a23c"/><rect x="723.1" y="418.0" width="2.1" height="2.5" fill="#d8d8d8"/><rect x="727.7" y="426.4" width="2.1" height="6.0" fill="#c9a23c"/><rect x="727.7" y="439.6" width="2.1" height="6.0" fill="#c9a23c"/><rect x="727.7" y="418.0" width="2.1" height="2.5" fill="#d8d8d8"/><rect x="732.3" y="426.4" width="2.1" height="6.0" fill="#c9a23c"/><rect x="732.3" y="439.6" width="2.1" height="6.0" fill="#c9a23c"/><rect x="732.3" y="418.0" width="2.1" height="2.5" fill="#d8d8d8"/><rect x="736.9" y="426.4" width="2.1" height="6.0" fill="#c9a23c"/><rect x="736.9" y="439.6" width="2.1" height="6.0" fill="#c9a23c"/><rect x="736.9" y="418.0" width="2.1" height="2.5" fill="#d8d8d8"/><rect x="741.4" y="426.4" width="2.1" height="6.0" fill="#c9a23c"/><rect x="741.4" y="439.6" width="2.1" height="6.0" fill="#c9a23c"/><rect x="741.4" y="418.0" width="2.1" height="2.5" fill="#d8d8d8"/><rect x="746.0" y="426.4" width="2.1" height="6.0" fill="#c9a23c"/><rect x="746.0" y="439.6" width="2.1" height="6.0" fill="#c9a23c"/><rect x="746.0" y="418.0" width="2.1" height="2.5" fill="#d8d8d8"/><rect x="750.6" y="426.4" width="2.1" height="6.0" fill="#c9a23c"/><rect x="750.6" y="439.6" width="2.1" height="6.0" fill="#c9a23c"/><rect x="750.6" y="418.0" width="2.1" height="2.5" fill="#d8d8d8"/><rect x="755.1" y="426.4" width="2.1" height="6.0" fill="#c9a23c"/><rect x="755.1" y="439.6" width="2.1" height="6.0" fill="#c9a23c"/><rect x="755.1" y="418.0" width="2.1" height="2.5" fill="#d8d8d8"/><rect x="759.7" y="426.4" width="2.1" height="6.0" fill="#c9a23c"/><rect x="759.7" y="439.6" width="2.1" height="6.0" fill="#c9a23c"/><rect x="759.7" y="418.0" width="2.1" height="2.5" fill="#d8d8d8"/><rect x="764.3" y="426.4" width="2.1" height="6.0" fill="#c9a23c"/><rect x="764.3" y="439.6" width="2.1" height="6.0" fill="#c9a23c"/><rect x="764.3" y="418.0" width="2.1" height="2.5" fill="#d8d8d8"/><rect x="768.9" y="426.4" width="2.1" height="6.0" fill="#c9a23c"/><rect x="768.9" y="439.6" width="2.1" height="6.0" fill="#c9a23c"/><rect x="768.9" y="418.0" width="2.1" height="2.5" fill="#d8d8d8"/><rect x="773.4" y="426.4" width="2.1" height="6.0" fill="#c9a23c"/><rect x="773.4" y="439.6" width="2.1" height="6.0" fill="#c9a23c"/><rect x="773.4" y="418.0" width="2.1" height="2.5" fill="#d8d8d8"/><rect x="704" y="417" width="84" height="38" fill="none" stroke="#7a1e1e" stroke-width="0.6"/><rect x="817" y="421" width="77" height="30" rx="2" fill="#4f5a68" stroke="#8c8f8a" stroke-width="1"/><rect x="826.2" y="432.4" width="58.5" height="7.2" fill="#6e7c8c"/><rect x="824.7" y="426.4" width="2.0" height="6.0" fill="#c9a23c"/><rect x="824.7" y="439.6" width="2.0" height="6.0" fill="#c9a23c"/><rect x="824.7" y="418.0" width="2.0" height="2.5" fill="#d8d8d8"/><rect x="829.1" y="426.4" width="2.0" height="6.0" fill="#c9a23c"/><rect x="829.1" y="439.6" width="2.0" height="6.0" fill="#c9a23c"/><rect x="829.1" y="418.0" width="2.0" height="2.5" fill="#d8d8d8"/><rect x="833.5" y="426.4" width="2.0" height="6.0" fill="#c9a23c"/><rect x="833.5" y="439.6" width="2.0" height="6.0" fill="#c9a23c"/><rect x="833.5" y="418.0" width="2.0" height="2.5" fill="#d8d8d8"/><rect x="837.9" y="426.4" width="2.0" height="6.0" fill="#c9a23c"/><rect x="837.9" y="439.6" width="2.0" height="6.0" fill="#c9a23c"/><rect x="837.9" y="418.0" width="2.0" height="2.5" fill="#d8d8d8"/><rect x="842.3" y="426.4" width="2.0" height="6.0" fill="#c9a23c"/><rect x="842.3" y="439.6" width="2.0" height="6.0" fill="#c9a23c"/><rect x="842.3" y="418.0" width="2.0" height="2.5" fill="#d8d8d8"/><rect x="846.7" y="426.4" width="2.0" height="6.0" fill="#c9a23c"/><rect x="846.7" y="439.6" width="2.0" height="6.0" fill="#c9a23c"/><rect x="846.7" y="418.0" width="2.0" height="2.5" fill="#d8d8d8"/><rect x="851.1" y="426.4" width="2.0" height="6.0" fill="#c9a23c"/><rect x="851.1" y="439.6" width="2.0" height="6.0" fill="#c9a23c"/><rect x="851.1" y="418.0" width="2.0" height="2.5" fill="#d8d8d8"/><rect x="855.5" y="426.4" width="2.0" height="6.0" fill="#c9a23c"/><rect x="855.5" y="439.6" width="2.0" height="6.0" fill="#c9a23c"/><rect x="855.5" y="418.0" width="2.0" height="2.5" fill="#d8d8d8"/><rect x="859.9" y="426.4" width="2.0" height="6.0" fill="#c9a23c"/><rect x="859.9" y="439.6" width="2.0" height="6.0" fill="#c9a23c"/><rect x="859.9" y="418.0" width="2.0" height="2.5" fill="#d8d8d8"/><rect x="864.3" y="426.4" width="2.0" height="6.0" fill="#c9a23c"/><rect x="864.3" y="439.6" width="2.0" height="6.0" fill="#c9a23c"/><rect x="864.3" y="418.0" width="2.0" height="2.5" fill="#d8d8d8"/><rect x="868.7" y="426.4" width="2.0" height="6.0" fill="#c9a23c"/><rect x="868.7" y="439.6" width="2.0" height="6.0" fill="#c9a23c"/><rect x="868.7" y="418.0" width="2.0" height="2.5" fill="#d8d8d8"/><rect x="873.1" y="426.4" width="2.0" height="6.0" fill="#c9a23c"/><rect x="873.1" y="439.6" width="2.0" height="6.0" fill="#c9a23c"/><rect x="873.1" y="418.0" width="2.0" height="2.5" fill="#d8d8d8"/><rect x="877.5" y="426.4" width="2.0" height="6.0" fill="#c9a23c"/><rect x="877.5" y="439.6" width="2.0" height="6.0" fill="#c9a23c"/><rect x="877.5" y="418.0" width="2.0" height="2.5" fill="#d8d8d8"/><rect x="881.9" y="426.4" width="2.0" height="6.0" fill="#c9a23c"/><rect x="881.9" y="439.6" width="2.0" height="6.0" fill="#c9a23c"/><rect x="881.9" y="418.0" width="2.0" height="2.5" fill="#d8d8d8"/><rect x="815" y="417" width="81" height="38" fill="none" stroke="#7a1e1e" stroke-width="0.6"/><rect x="1143" y="420" width="80" height="31" rx="2" fill="#4f5a68" stroke="#8c8f8a" stroke-width="1"/><rect x="1152.6" y="431.8" width="60.8" height="7.4" fill="#6e7c8c"/><rect x="1151.0" y="425.6" width="2.1" height="6.2" fill="#c9a23c"/><rect x="1151.0" y="439.2" width="2.1" height="6.2" fill="#c9a23c"/><rect x="1151.0" y="417.0" width="2.1" height="2.5" fill="#d8d8d8"/><rect x="1155.6" y="425.6" width="2.1" height="6.2" fill="#c9a23c"/><rect x="1155.6" y="439.2" width="2.1" height="6.2" fill="#c9a23c"/><rect x="1155.6" y="417.0" width="2.1" height="2.5" fill="#d8d8d8"/><rect x="1160.1" y="425.6" width="2.1" height="6.2" fill="#c9a23c"/><rect x="1160.1" y="439.2" width="2.1" height="6.2" fill="#c9a23c"/><rect x="1160.1" y="417.0" width="2.1" height="2.5" fill="#d8d8d8"/><rect x="1164.7" y="425.6" width="2.1" height="6.2" fill="#c9a23c"/><rect x="1164.7" y="439.2" width="2.1" height="6.2" fill="#c9a23c"/><rect x="1164.7" y="417.0" width="2.1" height="2.5" fill="#d8d8d8"/><rect x="1169.3" y="425.6" width="2.1" height="6.2" fill="#c9a23c"/><rect x="1169.3" y="439.2" width="2.1" height="6.2" fill="#c9a23c"/><rect x="1169.3" y="417.0" width="2.1" height="2.5" fill="#d8d8d8"/><rect x="1173.9" y="425.6" width="2.1" height="6.2" fill="#c9a23c"/><rect x="1173.9" y="439.2" width="2.1" height="6.2" fill="#c9a23c"/><rect x="1173.9" y="417.0" width="2.1" height="2.5" fill="#d8d8d8"/><rect x="1178.4" y="425.6" width="2.1" height="6.2" fill="#c9a23c"/><rect x="1178.4" y="439.2" width="2.1" height="6.2" fill="#c9a23c"/><rect x="1178.4" y="417.0" width="2.1" height="2.5" fill="#d8d8d8"/><rect x="1183.0" y="425.6" width="2.1" height="6.2" fill="#c9a23c"/><rect x="1183.0" y="439.2" width="2.1" height="6.2" fill="#c9a23c"/><rect x="1183.0" y="417.0" width="2.1" height="2.5" fill="#d8d8d8"/><rect x="1187.6" y="425.6" width="2.1" height="6.2" fill="#c9a23c"/><rect x="1187.6" y="439.2" width="2.1" height="6.2" fill="#c9a23c"/><rect x="1187.6" y="417.0" width="2.1" height="2.5" fill="#d8d8d8"/><rect x="1192.1" y="425.6" width="2.1" height="6.2" fill="#c9a23c"/><rect x="1192.1" y="439.2" width="2.1" height="6.2" fill="#c9a23c"/><rect x="1192.1" y="417.0" width="2.1" height="2.5" fill="#d8d8d8"/><rect x="1196.7" y="425.6" width="2.1" height="6.2" fill="#c9a23c"/><rect x="1196.7" y="439.2" width="2.1" height="6.2" fill="#c9a23c"/><rect x="1196.7" y="417.0" width="2.1" height="2.5" fill="#d8d8d8"/><rect x="1201.3" y="425.6" width="2.1" height="6.2" fill="#c9a23c"/><rect x="1201.3" y="439.2" width="2.1" height="6.2" fill="#c9a23c"/><rect x="1201.3" y="417.0" width="2.1" height="2.5" fill="#d8d8d8"/><rect x="1205.9" y="425.6" width="2.1" height="6.2" fill="#c9a23c"/><rect x="1205.9" y="439.2" width="2.1" height="6.2" fill="#c9a23c"/><rect x="1205.9" y="417.0" width="2.1" height="2.5" fill="#d8d8d8"/><rect x="1210.4" y="425.6" width="2.1" height="6.2" fill="#c9a23c"/><rect x="1210.4" y="439.2" width="2.1" height="6.2" fill="#c9a23c"/><rect x="1210.4" y="417.0" width="2.1" height="2.5" fill="#d8d8d8"/><rect x="1141" y="416" width="84" height="39" fill="none" stroke="#7a1e1e" stroke-width="0.6"/><rect x="729.5" y="657" width="136" height="29" rx="2" fill="#4f5a68" stroke="#8c8f8a" stroke-width="1"/><rect x="745.8" y="668.0" width="103.4" height="7.0" fill="#6e7c8c"/><rect x="743.1" y="662.2" width="1.4" height="5.8" fill="#c9a23c"/><rect x="743.1" y="675.0" width="1.4" height="5.8" fill="#c9a23c"/><rect x="743.1" y="654.0" width="1.4" height="2.5" fill="#d8d8d8"/><rect x="746.3" y="662.2" width="1.4" height="5.8" fill="#c9a23c"/><rect x="746.3" y="675.0" width="1.4" height="5.8" fill="#c9a23c"/><rect x="746.3" y="654.0" width="1.4" height="2.5" fill="#d8d8d8"/><rect x="749.5" y="662.2" width="1.4" height="5.8" fill="#c9a23c"/><rect x="749.5" y="675.0" width="1.4" height="5.8" fill="#c9a23c"/><rect x="749.5" y="654.0" width="1.4" height="2.5" fill="#d8d8d8"/><rect x="752.7" y="662.2" width="1.4" height="5.8" fill="#c9a23c"/><rect x="752.7" y="675.0" width="1.4" height="5.8" fill="#c9a23c"/><rect x="752.7" y="654.0" width="1.4" height="2.5" fill="#d8d8d8"/><rect x="755.9" y="662.2" width="1.4" height="5.8" fill="#c9a23c"/><rect x="755.9" y="675.0" width="1.4" height="5.8" fill="#c9a23c"/><rect x="755.9" y="654.0" width="1.4" height="2.5" fill="#d8d8d8"/><rect x="759.1" y="662.2" width="1.4" height="5.8" fill="#c9a23c"/><rect x="759.1" y="675.0" width="1.4" height="5.8" fill="#c9a23c"/><rect x="759.1" y="654.0" width="1.4" height="2.5" fill="#d8d8d8"/><rect x="762.3" y="662.2" width="1.4" height="5.8" fill="#c9a23c"/><rect x="762.3" y="675.0" width="1.4" height="5.8" fill="#c9a23c"/><rect x="762.3" y="654.0" width="1.4" height="2.5" fill="#d8d8d8"/><rect x="765.5" y="662.2" width="1.4" height="5.8" fill="#c9a23c"/><rect x="765.5" y="675.0" width="1.4" height="5.8" fill="#c9a23c"/><rect x="765.5" y="654.0" width="1.4" height="2.5" fill="#d8d8d8"/><rect x="768.7" y="662.2" width="1.4" height="5.8" fill="#c9a23c"/><rect x="768.7" y="675.0" width="1.4" height="5.8" fill="#c9a23c"/><rect x="768.7" y="654.0" width="1.4" height="2.5" fill="#d8d8d8"/><rect x="771.9" y="662.2" width="1.4" height="5.8" fill="#c9a23c"/><rect x="771.9" y="675.0" width="1.4" height="5.8" fill="#c9a23c"/><rect x="771.9" y="654.0" width="1.4" height="2.5" fill="#d8d8d8"/><rect x="775.1" y="662.2" width="1.4" height="5.8" fill="#c9a23c"/><rect x="775.1" y="675.0" width="1.4" height="5.8" fill="#c9a23c"/><rect x="775.1" y="654.0" width="1.4" height="2.5" fill="#d8d8d8"/><rect x="778.3" y="662.2" width="1.4" height="5.8" fill="#c9a23c"/><rect x="778.3" y="675.0" width="1.4" height="5.8" fill="#c9a23c"/><rect x="778.3" y="654.0" width="1.4" height="2.5" fill="#d8d8d8"/><rect x="781.5" y="662.2" width="1.4" height="5.8" fill="#c9a23c"/><rect x="781.5" y="675.0" width="1.4" height="5.8" fill="#c9a23c"/><rect x="781.5" y="654.0" width="1.4" height="2.5" fill="#d8d8d8"/><rect x="784.7" y="662.2" width="1.4" height="5.8" fill="#c9a23c"/><rect x="784.7" y="675.0" width="1.4" height="5.8" fill="#c9a23c"/><rect x="784.7" y="654.0" width="1.4" height="2.5" fill="#d8d8d8"/><rect x="787.9" y="662.2" width="1.4" height="5.8" fill="#c9a23c"/><rect x="787.9" y="675.0" width="1.4" height="5.8" fill="#c9a23c"/><rect x="787.9" y="654.0" width="1.4" height="2.5" fill="#d8d8d8"/><rect x="791.1" y="662.2" width="1.4" height="5.8" fill="#c9a23c"/><rect x="791.1" y="675.0" width="1.4" height="5.8" fill="#c9a23c"/><rect x="791.1" y="654.0" width="1.4" height="2.5" fill="#d8d8d8"/><rect x="794.3" y="662.2" width="1.4" height="5.8" fill="#c9a23c"/><rect x="794.3" y="675.0" width="1.4" height="5.8" fill="#c9a23c"/><rect x="794.3" y="654.0" width="1.4" height="2.5" fill="#d8d8d8"/><rect x="797.5" y="662.2" width="1.4" height="5.8" fill="#c9a23c"/><rect x="797.5" y="675.0" width="1.4" height="5.8" fill="#c9a23c"/><rect x="797.5" y="654.0" width="1.4" height="2.5" fill="#d8d8d8"/><rect x="800.7" y="662.2" width="1.4" height="5.8" fill="#c9a23c"/><rect x="800.7" y="675.0" width="1.4" height="5.8" fill="#c9a23c"/><rect x="800.7" y="654.0" width="1.4" height="2.5" fill="#d8d8d8"/><rect x="803.9" y="662.2" width="1.4" height="5.8" fill="#c9a23c"/><rect x="803.9" y="675.0" width="1.4" height="5.8" fill="#c9a23c"/><rect x="803.9" y="654.0" width="1.4" height="2.5" fill="#d8d8d8"/><rect x="807.1" y="662.2" width="1.4" height="5.8" fill="#c9a23c"/><rect x="807.1" y="675.0" width="1.4" height="5.8" fill="#c9a23c"/><rect x="807.1" y="654.0" width="1.4" height="2.5" fill="#d8d8d8"/><rect x="810.3" y="662.2" width="1.4" height="5.8" fill="#c9a23c"/><rect x="810.3" y="675.0" width="1.4" height="5.8" fill="#c9a23c"/><rect x="810.3" y="654.0" width="1.4" height="2.5" fill="#d8d8d8"/><rect x="813.5" y="662.2" width="1.4" height="5.8" fill="#c9a23c"/><rect x="813.5" y="675.0" width="1.4" height="5.8" fill="#c9a23c"/><rect x="813.5" y="654.0" width="1.4" height="2.5" fill="#d8d8d8"/><rect x="816.7" y="662.2" width="1.4" height="5.8" fill="#c9a23c"/><rect x="816.7" y="675.0" width="1.4" height="5.8" fill="#c9a23c"/><rect x="816.7" y="654.0" width="1.4" height="2.5" fill="#d8d8d8"/><rect x="819.9" y="662.2" width="1.4" height="5.8" fill="#c9a23c"/><rect x="819.9" y="675.0" width="1.4" height="5.8" fill="#c9a23c"/><rect x="819.9" y="654.0" width="1.4" height="2.5" fill="#d8d8d8"/><rect x="823.1" y="662.2" width="1.4" height="5.8" fill="#c9a23c"/><rect x="823.1" y="675.0" width="1.4" height="5.8" fill="#c9a23c"/><rect x="823.1" y="654.0" width="1.4" height="2.5" fill="#d8d8d8"/><rect x="826.3" y="662.2" width="1.4" height="5.8" fill="#c9a23c"/><rect x="826.3" y="675.0" width="1.4" height="5.8" fill="#c9a23c"/><rect x="826.3" y="654.0" width="1.4" height="2.5" fill="#d8d8d8"/><rect x="829.5" y="662.2" width="1.4" height="5.8" fill="#c9a23c"/><rect x="829.5" y="675.0" width="1.4" height="5.8" fill="#c9a23c"/><rect x="829.5" y="654.0" width="1.4" height="2.5" fill="#d8d8d8"/><rect x="832.7" y="662.2" width="1.4" height="5.8" fill="#c9a23c"/><rect x="832.7" y="675.0" width="1.4" height="5.8" fill="#c9a23c"/><rect x="832.7" y="654.0" width="1.4" height="2.5" fill="#d8d8d8"/><rect x="835.9" y="662.2" width="1.4" height="5.8" fill="#c9a23c"/><rect x="835.9" y="675.0" width="1.4" height="5.8" fill="#c9a23c"/><rect x="835.9" y="654.0" width="1.4" height="2.5" fill="#d8d8d8"/><rect x="839.1" y="662.2" width="1.4" height="5.8" fill="#c9a23c"/><rect x="839.1" y="675.0" width="1.4" height="5.8" fill="#c9a23c"/><rect x="839.1" y="654.0" width="1.4" height="2.5" fill="#d8d8d8"/><rect x="842.3" y="662.2" width="1.4" height="5.8" fill="#c9a23c"/><rect x="842.3" y="675.0" width="1.4" height="5.8" fill="#c9a23c"/><rect x="842.3" y="654.0" width="1.4" height="2.5" fill="#d8d8d8"/><rect x="845.5" y="662.2" width="1.4" height="5.8" fill="#c9a23c"/><rect x="845.5" y="675.0" width="1.4" height="5.8" fill="#c9a23c"/><rect x="845.5" y="654.0" width="1.4" height="2.5" fill="#d8d8d8"/><rect x="848.7" y="662.2" width="1.4" height="5.8" fill="#c9a23c"/><rect x="848.7" y="675.0" width="1.4" height="5.8" fill="#c9a23c"/><rect x="848.7" y="654.0" width="1.4" height="2.5" fill="#d8d8d8"/><rect x="727.5" y="653" width="140" height="37" fill="none" stroke="#7a1e1e" stroke-width="0.6"/><rect x="1013.8" y="662" width="77" height="25" rx="2" fill="#4f5a68" stroke="#8c8f8a" stroke-width="1"/><rect x="1023.0" y="671.5" width="58.5" height="6.0" fill="#6e7c8c"/><rect x="1021.5" y="666.5" width="1.5" height="5.0" fill="#c9a23c"/><rect x="1021.5" y="677.5" width="1.5" height="5.0" fill="#c9a23c"/><rect x="1021.5" y="659.0" width="1.5" height="2.5" fill="#d8d8d8"/><rect x="1024.9" y="666.5" width="1.5" height="5.0" fill="#c9a23c"/><rect x="1024.9" y="677.5" width="1.5" height="5.0" fill="#c9a23c"/><rect x="1024.9" y="659.0" width="1.5" height="2.5" fill="#d8d8d8"/><rect x="1028.3" y="666.5" width="1.5" height="5.0" fill="#c9a23c"/><rect x="1028.3" y="677.5" width="1.5" height="5.0" fill="#c9a23c"/><rect x="1028.3" y="659.0" width="1.5" height="2.5" fill="#d8d8d8"/><rect x="1031.8" y="666.5" width="1.5" height="5.0" fill="#c9a23c"/><rect x="1031.8" y="677.5" width="1.5" height="5.0" fill="#c9a23c"/><rect x="1031.8" y="659.0" width="1.5" height="2.5" fill="#d8d8d8"/><rect x="1035.2" y="666.5" width="1.5" height="5.0" fill="#c9a23c"/><rect x="1035.2" y="677.5" width="1.5" height="5.0" fill="#c9a23c"/><rect x="1035.2" y="659.0" width="1.5" height="2.5" fill="#d8d8d8"/><rect x="1038.6" y="666.5" width="1.5" height="5.0" fill="#c9a23c"/><rect x="1038.6" y="677.5" width="1.5" height="5.0" fill="#c9a23c"/><rect x="1038.6" y="659.0" width="1.5" height="2.5" fill="#d8d8d8"/><rect x="1042.0" y="666.5" width="1.5" height="5.0" fill="#c9a23c"/><rect x="1042.0" y="677.5" width="1.5" height="5.0" fill="#c9a23c"/><rect x="1042.0" y="659.0" width="1.5" height="2.5" fill="#d8d8d8"/><rect x="1045.5" y="666.5" width="1.5" height="5.0" fill="#c9a23c"/><rect x="1045.5" y="677.5" width="1.5" height="5.0" fill="#c9a23c"/><rect x="1045.5" y="659.0" width="1.5" height="2.5" fill="#d8d8d8"/><rect x="1048.9" y="666.5" width="1.5" height="5.0" fill="#c9a23c"/><rect x="1048.9" y="677.5" width="1.5" height="5.0" fill="#c9a23c"/><rect x="1048.9" y="659.0" width="1.5" height="2.5" fill="#d8d8d8"/><rect x="1052.3" y="666.5" width="1.5" height="5.0" fill="#c9a23c"/><rect x="1052.3" y="677.5" width="1.5" height="5.0" fill="#c9a23c"/><rect x="1052.3" y="659.0" width="1.5" height="2.5" fill="#d8d8d8"/><rect x="1055.7" y="666.5" width="1.5" height="5.0" fill="#c9a23c"/><rect x="1055.7" y="677.5" width="1.5" height="5.0" fill="#c9a23c"/><rect x="1055.7" y="659.0" width="1.5" height="2.5" fill="#d8d8d8"/><rect x="1059.1" y="666.5" width="1.5" height="5.0" fill="#c9a23c"/><rect x="1059.1" y="677.5" width="1.5" height="5.0" fill="#c9a23c"/><rect x="1059.1" y="659.0" width="1.5" height="2.5" fill="#d8d8d8"/><rect x="1062.6" y="666.5" width="1.5" height="5.0" fill="#c9a23c"/><rect x="1062.6" y="677.5" width="1.5" height="5.0" fill="#c9a23c"/><rect x="1062.6" y="659.0" width="1.5" height="2.5" fill="#d8d8d8"/><rect x="1066.0" y="666.5" width="1.5" height="5.0" fill="#c9a23c"/><rect x="1066.0" y="677.5" width="1.5" height="5.0" fill="#c9a23c"/><rect x="1066.0" y="659.0" width="1.5" height="2.5" fill="#d8d8d8"/><rect x="1069.4" y="666.5" width="1.5" height="5.0" fill="#c9a23c"/><rect x="1069.4" y="677.5" width="1.5" height="5.0" fill="#c9a23c"/><rect x="1069.4" y="659.0" width="1.5" height="2.5" fill="#d8d8d8"/><rect x="1072.8" y="666.5" width="1.5" height="5.0" fill="#c9a23c"/><rect x="1072.8" y="677.5" width="1.5" height="5.0" fill="#c9a23c"/><rect x="1072.8" y="659.0" width="1.5" height="2.5" fill="#d8d8d8"/><rect x="1076.3" y="666.5" width="1.5" height="5.0" fill="#c9a23c"/><rect x="1076.3" y="677.5" width="1.5" height="5.0" fill="#c9a23c"/><rect x="1076.3" y="659.0" width="1.5" height="2.5" fill="#d8d8d8"/><rect x="1079.7" y="666.5" width="1.5" height="5.0" fill="#c9a23c"/><rect x="1079.7" y="677.5" width="1.5" height="5.0" fill="#c9a23c"/><rect x="1079.7" y="659.0" width="1.5" height="2.5" fill="#d8d8d8"/><rect x="1011.8" y="658" width="81" height="33" fill="none" stroke="#7a1e1e" stroke-width="0.6"/><rect x="1100" y="662" width="74" height="25" rx="2" fill="#4f5a68" stroke="#8c8f8a" stroke-width="1"/><rect x="1108.9" y="671.5" width="56.2" height="6.0" fill="#6e7c8c"/><rect x="1107.4" y="666.5" width="1.5" height="5.0" fill="#c9a23c"/><rect x="1107.4" y="677.5" width="1.5" height="5.0" fill="#c9a23c"/><rect x="1107.4" y="659.0" width="1.5" height="2.5" fill="#d8d8d8"/><rect x="1110.7" y="666.5" width="1.5" height="5.0" fill="#c9a23c"/><rect x="1110.7" y="677.5" width="1.5" height="5.0" fill="#c9a23c"/><rect x="1110.7" y="659.0" width="1.5" height="2.5" fill="#d8d8d8"/><rect x="1114.0" y="666.5" width="1.5" height="5.0" fill="#c9a23c"/><rect x="1114.0" y="677.5" width="1.5" height="5.0" fill="#c9a23c"/><rect x="1114.0" y="659.0" width="1.5" height="2.5" fill="#d8d8d8"/><rect x="1117.3" y="666.5" width="1.5" height="5.0" fill="#c9a23c"/><rect x="1117.3" y="677.5" width="1.5" height="5.0" fill="#c9a23c"/><rect x="1117.3" y="659.0" width="1.5" height="2.5" fill="#d8d8d8"/><rect x="1120.6" y="666.5" width="1.5" height="5.0" fill="#c9a23c"/><rect x="1120.6" y="677.5" width="1.5" height="5.0" fill="#c9a23c"/><rect x="1120.6" y="659.0" width="1.5" height="2.5" fill="#d8d8d8"/><rect x="1123.8" y="666.5" width="1.5" height="5.0" fill="#c9a23c"/><rect x="1123.8" y="677.5" width="1.5" height="5.0" fill="#c9a23c"/><rect x="1123.8" y="659.0" width="1.5" height="2.5" fill="#d8d8d8"/><rect x="1127.1" y="666.5" width="1.5" height="5.0" fill="#c9a23c"/><rect x="1127.1" y="677.5" width="1.5" height="5.0" fill="#c9a23c"/><rect x="1127.1" y="659.0" width="1.5" height="2.5" fill="#d8d8d8"/><rect x="1130.4" y="666.5" width="1.5" height="5.0" fill="#c9a23c"/><rect x="1130.4" y="677.5" width="1.5" height="5.0" fill="#c9a23c"/><rect x="1130.4" y="659.0" width="1.5" height="2.5" fill="#d8d8d8"/><rect x="1133.7" y="666.5" width="1.5" height="5.0" fill="#c9a23c"/><rect x="1133.7" y="677.5" width="1.5" height="5.0" fill="#c9a23c"/><rect x="1133.7" y="659.0" width="1.5" height="2.5" fill="#d8d8d8"/><rect x="1137.0" y="666.5" width="1.5" height="5.0" fill="#c9a23c"/><rect x="1137.0" y="677.5" width="1.5" height="5.0" fill="#c9a23c"/><rect x="1137.0" y="659.0" width="1.5" height="2.5" fill="#d8d8d8"/><rect x="1140.3" y="666.5" width="1.5" height="5.0" fill="#c9a23c"/><rect x="1140.3" y="677.5" width="1.5" height="5.0" fill="#c9a23c"/><rect x="1140.3" y="659.0" width="1.5" height="2.5" fill="#d8d8d8"/><rect x="1143.6" y="666.5" width="1.5" height="5.0" fill="#c9a23c"/><rect x="1143.6" y="677.5" width="1.5" height="5.0" fill="#c9a23c"/><rect x="1143.6" y="659.0" width="1.5" height="2.5" fill="#d8d8d8"/><rect x="1146.9" y="666.5" width="1.5" height="5.0" fill="#c9a23c"/><rect x="1146.9" y="677.5" width="1.5" height="5.0" fill="#c9a23c"/><rect x="1146.9" y="659.0" width="1.5" height="2.5" fill="#d8d8d8"/><rect x="1150.2" y="666.5" width="1.5" height="5.0" fill="#c9a23c"/><rect x="1150.2" y="677.5" width="1.5" height="5.0" fill="#c9a23c"/><rect x="1150.2" y="659.0" width="1.5" height="2.5" fill="#d8d8d8"/><rect x="1153.4" y="666.5" width="1.5" height="5.0" fill="#c9a23c"/><rect x="1153.4" y="677.5" width="1.5" height="5.0" fill="#c9a23c"/><rect x="1153.4" y="659.0" width="1.5" height="2.5" fill="#d8d8d8"/><rect x="1156.7" y="666.5" width="1.5" height="5.0" fill="#c9a23c"/><rect x="1156.7" y="677.5" width="1.5" height="5.0" fill="#c9a23c"/><rect x="1156.7" y="659.0" width="1.5" height="2.5" fill="#d8d8d8"/><rect x="1160.0" y="666.5" width="1.5" height="5.0" fill="#c9a23c"/><rect x="1160.0" y="677.5" width="1.5" height="5.0" fill="#c9a23c"/><rect x="1160.0" y="659.0" width="1.5" height="2.5" fill="#d8d8d8"/><rect x="1163.3" y="666.5" width="1.5" height="5.0" fill="#c9a23c"/><rect x="1163.3" y="677.5" width="1.5" height="5.0" fill="#c9a23c"/><rect x="1163.3" y="659.0" width="1.5" height="2.5" fill="#d8d8d8"/><rect x="1098" y="658" width="78" height="33" fill="none" stroke="#7a1e1e" stroke-width="0.6"/><rect x="1212" y="661.5" width="65" height="33" rx="2" fill="#4f5a68" stroke="#8c8f8a" stroke-width="1"/><rect x="1219.8" y="674.0" width="49.4" height="7.9" fill="#6e7c8c"/><rect x="1218.5" y="667.4" width="3.3" height="6.6" fill="#c9a23c"/><rect x="1218.5" y="682.0" width="3.3" height="6.6" fill="#c9a23c"/><rect x="1218.5" y="658.5" width="3.3" height="2.5" fill="#d8d8d8"/><rect x="1225.9" y="667.4" width="3.3" height="6.6" fill="#c9a23c"/><rect x="1225.9" y="682.0" width="3.3" height="6.6" fill="#c9a23c"/><rect x="1225.9" y="658.5" width="3.3" height="2.5" fill="#d8d8d8"/><rect x="1233.4" y="667.4" width="3.3" height="6.6" fill="#c9a23c"/><rect x="1233.4" y="682.0" width="3.3" height="6.6" fill="#c9a23c"/><rect x="1233.4" y="658.5" width="3.3" height="2.5" fill="#d8d8d8"/><rect x="1240.8" y="667.4" width="3.3" height="6.6" fill="#c9a23c"/><rect x="1240.8" y="682.0" width="3.3" height="6.6" fill="#c9a23c"/><rect x="1240.8" y="658.5" width="3.3" height="2.5" fill="#d8d8d8"/><rect x="1248.2" y="667.4" width="3.3" height="6.6" fill="#c9a23c"/><rect x="1248.2" y="682.0" width="3.3" height="6.6" fill="#c9a23c"/><rect x="1248.2" y="658.5" width="3.3" height="2.5" fill="#d8d8d8"/><rect x="1255.6" y="667.4" width="3.3" height="6.6" fill="#c9a23c"/><rect x="1255.6" y="682.0" width="3.3" height="6.6" fill="#c9a23c"/><rect x="1255.6" y="658.5" width="3.3" height="2.5" fill="#d8d8d8"/><rect x="1263.1" y="667.4" width="3.3" height="6.6" fill="#c9a23c"/><rect x="1263.1" y="682.0" width="3.3" height="6.6" fill="#c9a23c"/><rect x="1263.1" y="658.5" width="3.3" height="2.5" fill="#d8d8d8"/><rect x="1210" y="657.5" width="69" height="41" fill="none" stroke="#7a1e1e" stroke-width="0.6"/><rect x="692" y="650" width="30" height="48" rx="3" fill="#56667a" stroke="#9aa0a0" stroke-width="1"/><rect x="702" y="660" width="10" height="28" fill="#6b7c90"/><path d="M696 664h4v2h-4zM696 669h4v2h-4zM696 674h4v2h-4zM696 679h4v2h-4zM714 664h4v2h-4zM714 669h4v2h-4zM714 674h4v2h-4zM714 679h4v2h-4z" fill="#c9a23c"/><rect x="672.6" y="549" width="45.7" height="44" rx="1" fill="#1e2022"/><rect x="671.6" y="548" width="47.7" height="46" fill="none" stroke="#7a1e1e" stroke-width="0.6"/><rect x="726.7" y="496" width="35.3" height="35.4" rx="1" fill="#3b4148"/><rect x="725.7" y="495" width="37.3" height="37.4" fill="none" stroke="#7a1e1e" stroke-width="0.6"/><rect x="855" y="475" width="64" height="53" rx="1" fill="#212325"/><rect x="854" y="474" width="66" height="55" fill="none" stroke="#7a1e1e" stroke-width="0.6"/><rect x="798.5" y="563" width="33.5" height="33.6" rx="1" fill="#2a2c2c"/><rect x="797.5" y="562" width="35.5" height="35.6" fill="none" stroke="#7a1e1e" stroke-width="0.6"/><rect x="757.5" y="568.7" width="23.3" height="28" rx="1" fill="#3a3c3c"/><rect x="756.5" y="567.7" width="25.3" height="30" fill="none" stroke="#7a1e1e" stroke-width="0.6"/><rect x="893.2" y="576.5" width="63.4" height="56.9" rx="1" fill="#202224"/><rect x="892.2" y="575.5" width="65.4" height="58.9" fill="none" stroke="#7a1e1e" stroke-width="0.6"/><rect x="999.3" y="403" width="31.7" height="33.6" rx="1" fill="#3a4048"/><rect x="998.3" y="402" width="33.7" height="35.6" fill="none" stroke="#7a1e1e" stroke-width="0.6"/><rect x="1156" y="499.3" width="45.6" height="74.5" rx="1" fill="#30353a"/><rect x="1155" y="498.3" width="47.6" height="76.5" fill="none" stroke="#7a1e1e" stroke-width="0.6"/><rect x="1237" y="524.4" width="60.7" height="65.6" rx="1" fill="#2e3338"/><rect x="1236" y="523.4" width="62.7" height="67.6" fill="none" stroke="#7a1e1e" stroke-width="0.6"/><rect x="1142" y="607.3" width="32.6" height="37.3" rx="1" fill="#2a2c2d"/><rect x="1141" y="606.3" width="34.6" height="39.3" fill="none" stroke="#7a1e1e" stroke-width="0.6"/><rect x="1183" y="610" width="33.5" height="34.6" rx="1" fill="#2a2c2d"/><rect x="1182" y="609" width="35.5" height="36.6" fill="none" stroke="#7a1e1e" stroke-width="0.6"/><rect x="887" y="666" width="18.7" height="23.3" rx="1" fill="#1f2021"/><rect x="886" y="665" width="20.7" height="25.3" fill="none" stroke="#7a1e1e" stroke-width="0.6"/><rect x="918.7" y="668" width="24.3" height="21.3" rx="1" fill="#262828"/><rect x="917.7" y="667" width="26.3" height="23.3" fill="none" stroke="#7a1e1e" stroke-width="0.6"/><rect x="1239.9" y="378" width="22.3" height="20.7" rx="1" fill="#2e3236"/><rect x="1238.9" y="377" width="24.3" height="22.7" fill="none" stroke="#7a1e1e" stroke-width="0.6"/><rect x="1030" y="490" width="22" height="18" rx="1" fill="#303438"/><rect x="1029" y="489" width="24" height="20" fill="none" stroke="#7a1e1e" stroke-width="0.6"/><rect x="1050" y="401" width="15" height="21" rx="1" fill="#2e3540"/><rect x="1049" y="400" width="17" height="23" fill="none" stroke="#7a1e1e" stroke-width="0.6"/><rect x="1100" y="508" width="25" height="25" rx="1" fill="#303a48"/><rect x="1099" y="507" width="27" height="27" fill="none" stroke="#7a1e1e" stroke-width="0.6"/><rect x="662.4" y="460.5" width="21.4" height="21.5" fill="#e2e1d8"/><rect x="673" y="508" width="13" height="17" fill="#c59d45"/><rect x="734" y="468" width="13" height="17" fill="#d8d6cf"/><rect x="1152" y="501" width="12" height="10" fill="#d4cfa8" opacity="0.2"/><rect x="1205" y="478" width="18" height="11" fill="#cfcabb"/><rect x="1225" y="489" width="13" height="16" fill="#b89a4a"/><rect x="1252" y="496" width="9" height="18" fill="#e6e6e0"/><rect x="1218" y="523.5" width="11" height="17.5" fill="#d99a5a"/><rect x="1161" y="599" width="73" height="4" rx="1" fill="#c0c0ba"/><rect x="1248" y="599" width="16" height="4" rx="1" fill="#c0c0ba"/><rect x="829.3" y="615.7" width="22.4" height="16.8" fill="#8c8068" stroke="#7a1e1e" stroke-width="0.6"/><rect x="662.4" y="640" width="22.4" height="18.6" fill="#8d8477"/><circle cx="661.5" cy="431.8" r="14" fill="#c9962f"/><circle cx="661.5" cy="431.8" r="8.4" fill="#fbfbfb"/><circle cx="954.6" cy="419.9" r="14" fill="#c9962f"/><circle cx="954.6" cy="419.9" r="8.4" fill="#fbfbfb"/><circle cx="1051.6" cy="364.8" r="14" fill="#c9962f"/><circle cx="1051.6" cy="364.8" r="8.4" fill="#fbfbfb"/><circle cx="1315.4" cy="388.4" r="14" fill="#c9962f"/><circle cx="1315.4" cy="388.4" r="8.4" fill="#fbfbfb"/><circle cx="1327.5" cy="606.4" r="14" fill="#c9962f"/><circle cx="1327.5" cy="606.4" r="8.4" fill="#fbfbfb"/><circle cx="656.8" cy="705.2" r="14" fill="#c9962f"/><circle cx="656.8" cy="705.2" r="8.4" fill="#fbfbfb"/><circle cx="972" cy="686.5" r="14" fill="#c9962f"/><circle cx="972" cy="686.5" r="8.4" fill="#fbfbfb"/><circle cx="956.5" cy="392.8" r="5.6" fill="#d39a35"/><circle cx="1103.8" cy="356.5" r="5.6" fill="#d39a35"/><circle cx="1075.8" cy="370.4" r="5.6" fill="#d39a35"/><circle cx="1093.5" cy="370.4" r="5.6" fill="#d39a35"/><circle cx="1113" cy="370.4" r="5.6" fill="#d39a35"/><circle cx="1320" cy="505.8" r="5.6" fill="#d39a35"/><circle cx="1320" cy="525.4" r="5.6" fill="#d39a35"/><circle cx="1327.5" cy="544" r="5.6" fill="#d39a35"/><circle cx="1327.5" cy="563.6" r="5.6" fill="#d39a35"/><circle cx="1326.6" cy="583" r="5.6" fill="#d39a35"/><circle cx="1295" cy="659.5" r="5.6" fill="#d39a35"/><circle cx="1295" cy="678" r="5.6" fill="#d39a35"/><circle cx="999" cy="686.5" r="5.6" fill="#d39a35"/><circle cx="1039.4" cy="696" r="5.6" fill="#d39a35"/><circle cx="1059" cy="696" r="5.6" fill="#d39a35"/><circle cx="1079" cy="696" r="5.6" fill="#d39a35"/><circle cx="673.6" cy="631.5" r="5.6" fill="#d39a35"/><circle cx="727.6" cy="646.5" r="4.5" fill="#d39a35"/><circle cx="742.6" cy="648.3" r="4.5" fill="#d39a35"/><circle cx="727" cy="692" r="2.5" fill="#d39a35"/><circle cx="735" cy="692" r="2.5" fill="#d39a35"/><circle cx="743" cy="692" r="2.5" fill="#d39a35"/><circle cx="751" cy="692" r="2.5" fill="#d39a35"/><path d="M673.6,666.9 L681.1,674.4 L673.6,681.9 L666.1,674.4Z" fill="#c99a3a"/><path d="M1299.5,458.6 L1307.5,466.6 L1299.5,474.6 L1291.5,466.6Z" fill="#c99a3a"/><rect x="664" y="613" width="16" height="7.5" rx="3.7" fill="#d9d9d3"/><rect x="652" y="620.5" width="14" height="7" rx="3.5" fill="#c9c6b5"/><rect x="662" y="337" width="14" height="7" rx="3.5" fill="#d4d4cf"/><rect x="662" y="324" width="14" height="7" rx="3.5" fill="#d4d4cf"/><rect x="666" y="373" width="8" height="15" rx="4" fill="#bdbdb5"/><rect x="655" y="451" width="14" height="7" rx="3.5" fill="#c8c8c0"/><rect x="651" y="384" width="13" height="24" fill="#c8c8c0"/><rect x="653" y="393" width="9" height="11" fill="#efefe8"/><rect x="657" y="348" width="30" height="20" rx="3" fill="#2b3334"/><circle cx="643" cy="334" r="5.5" fill="#c9a438"/><rect x="643" y="332" width="12" height="4" fill="#a08030"/><rect x="685" y="374" width="8" height="14" fill="#b9b6ad"/><rect x="693" y="379" width="10" height="4" fill="#c9a438"/><rect x="792" y="395" width="18.6" height="33.7" rx="2" fill="#a9a498" stroke="#ddd" stroke-width="1"/><circle cx="950" cy="342.5" r="33.6" fill="none" stroke="#b07a2c" stroke-width="1.2"/><circle cx="950" cy="342.5" r="27" fill="#d6a24a"/><circle cx="950" cy="342.5" r="22" fill="#ecd9b0"/><circle cx="950" cy="342.5" r="18" fill="#f6f1e6"/><rect x="940.6" y="332" width="22.4" height="20.7" fill="#fbfbf5"/><rect x="942.5" y="336" width="13" height="15" fill="#e5b23a"/><rect x="901.4" y="373" width="42" height="19" rx="2" fill="#7f7d76"/><rect x="904" y="376" width="30" height="13" fill="#3c3c3a"/><circle cx="902" cy="382" r="4" fill="#c9a438"/><rect x="1023.6" y="310.8" width="38.2" height="29.8" rx="3" fill="#bdb8ae" stroke="#7a1e1e" stroke-width="0.6"/><rect x="1032" y="318" width="10" height="12" fill="#444"/><circle cx="1018" cy="284" r="5.5" fill="#c9a438"/><circle cx="1079.5" cy="291" r="5.5" fill="#c9a438"/><circle cx="1244.5" cy="283" r="5.5" fill="#c9a438"/><circle cx="1276" cy="283" r="5.5" fill="#c9a438"/><rect x="985" y="277" width="20" height="30" rx="3" fill="#2f3939"/><rect x="1100" y="281" width="30" height="30" rx="3" fill="#2f3939"/><rect x="1228" y="300" width="70" height="22" rx="3" fill="#2d3838"/><rect x="1225" y="325" width="25" height="55" rx="3" fill="#2d3838"/><rect x="1073" y="318" width="11" height="38" rx="2" fill="#c9bfa5"/><rect x="1243" y="337" width="11" height="34" rx="2" fill="#c9bfa5"/><rect x="984" y="319" width="6" height="26" fill="#b5b5ad"/><rect x="976.6" y="299" width="24" height="19" rx="3" fill="#2f3939"/><circle cx="1304" cy="313" r="5.5" fill="#c99a3a"/><circle cx="1304" cy="313" r="4" fill="#fbfbfb"/><rect x="1257.6" y="340.9" width="43.8" height="25.1" fill="#9b8755" stroke="#b9b5a8" stroke-width="1"/><rect x="686" y="462.6" width="20" height="20" fill="#8b8d88"/><circle cx="696" cy="472.6" r="8" fill="#c09a48"/><circle cx="696" cy="472.6" r="5" fill="#3a3f3f"/><rect x="1274.6" y="375.6" width="20" height="20" fill="#8b8d88"/><circle cx="1284.6" cy="385.6" r="8" fill="#c09a48"/><circle cx="1284.6" cy="385.6" r="5" fill="#3a3f3f"/><rect x="1276.5" y="414.8" width="20" height="20" fill="#8b8d88"/><circle cx="1286.5" cy="424.8" r="8" fill="#c09a48"/><circle cx="1286.5" cy="424.8" r="5" fill="#3a3f3f"/><rect x="1257.8" y="454.8" width="20" height="20" fill="#8b8d88"/><circle cx="1267.8" cy="464.8" r="8" fill="#c09a48"/><circle cx="1267.8" cy="464.8" r="5" fill="#3a3f3f"/><rect x="1316" y="450" width="14" height="25" rx="2" fill="#9c9c94"/><rect x="1185.8" y="655.8" width="21.4" height="47.5" rx="2" fill="#aba596"/><rect x="983" y="166" width="47" height="19" fill="none" stroke="#fbe2e4" stroke-width="1"/><rect x="976" y="170.2" width="60" height="10.800000000000011" fill="#fff" stroke="#e8242c" stroke-width="1.2"/><text x="977.5" y="178.5" font-size="8.3" fill="#111" font-family="Liberation Sans">micro controller</text><rect x="701" y="210" width="85.70000000000005" height="35.5" fill="none" stroke="#fbe2e4" stroke-width="1"/><rect x="703.2" y="215" width="78.39999999999998" height="25.400000000000006" fill="#fff" stroke="#e8242c" stroke-width="1.2"/><text x="705" y="221.0" font-size="5.45" fill="#111" font-family="Liberation Sans">Rear camera base (left)</text><text x="705" y="234.3" font-size="5.45" fill="#111" font-family="Liberation Sans">Camera failure due to damage</text><rect x="810.5" y="210" width="85.10000000000002" height="35.5" fill="none" stroke="#fbe2e4" stroke-width="1"/><rect x="814" y="213.3" width="78.5" height="26.099999999999994" fill="#fff" stroke="#e8242c" stroke-width="1.2"/><text x="815.5" y="219.5" font-size="5.45" fill="#111" font-family="Liberation Sans">Rear camera base (right)</text><text x="815.5" y="232.8" font-size="5.45" fill="#111" font-family="Liberation Sans">Camera failure due to damage</text><rect x="907" y="210" width="84" height="35.5" fill="none" stroke="#fbe2e4" stroke-width="1"/><rect x="909.8" y="213.3" width="77.20000000000005" height="26.099999999999994" fill="#fff" stroke="#e8242c" stroke-width="1.2"/><text x="911" y="219.5" font-size="5.45" fill="#111" font-family="Liberation Sans">flash lamp</text><text x="911" y="232.8" font-size="5.45" fill="#111" font-family="Liberation Sans">Flash failure due to damage</text><rect x="1019" y="210.4" width="45.59999999999991" height="19.599999999999994" fill="none" stroke="#fbe2e4" stroke-width="1"/><rect x="1020.5" y="213.6" width="45.5" height="11.0" fill="#fff" stroke="#e8242c" stroke-width="1.2"/><text x="1022" y="222.1" font-size="8.3" fill="#111" font-family="Liberation Sans">Transmitter</text><rect x="1083" y="210.4" width="44.59999999999991" height="19.599999999999994" fill="none" stroke="#fbe2e4" stroke-width="1"/><rect x="1075.3" y="217" width="61.0" height="8.400000000000006" fill="#fff" stroke="#e8242c" stroke-width="1.2"/><text x="1077" y="223.2" font-size="5.45" fill="#111" font-family="Liberation Sans">Voltage stabilizing tube</text><rect x="1141.8" y="210.4" width="85.20000000000005" height="34.599999999999994" fill="none" stroke="#fbe2e4" stroke-width="1"/><rect x="1143.4" y="215" width="82.19999999999982" height="23.30000000000001" fill="#fff" stroke="#e8242c" stroke-width="1.2"/><text x="1145" y="221.0" font-size="5.45" fill="#111" font-family="Liberation Sans">Front camera base</text><text x="1145" y="234.3" font-size="5.45" fill="#111" font-family="Liberation Sans">Camera failure due to damage</text><rect x="456.6" y="442" width="100.69999999999993" height="45.5" fill="none" stroke="#fbe2e4" stroke-width="1"/><rect x="459.4" y="445.5" width="94.30000000000007" height="37.0" fill="#fff" stroke="#e8242c" stroke-width="1.2"/><text x="460.8" y="450.8" font-size="5.45" fill="#111" font-family="Liberation Sans">Qualcomm pm660a power supply</text><text x="460.8" y="464.1" font-size="5.45" fill="#111" font-family="Liberation Sans">Failure to start, leakage and large</text><text x="460.8" y="470.7" font-size="5.45" fill="#111" font-family="Liberation Sans">current caused by damage</text><rect x="453.5" y="501.3" width="103.79999999999995" height="35.099999999999966" fill="none" stroke="#fbe2e4" stroke-width="1"/><rect x="461.4" y="506" width="90.20000000000005" height="30.399999999999977" fill="#fff" stroke="#e8242c" stroke-width="1.2"/><text x="463" y="511.9" font-size="5.45" fill="#111" font-family="Liberation Sans">WiFi module filter</text><text x="463" y="525.2" font-size="5.45" fill="#111" font-family="Liberation Sans">WiFi and other faults caused by</text><text x="463" y="531.8" font-size="5.45" fill="#111" font-family="Liberation Sans">damage</text><rect x="452" y="546" width="105" height="36" fill="none" stroke="#fbe2e4" stroke-width="1"/><rect x="452.3" y="549.5" width="101.19999999999999" height="30.0" fill="#fff" stroke="#e8242c" stroke-width="1.2"/><text x="453.5" y="555.0" font-size="5.45" fill="#111" font-family="Liberation Sans">Wcn3990wifi module</text><text x="453.5" y="568.3" font-size="5.45" fill="#111" font-family="Liberation Sans">WiFi Bluetooth and other faults caused</text><text x="453.5" y="574.9" font-size="5.45" fill="#111" font-family="Liberation Sans">by damage</text><rect x="453.5" y="590" width="103.70000000000005" height="34.5" fill="none" stroke="#fbe2e4" stroke-width="1"/><rect x="458.4" y="591.5" width="94.30000000000007" height="30.100000000000023" fill="#fff" stroke="#e8242c" stroke-width="1.2"/><text x="460" y="597.1" font-size="5.45" fill="#111" font-family="Liberation Sans">Lamp control tube</text><text x="460" y="610.4" font-size="5.45" fill="#111" font-family="Liberation Sans">Failure such as no light due to</text><text x="460" y="617.0" font-size="5.45" fill="#111" font-family="Liberation Sans">damage</text><rect x="452" y="634" width="105" height="37" fill="none" stroke="#fbe2e4" stroke-width="1"/><rect x="452.8" y="638.2" width="102.80000000000001" height="30.299999999999955" fill="#fff" stroke="#e8242c" stroke-width="1.2"/><text x="454" y="644.0" font-size="5.45" fill="#111" font-family="Liberation Sans">Clock crystal</text><text x="454" y="657.3" font-size="5.45" fill="#111" font-family="Liberation Sans">Cause small current failure to start up</text><text x="454" y="663.9" font-size="5.45" fill="#111" font-family="Liberation Sans">and other faults</text><rect x="1394" y="450" width="101" height="40" fill="none" stroke="#fbe2e4" stroke-width="1"/><rect x="1392" y="455" width="100.79999999999995" height="30.600000000000023" fill="#fff" stroke="#e8242c" stroke-width="1.2"/><text x="1393" y="460.5" font-size="5.45" fill="#111" font-family="Liberation Sans">Sky77643-31 power amplifier</text><text x="1393" y="473.8" font-size="5.45" fill="#111" font-family="Liberation Sans">No network failure caused by damage</text><rect x="1394" y="523" width="101" height="37" fill="none" stroke="#fbe2e4" stroke-width="1"/><rect x="1391" y="527.7" width="103.59999999999991" height="30.299999999999955" fill="#fff" stroke="#e8242c" stroke-width="1.2"/><text x="1392" y="533.0" font-size="5.45" fill="#111" font-family="Liberation Sans">Sky77916-21 power amplifier</text><text x="1392" y="546.3" font-size="5.45" fill="#111" font-family="Liberation Sans">No network failure caused by damage</text><rect x="1390.3" y="630" width="80.70000000000005" height="19" fill="#fff" stroke="#e8242c" stroke-width="1.2"/><text x="1392" y="638.0" font-size="8.3" fill="#111" font-family="Liberation Sans">Field effect transistor</text><rect x="663" y="736" width="70" height="44" fill="none" stroke="#fbe2e4" stroke-width="1"/><rect x="641.3" y="740.2" width="90.5" height="35.299999999999955" fill="#fff" stroke="#e8242c" stroke-width="1.2"/><text x="643" y="745.4" font-size="5.45" fill="#111" font-family="Liberation Sans">Power-on stand</text><text x="643" y="758.7" font-size="5.45" fill="#111" font-family="Liberation Sans">Damage caused failures such as not</text><text x="643" y="765.3" font-size="5.45" fill="#111" font-family="Liberation Sans">turning on and not waking up</text><rect x="739" y="736" width="107" height="43" fill="none" stroke="#fbe2e4" stroke-width="1"/><rect x="740" y="739.7" width="104.5" height="35.799999999999955" fill="#fff" stroke="#e8242c" stroke-width="1.2"/><text x="742" y="745.0" font-size="5.45" fill="#111" font-family="Liberation Sans">Display / earphone / vibrating cable stand</text><text x="742" y="751.6" font-size="5.45" fill="#111" font-family="Liberation Sans">No display, no vibration, no earphone and</text><text x="742" y="758.3" font-size="5.45" fill="#111" font-family="Liberation Sans">other faults caused by damage</text><rect x="850" y="736" width="101" height="36" fill="none" stroke="#fbe2e4" stroke-width="1"/><rect x="858" y="739" width="87.70000000000005" height="30.399999999999977" fill="#fff" stroke="#e8242c" stroke-width="1.2"/><text x="860" y="744.3" font-size="5.45" fill="#111" font-family="Liberation Sans">Charging control tube</text><text x="860" y="757.6" font-size="5.45" fill="#111" font-family="Liberation Sans">No charging and other faults</text><text x="860" y="764.2" font-size="5.45" fill="#111" font-family="Liberation Sans">caused by damage</text><rect x="1014.5" y="736" width="70.5" height="45" fill="none" stroke="#fbe2e4" stroke-width="1"/><rect x="1017.3" y="740.4" width="65.0" height="37.10000000000002" fill="#fff" stroke="#e8242c" stroke-width="1.2"/><text x="1019" y="745.9" font-size="5.45" fill="#111" font-family="Liberation Sans">Tail plug cable base</text><text x="1019" y="759.2" font-size="5.45" fill="#111" font-family="Liberation Sans">Failure to charge or</text><text x="1019" y="765.8" font-size="5.45" fill="#111" font-family="Liberation Sans">connect due to damage</text><rect x="1094" y="736" width="78" height="46" fill="none" stroke="#fbe2e4" stroke-width="1"/><rect x="1096" y="739.2" width="75.20000000000005" height="40.59999999999991" fill="#fff" stroke="#e8242c" stroke-width="1.2"/><text x="1098" y="744.7" font-size="5.45" fill="#111" font-family="Liberation Sans">Fingerprint cable base</text><text x="1098" y="758.0" font-size="5.45" fill="#111" font-family="Liberation Sans">No fingerprint, no ringing and</text><text x="1098" y="764.6" font-size="5.45" fill="#111" font-family="Liberation Sans">other faults caused by</text><text x="1098" y="771.3" font-size="5.45" fill="#111" font-family="Liberation Sans">damage</text><rect x="1195" y="736" width="96" height="45" fill="none" stroke="#fbe2e4" stroke-width="1"/><rect x="1199.3" y="739.7" width="90.10000000000014" height="33.799999999999955" fill="#fff" stroke="#e8242c" stroke-width="1.2"/><text x="1201" y="745.4" font-size="5.45" fill="#111" font-family="Liberation Sans">Battery holder</text><text x="1201" y="758.7" font-size="5.45" fill="#111" font-family="Liberation Sans">Failure of startup caused by</text><text x="1201" y="765.3" font-size="5.45" fill="#111" font-family="Liberation Sans">damage</text><rect x="943" y="804" width="100" height="41" fill="none" stroke="#fbe2e4" stroke-width="1"/><rect x="949.5" y="809.4" width="89.79999999999995" height="32.60000000000002" fill="#fff" stroke="#e8242c" stroke-width="1.2"/><text x="951" y="815.2" font-size="5.45" fill="#111" font-family="Liberation Sans">Qualcomm pm660 power supply</text><text x="951" y="828.5" font-size="5.45" fill="#111" font-family="Liberation Sans">Failure to start, leakage and large</text><text x="951" y="835.1" font-size="5.45" fill="#111" font-family="Liberation Sans">current caused by damage</text><circle cx="455" cy="163.5" r="1" fill="#f00"/></svg><!--/DOC-->
<!-- STATUS -->
<div id="status" class="a"><div class="a t">XZZ Schematics https://www.xzztools.com</div></div>

</body></html>
